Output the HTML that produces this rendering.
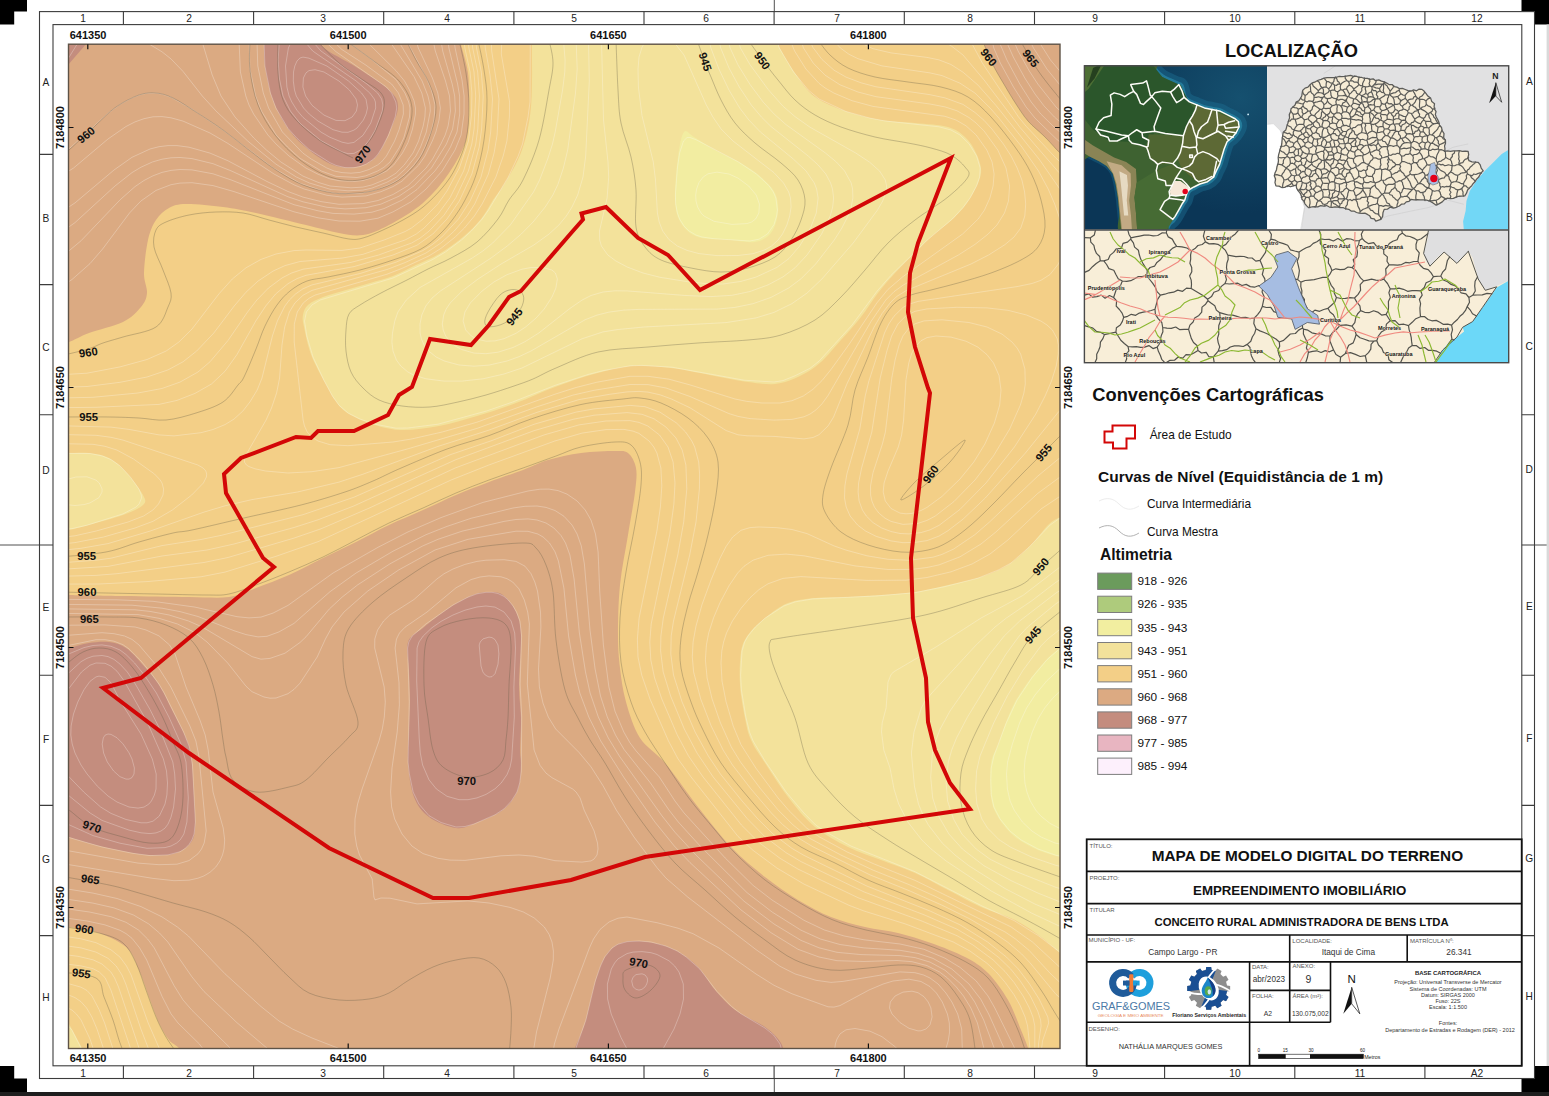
<!DOCTYPE html>
<html lang="pt-BR"><head><meta charset="utf-8"><title>Mapa de Modelo Digital do Terreno</title>
<style>
html,body{margin:0;padding:0;background:#fff;}
body{width:1549px;height:1096px;overflow:hidden;font-family:"Liberation Sans",sans-serif;}
svg{display:block}
svg text{font-family:"Liberation Sans",sans-serif;}
</style></head><body>
<svg width="1549" height="1096" viewBox="0 0 1549 1096">
<rect width="1549" height="1096" fill="#fff"/>

<clipPath id="mc"><rect x="68.5" y="44.2" width="991.5" height="1004.3"/></clipPath>
<g clip-path="url(#mc)">
<rect x="68.5" y="44.2" width="991.5" height="1004.3" fill="#f3cf87"/>
<path d="M60.0,342.0 C61.5,342.0 64.2,343.5 69.0,342.0 C73.8,340.5 80.0,336.3 89.0,333.0 C98.0,329.7 114.3,326.3 123.0,322.0 C131.7,317.7 137.0,311.8 141.0,307.0 C145.0,302.2 146.5,298.7 147.0,293.0 C147.5,287.3 143.8,281.8 144.0,273.0 C144.2,264.2 146.0,248.8 148.0,240.0 C150.0,231.2 152.5,225.3 156.0,220.0 C159.5,214.7 164.0,210.7 169.0,208.0 C174.0,205.3 177.0,204.2 186.0,204.0 C195.0,203.8 211.3,205.5 223.0,207.0 C234.7,208.5 242.2,210.0 256.0,213.0 C269.8,216.0 292.2,221.7 306.0,225.0 C319.8,228.3 329.5,231.3 339.0,233.0 C348.5,234.7 354.7,236.3 363.0,235.0 C371.3,233.7 379.0,230.3 389.0,225.0 C399.0,219.7 413.0,211.7 423.0,203.0 C433.0,194.3 441.8,183.5 449.0,173.0 C456.2,162.5 462.7,151.0 466.0,140.0 C469.3,129.0 468.7,118.2 469.0,107.0 C469.3,95.8 469.3,83.5 468.0,73.0 C466.7,62.5 462.3,51.2 461.0,44.0 C459.7,36.8 460.2,32.3 460.0,30.0 L60.0,30.0 Z" fill="#dbaa82"/>
<path d="M60.0,595.0 C61.3,595.0 57.5,594.8 68.0,595.0 C78.5,595.2 102.8,595.7 123.0,596.0 C143.2,596.3 171.3,596.8 189.0,597.0 C206.7,597.2 217.8,598.5 229.0,597.0 C240.2,595.5 246.0,591.7 256.0,588.0 C266.0,584.3 277.8,580.0 289.0,575.0 C300.2,570.0 311.8,563.5 323.0,558.0 C334.2,552.5 345.0,547.5 356.0,542.0 C367.0,536.5 377.8,530.3 389.0,525.0 C400.2,519.7 411.8,515.0 423.0,510.0 C434.2,505.0 445.0,499.7 456.0,495.0 C467.0,490.3 477.8,486.2 489.0,482.0 C500.2,477.8 513.2,473.7 523.0,470.0 C532.8,466.3 538.3,462.8 548.0,460.0 C557.7,457.2 569.8,454.5 581.0,453.0 C592.2,451.5 607.2,451.0 615.0,451.0 C622.8,451.0 624.5,450.2 628.0,453.0 C631.5,455.8 634.8,461.5 636.0,468.0 C637.2,474.5 636.3,480.8 635.0,492.0 C633.7,503.2 630.5,519.5 628.0,535.0 C625.5,550.5 621.7,568.3 620.0,585.0 C618.3,601.7 618.0,621.2 618.0,635.0 C618.0,648.8 618.7,656.8 620.0,668.0 C621.3,679.2 622.7,690.3 626.0,702.0 C629.3,713.7 633.5,727.8 640.0,738.0 C646.5,748.2 655.3,751.5 665.0,763.0 C674.7,774.5 687.0,793.0 698.0,807.0 C709.0,821.0 719.8,835.3 731.0,847.0 C742.2,858.7 753.8,868.2 765.0,877.0 C776.2,885.8 787.0,893.3 798.0,900.0 C809.0,906.7 819.8,912.5 831.0,917.0 C842.2,921.5 853.8,924.3 865.0,927.0 C876.2,929.7 887.0,930.3 898.0,933.0 C909.0,935.7 919.8,939.0 931.0,943.0 C942.2,947.0 955.5,952.0 965.0,957.0 C974.5,962.0 980.8,965.8 988.0,973.0 C995.2,980.2 1002.5,990.5 1008.0,1000.0 C1013.5,1009.5 1017.7,1022.0 1021.0,1030.0 C1024.3,1038.0 1026.5,1043.0 1028.0,1048.0 C1029.5,1053.0 1029.7,1058.0 1030.0,1060.0 L60.0,1060.0 Z" fill="#dbaa82"/>
<path d="M982.0,36.0 C982.3,37.3 982.2,39.2 984.0,44.0 C985.8,48.8 989.5,58.0 993.0,65.0 C996.5,72.0 1001.2,79.5 1005.0,86.0 C1008.8,92.5 1012.2,98.2 1016.0,104.0 C1019.8,109.8 1023.2,115.5 1028.0,121.0 C1032.8,126.5 1040.0,132.0 1045.0,137.0 C1050.0,142.0 1054.5,147.5 1058.0,151.0 C1061.5,154.5 1064.7,156.8 1066.0,158.0 L1070.0,30.0 Z" fill="#dbaa82"/>
<path d="M264.0,30.0 C264.0,32.3 263.8,37.8 264.0,44.0 C264.2,50.2 263.5,57.7 265.0,67.0 C266.5,76.3 269.0,89.5 273.0,100.0 C277.0,110.5 283.0,121.7 289.0,130.0 C295.0,138.3 301.7,144.2 309.0,150.0 C316.3,155.8 325.2,162.2 333.0,165.0 C340.8,167.8 348.8,168.3 356.0,167.0 C363.2,165.7 370.5,162.7 376.0,157.0 C381.5,151.3 385.3,141.3 389.0,133.0 C392.7,124.7 398.0,114.2 398.0,107.0 C398.0,99.8 396.0,96.7 389.0,90.0 C382.0,83.3 367.0,74.2 356.0,67.0 C345.0,59.8 329.3,53.2 323.0,47.0 C316.7,40.8 318.8,32.8 318.0,30.0 Z" fill="#c48d7e"/>
<path d="M60.0,35.0 L87.0,43.0 L68.0,65.0 L60.0,70.0 Z" fill="#c48d7e"/>
<path d="M60.0,648.0 C61.5,648.0 64.2,648.8 69.0,648.0 C73.8,647.2 82.3,644.0 89.0,643.0 C95.7,642.0 102.8,641.2 109.0,642.0 C115.2,642.8 120.3,644.2 126.0,648.0 C131.7,651.8 137.5,658.8 143.0,665.0 C148.5,671.2 154.0,677.2 159.0,685.0 C164.0,692.8 168.5,703.2 173.0,712.0 C177.5,720.8 183.0,730.8 186.0,738.0 C189.0,745.2 189.7,745.2 191.0,755.0 C192.3,764.8 193.3,784.5 194.0,797.0 C194.7,809.5 195.8,822.0 195.0,830.0 C194.2,838.0 192.7,841.0 189.0,845.0 C185.3,849.0 179.7,852.3 173.0,854.0 C166.3,855.7 157.3,855.5 149.0,855.0 C140.7,854.5 131.8,852.7 123.0,851.0 C114.2,849.3 105.0,847.3 96.0,845.0 C87.0,842.7 75.0,838.7 69.0,837.0 C63.0,835.3 61.5,835.3 60.0,835.0 Z" fill="#c48d7e"/>
<path d="M408.0,642.0 C410.3,635.0 416.2,633.7 423.0,628.0 C429.8,622.3 440.7,613.5 449.0,608.0 C457.3,602.5 466.3,597.7 473.0,595.0 C479.7,592.3 484.0,592.0 489.0,592.0 C494.0,592.0 498.5,591.7 503.0,595.0 C507.5,598.3 513.0,605.3 516.0,612.0 C519.0,618.7 520.5,622.8 521.0,635.0 C521.5,647.2 519.0,671.2 519.0,685.0 C519.0,698.8 520.8,707.2 521.0,718.0 C521.2,728.8 520.0,742.2 520.0,750.0 C520.0,757.8 521.3,758.3 521.0,765.0 C520.7,771.7 521.0,782.5 518.0,790.0 C515.0,797.5 510.0,804.5 503.0,810.0 C496.0,815.5 483.8,820.0 476.0,823.0 C468.2,826.0 463.8,829.0 456.0,828.0 C448.2,827.0 436.0,822.2 429.0,817.0 C422.0,811.8 417.5,806.0 414.0,797.0 C410.5,788.0 408.8,774.2 408.0,763.0 C407.2,751.8 408.7,740.5 409.0,730.0 C409.3,719.5 410.0,710.0 410.0,700.0 C410.0,690.0 409.3,679.7 409.0,670.0 C408.7,660.3 405.7,649.0 408.0,642.0 Z" fill="#c48d7e"/>
<path d="M572.0,1060.0 C572.5,1058.0 572.8,1054.2 575.0,1048.0 C577.2,1041.8 581.7,1033.8 585.0,1023.0 C588.3,1012.2 591.7,994.0 595.0,983.0 C598.3,972.0 600.7,963.7 605.0,957.0 C609.3,950.3 613.8,945.5 621.0,943.0 C628.2,940.5 639.0,940.8 648.0,942.0 C657.0,943.2 666.7,945.8 675.0,950.0 C683.3,954.2 691.3,960.3 698.0,967.0 C704.7,973.7 708.8,982.8 715.0,990.0 C721.2,997.2 726.7,1003.8 735.0,1010.0 C743.3,1016.2 757.3,1021.5 765.0,1027.0 C772.7,1032.5 777.7,1037.5 781.0,1043.0 C784.3,1048.5 784.3,1057.2 785.0,1060.0 Z" fill="#c48d7e"/>
<path d="M532.0,30.0 C532.0,32.3 532.2,31.2 532.0,44.0 C531.8,56.8 532.7,89.3 531.0,107.0 C529.3,124.7 526.3,137.3 522.0,150.0 C517.7,162.7 509.8,174.7 505.0,183.0 C500.2,191.3 497.0,194.0 493.0,200.0 C489.0,206.0 486.0,212.8 481.0,219.0 C476.0,225.2 470.0,231.2 463.0,237.0 C456.0,242.8 446.8,249.3 439.0,254.0 C431.2,258.7 423.7,261.3 416.0,265.0 C408.3,268.7 400.7,273.0 393.0,276.0 C385.3,279.0 377.8,280.7 370.0,283.0 C362.2,285.3 353.8,287.7 346.0,290.0 C338.2,292.3 329.3,294.5 323.0,297.0 C316.7,299.5 311.3,302.0 308.0,305.0 C304.7,308.0 303.7,311.3 303.0,315.0 C302.3,318.7 302.5,320.0 304.0,327.0 C305.5,334.0 307.8,346.5 312.0,357.0 C316.2,367.5 325.2,382.8 329.0,390.0 C332.8,397.2 332.2,396.3 335.0,400.0 C337.8,403.7 340.3,408.2 346.0,412.0 C351.7,415.8 360.0,420.0 369.0,423.0 C378.0,426.0 388.3,429.5 400.0,430.0 C411.7,430.5 426.2,428.3 439.0,426.0 C451.8,423.7 464.2,419.8 477.0,416.0 C489.8,412.2 503.0,407.8 516.0,403.0 C529.0,398.2 542.0,391.8 555.0,387.0 C568.0,382.2 581.2,377.5 594.0,374.0 C606.8,370.5 619.2,367.0 632.0,366.0 C644.8,365.0 659.7,366.8 671.0,368.0 C682.3,369.2 687.2,370.7 700.0,373.0 C712.8,375.3 734.5,380.3 748.0,382.0 C761.5,383.7 769.8,385.5 781.0,383.0 C792.2,380.5 805.0,374.2 815.0,367.0 C825.0,359.8 833.3,348.3 841.0,340.0 C848.7,331.7 854.8,324.8 861.0,317.0 C867.2,309.2 872.3,300.3 878.0,293.0 C883.7,285.7 888.8,279.7 895.0,273.0 C901.2,266.3 909.0,259.0 915.0,253.0 C921.0,247.0 924.3,243.0 931.0,237.0 C937.7,231.0 948.3,223.7 955.0,217.0 C961.7,210.3 966.7,204.3 971.0,197.0 C975.3,189.7 980.2,180.3 981.0,173.0 C981.8,165.7 978.7,159.0 976.0,153.0 C973.3,147.0 969.7,141.3 965.0,137.0 C960.3,132.7 956.3,129.3 948.0,127.0 C939.7,124.7 926.2,124.2 915.0,123.0 C903.8,121.8 892.2,121.8 881.0,120.0 C869.8,118.2 859.0,115.8 848.0,112.0 C837.0,108.2 823.8,103.5 815.0,97.0 C806.2,90.5 801.2,81.8 795.0,73.0 C788.8,64.2 781.3,51.2 778.0,44.0 C774.7,36.8 775.5,32.3 775.0,30.0 Z" fill="#f3e29b"/>
<path d="M60.0,453.0 C61.5,453.0 64.2,453.0 69.0,453.0 C73.8,453.0 82.3,452.2 89.0,453.0 C95.7,453.8 102.8,454.8 109.0,458.0 C115.2,461.2 120.3,465.8 126.0,472.0 C131.7,478.2 140.2,489.5 143.0,495.0 C145.8,500.5 146.3,501.7 143.0,505.0 C139.7,508.3 132.0,511.7 123.0,515.0 C114.0,518.3 98.0,522.5 89.0,525.0 C80.0,527.5 73.8,529.0 69.0,530.0 C64.2,531.0 61.5,530.8 60.0,531.0 Z" fill="#f3e29b"/>
<path d="M1070.0,512.0 C1068.3,512.8 1063.7,514.8 1060.0,517.0 C1056.3,519.2 1052.8,520.3 1048.0,525.0 C1043.2,529.7 1037.7,538.3 1031.0,545.0 C1024.3,551.7 1016.3,559.7 1008.0,565.0 C999.7,570.3 991.0,573.7 981.0,577.0 C971.0,580.3 959.0,582.5 948.0,585.0 C937.0,587.5 926.2,590.3 915.0,592.0 C903.8,593.7 892.2,594.2 881.0,595.0 C869.8,595.8 859.0,596.5 848.0,597.0 C837.0,597.5 825.0,597.0 815.0,598.0 C805.0,599.0 796.3,599.7 788.0,603.0 C779.7,606.3 771.7,612.7 765.0,618.0 C758.3,623.3 752.0,629.3 748.0,635.0 C744.0,640.7 742.3,643.7 741.0,652.0 C739.7,660.3 739.3,674.0 740.0,685.0 C740.7,696.0 743.2,708.8 745.0,718.0 C746.8,727.2 747.7,732.5 751.0,740.0 C754.3,747.5 758.8,753.5 765.0,763.0 C771.2,772.5 779.7,786.3 788.0,797.0 C796.3,807.7 805.0,818.7 815.0,827.0 C825.0,835.3 837.0,841.5 848.0,847.0 C859.0,852.5 869.8,855.7 881.0,860.0 C892.2,864.3 903.8,868.0 915.0,873.0 C926.2,878.0 937.0,884.3 948.0,890.0 C959.0,895.7 969.8,902.0 981.0,907.0 C992.2,912.0 1005.0,915.0 1015.0,920.0 C1025.0,925.0 1033.5,931.5 1041.0,937.0 C1048.5,942.5 1055.2,949.2 1060.0,953.0 C1064.8,956.8 1068.3,958.8 1070.0,960.0 Z" fill="#f3e29b"/>
<path d="M684.0,132.0 C681.3,135.3 679.5,145.7 678.0,157.0 C676.5,168.3 674.5,189.0 675.0,200.0 C675.5,211.0 677.2,216.8 681.0,223.0 C684.8,229.2 689.7,234.2 698.0,237.0 C706.3,239.8 721.5,239.2 731.0,240.0 C740.5,240.8 748.3,243.2 755.0,242.0 C761.7,240.8 767.2,237.8 771.0,233.0 C774.8,228.2 777.3,219.7 778.0,213.0 C778.7,206.3 777.8,199.0 775.0,193.0 C772.2,187.0 766.7,182.0 761.0,177.0 C755.3,172.0 748.7,167.5 741.0,163.0 C733.3,158.5 722.8,154.3 715.0,150.0 C707.2,145.7 699.2,140.0 694.0,137.0 C688.8,134.0 686.7,128.7 684.0,132.0 Z" fill="#f2eda1"/>
<path d="M1070.0,642.0 C1068.3,643.0 1063.7,645.3 1060.0,648.0 C1056.3,650.7 1052.8,653.0 1048.0,658.0 C1043.2,663.0 1036.5,670.7 1031.0,678.0 C1025.5,685.3 1019.3,694.2 1015.0,702.0 C1010.7,709.8 1007.8,717.8 1005.0,725.0 C1002.2,732.2 1000.3,738.7 998.0,745.0 C995.7,751.3 992.2,754.3 991.0,763.0 C989.8,771.7 989.8,788.0 991.0,797.0 C992.2,806.0 994.0,810.3 998.0,817.0 C1002.0,823.7 1008.3,831.5 1015.0,837.0 C1021.7,842.5 1030.5,846.7 1038.0,850.0 C1045.5,853.3 1054.7,855.5 1060.0,857.0 C1065.3,858.5 1068.3,858.7 1070.0,859.0 Z" fill="#f2eda1"/>
<path d="M60.0,926.0 C61.5,926.2 63.0,926.0 69.0,927.0 C75.0,928.0 86.5,928.7 96.0,932.0 C105.5,935.3 118.8,940.7 126.0,947.0 C133.2,953.3 135.2,961.7 139.0,970.0 C142.8,978.3 145.7,988.2 149.0,997.0 C152.3,1005.8 155.7,1015.8 159.0,1023.0 C162.3,1030.2 165.7,1035.8 169.0,1040.0 C172.3,1044.2 176.3,1044.7 179.0,1048.0 C181.7,1051.3 184.0,1058.0 185.0,1060.0 L60.0,1060.0 Z" fill="#f3cf87"/>
<path d="M60.0,1018.0 L68.0,1022.0 L82.0,1048.0 L85.0,1060.0 L60.0,1060.0 Z" fill="#f3e29b"/>
<path d="M1068,686.9l-6,2.7 -9,8.2 -8.3,10.2 -6.7,11 -5.7,13 -3.9,12 -3.3,15 -1,12 0.8,12 2,9 3.4,9 5.4,9 5.3,6.2 9,7.2 9,4.7 9,2.3M1068,665.2l-9,4.3 -12,11.1 -12,14.4 -8.4,13 -7,15 -7.2,21 -4.8,18 -1.1,12 0.9,15 2.7,12 4,9 8.3,12 9.5,9 9.2,6 13.9,6 13,2.7M708,173.8l-4.8,3.2 -4.2,5.5 -2.4,6.5 -0.9,6 0.3,6 1.6,6 3.5,6 2.9,3 10,5.3 18,3.1 15,-0.8 4.6,-1.6 4,-3 3.3,-6 0.5,-9 -3.2,-9 -7.5,-9 -10.7,-7.9 -9,-4.1 -12,-1.9 -9,1.7M1068,645.5l-9,3.8 -12,10.4 -15,17.9 -15,22.5 -10.8,22.9 -12.3,33 -2.7,12 -0.4,12 0.5,15 2.6,12 6.2,12 9.8,12 11.3,9 16.8,9 18,6.3 12,2.2M687,137.6l-3.5,3.4 -3.9,12 -2.2,15 -2,27 0.3,9 1.7,9 2.2,6 4.4,7 5.1,5 6.9,4.1 6,1.9 12,1.7 36,2.3 9,-1.8 8.5,-5.2 6.5,-9.4 2.6,-8.6 0.8,-6 -1.5,-12 -2.6,-6 -4,-6 -12.9,-12 -18.4,-12.3 -42,-22 -6,-2.2 -3,0.1M648.5,36l-6.5,11.3 -3,9.7 -1,12 0.4,18 3.6,28.7 11.3,46.3 2.2,18 1.9,33 1.8,9 3.5,9 6.3,8.6 8.3,6.4 9.7,4.4 12,3.2 18,2 21,-0.1 15,-1.8 12,-3.9 6.6,-3.8 6.5,-6 4.4,-6 4.4,-9 2.8,-9 1.4,-9 -0.6,-9 -1.8,-6 -5.2,-9 -9.5,-10.3 -41,-31.7 -11.9,-12 -8.2,-12 -6.6,-12 -22.3,-50 -14.8,-19M1068,625.5l-9,4.6 -11.2,8.9 -6.8,6.8 -18,24.5 -15.7,25.7 -13.6,27 -13.7,33 -3.4,15 -1,18 1.3,15 5,15 5.6,9 11.5,11.7 12,7.7 21,9.8 24,8.2 12,2.5M601.4,36l2.1,84 4.5,42 0.7,15 -1.6,21 -7.6,33 0.2,9 1.7,6 6.4,9 8.1,6 11.3,6 15.8,6 17,4.3 27,4.3 21,2.2 15,0.2 18,-2.6 15,-4.3 21,-9.7 12,-8.9 10.7,-12.5 10.8,-18 5.8,-15 1.8,-15 -1.5,-9 -2.3,-6 -8.2,-12 -12.8,-12 -32.9,-27 -11.5,-12 -9.2,-12 -10.7,-17.9 -10.1,-21.1 -8,-21 -2.8,-12M1068,597.7l-6,2.1 -6,3.9 -28.4,23.3 -8.4,9 -13.1,18 -38.6,63 -11,21 -4.8,12 -3.4,12 -2.2,21 1.5,18 5.9,18 8.4,15 14.3,15 13.8,10.2 21,10.3 45,17.9 12,3.4M522,269.2l-15,5.5 -13.1,7.3 -11.8,9 -11.8,12 -5.4,9 -1.8,9 2.6,9 5.6,6 5.7,3.2 9,2 9,-0.3 9,-2.2 12,-5.4 9.6,-6.3 10.5,-9 8.1,-9 7.8,-12 3.9,-9 1.5,-9 -2,-6 -3.5,-3 -8.9,-2.5 -12,0 -9,1.7M588.4,36l0.9,45 -3.6,75 -2.7,21 -5.3,18 -5.7,12 -5.7,9 -7.4,9 -9.8,9 -15.1,10.9 -33,19.2 -22.9,14.9 -15.9,12 -12,12 -4,6 -2.5,6 -1.4,9 0.9,6 2.5,6 4.7,6 5.6,4.5 6,3.1 12,3.5 12,0.6 12,-1.5 15,-4.7 12,-5.8 13.8,-8.7 31.2,-24.6 12,-8.3 9,-4.6 12,-3.5 12,-1.2 12,0.1 57,4.5 27,1.2 21,-1.3 18,-3.8 18,-6.6 15,-8 12,-9.1 12,-12.8 14.6,-21 8.6,-18 2.5,-9 0.9,-9 -1.1,-9 -1.9,-6 -4.8,-9 -7.6,-9 -10,-9 -37.2,-29.5 -9.6,-9.5 -10.1,-12 -12,-18 -10.3,-19 -8.3,-20 -2.7,-12M1068,587.3l-6,2 -6,3.7 -36.3,28 -15.5,15 -14.3,18 -39.9,57 -9.8,18 -4.7,12 -3.1,12 -1.7,24 2,21 5.8,18 10.4,18 13.5,15 21.6,16.8 27,14.8 27,12.5 21,8.4 9,2.3M575.9,36l1.3,33 -1.7,24 -7.8,57 -4.3,18 -5.4,16.2 -5.1,10.8 -7.7,12 -12.1,15 -11.8,12 -14.1,12 -16.1,12 -50.7,33 -8.4,7.1 -6.2,7.9 -4,9 -1.8,9 0.1,9 1.3,6 2.7,6 4.9,6.3 7.2,5.7 7.8,3.9 15,4.1 15,1.2 15,-1.1 18,-4.1 12,-4.3 12,-5.7 54,-31.2 12,-4.7 12,-3 15,-2 15,-0.7 78,-0.3 18,-1.7 18,-3.7 18,-6.3 17.7,-9.4 12.3,-9.2 14.7,-14.8 18.6,-24 7.6,-12 6.1,-12 3.2,-9 1.7,-9 -0.3,-9 -1.4,-6 -6.6,-12 -8.2,-9 -11,-9 -39.4,-28.4 -11.9,-10.6 -11,-12 -13.1,-17.6 -12,-19.5 -7.9,-16.9 -2.8,-12M1068,576.5l-6,2 -6,3.7 -24,18.4 -25.6,17.4 -11.4,9 -18.9,18 -44.2,48 -7.4,9 -3.2,6 -7.3,24 -2.6,21 3,33 4.1,18 4.9,12 5,9 13.8,18 12.8,12 14,10.8 36,22.7 30,15.6 24,10 9,2.3M563.1,36l2,24 -0.3,12 -2.2,18 -7.4,42 -2.7,12 -4.8,15 -8.1,21 -6.1,12 -23.2,33 -17.6,18 -9.7,7.9 -10.7,7.1 -52.3,29.5 -13.7,12.5 -8.4,12 -3.1,9 -2.3,12 -0.6,9 1.1,9 3.4,9 4.4,6 7.1,6 5.7,3 12.4,3.8 18,2.3 18,0 21,-2.3 21,-4.8 18,-6 60,-29.2 21,-6.9 15,-2.4 26,-2.5 82,-4.4 30,-4.7 18,-5.5 18,-8.8 15,-10.5 14.9,-14.1 31.3,-36 24.3,-33 5.2,-9 3.3,-9 0.6,-6 -1.3,-6 -5.7,-9 -10.2,-9 -13.7,-9 -45.7,-25.8 -15,-10.6 -12,-10.4 -15,-16.9 -18,-24.7 -9.6,-16.6 -3.2,-12M60,504l15,1.5 9,-0.9 6,-1.7 9,-5.3 3,-5.5 0.1,-3.1 -2.8,-6 -3.3,-2.9 -9,-3.3 -11.1,0.2 -15.9,4.3M1068,563.8l-9,4 -36,27.6 -41.9,22.6 -45.1,29 -42.6,25 -2.6,3 -2.8,7.2 -1.9,25.8 -3.9,15 -0.7,9 2.3,18 6.2,18 4,21 4.7,15 9.1,18 14,18 9.3,9 15,12 45.1,30 40.8,22.3 27,12.6 9,2.7M530.3,36l-0.3,66 -2,15 -5.5,27 -4.3,12 -9.9,21 -19.8,33 -6.3,9 -10.9,12 -9.8,9 -16.1,12 -13.4,7.9 -39,18.1 -72.8,22 -8.2,4.9 -5.6,7.1 -1.9,9 2.3,15 6.2,21 11,23.4 8.4,15.6 6.6,9.2 9,7.8 12,6.1 15,5.1 21,4 12,-0.2 30,-3.8 48.5,-13.2 26.2,-9 42.3,-16.6 33,-10.9 15,-3.8 27,-4.9 12,-0.4 30,1.8 72,13 30,1.8 9,-1.4 12,-4.8 15,-7.5 9,-7.1 33,-36.1 25.2,-34.1 13.8,-15.7 36,-35 25.3,-21.3 10.7,-11.5 7,-9.5 6.5,-12 3.1,-9 0.6,-9 -3.6,-12 -7.4,-12 -9.2,-9 -9,-5 -12,-3.2 -54,-5.8 -15,-2.9 -24,-6.6 -27,-12.5 -10.8,-9 -14.7,-18 -14.3,-24 -3.4,-12M1068,515.5l-9,3.2 -8.9,6.3 -21.1,22.2 -18,15.8 -12.8,7 -20.2,8.1 -33,8.5 -30,6.1 -39,3.3 -63,2.9 -18,3 -11.2,4.1 -18.8,12.2 -9.6,8.8 -7.4,9 -3.3,6 -2.7,9 -1.4,24 0.8,15 4.4,27 3.7,15 3.6,9 11.9,20 21.1,31 17.8,21 11.8,12 8.6,6 26.5,15 64.2,25.7 67,34.3 32,14.5 24.8,15.5 20.2,15.5 9,4.2M60,529.9l12,-1.3 15,-3.4 36,-11.3 13.1,-6.9 3,-3 2.4,-6 -0.2,-3 -2.4,-6 -8.5,-12 -10.4,-11.1 -9,-6.3 -9,-3.7 -12,-2.4 -30,-0.2M82.5,1056l-2,-9 -8.5,-16.8 -6,-6.9 -6,-2.5M502,36l-0.7,18 8.3,48 -0.2,15 -2.5,24 -3.7,15 -7.3,21 -13.8,27 -7.7,12 -10,12 -9.2,9 -14.2,11.4 -12,7.5 -27,12.5 -15,5.8 -72,20.9 -6,3.2 -5.8,4.7 -5.9,9 -3,12 -0.1,18 8.9,78 1.4,6 2.7,6 4.8,5.2 6,3.8 12,3.7 18,1 45,-3.7 18,-2.9 31.2,-7.1 34.8,-9.8 78,-28 21,-6.7 21,-5.3 33,-5.9 18,0 21,2.9 21,5.7 45,14.1 12,2.4 15,1.6 18,0 12,-2.3 11.3,-4.7 9.7,-6.7 9,-8.7 9,-11.1 18,-25 27.8,-41.5 11.2,-13.6 15,-12.8 59.6,-42.6 15.6,-15 6.3,-9 5.4,-12 3.2,-12 1,-12 -2,-12 -5.3,-12 -10.6,-15 -10.2,-9.2 -10,-5.8 -11,-3.7 -72,-9.9 -21,-5.7 -18,-7.6 -9,-5.2 -6,-4.6 -13.1,-14.3 -11.3,-18 -3.7,-9 -1.2,-6M1068,493.7l-9,3.3 -18,12 -33.1,31 -17.9,14 -18,10 -21,7.8 -24,5.7 -21,2.7 -39,0.2 -66,-3.8 -18,1.8 -15,5.4 -9,5.8 -9,8.2 -9,10.5 -8.6,12.7 -5.9,12 -2.9,9 -1.8,9 -0.8,12 1,18 4,20.4 7.2,24.6 7.8,18.7 14.8,23.3 22.3,30 10.9,12.7 17.6,17.3 13,9 27.6,15 27,12 40.8,16.4 96,46.5 21.5,15.1 26.5,24.5 9,4.5M60,537.5l15,-1.7 21.2,-4.8 31.8,-9 15.6,-6 9.3,-6 5.6,-6 4.5,-9 0.6,-6 -1.6,-6 -1.8,-3 -5.7,-6 -21,-15 -16.5,-8.9 -12,-3.8 -12,-2 -33,-0.7M94.4,1056l-1.4,-8 -3,-9 -9,-19.1 -4.6,-5.9 -4.4,-3.9 -6,-3.1 -6,-1.4M491.1,36l0.6,15 7.3,48 -1.9,36 -3,18 -5.7,21 -13.7,30 -7.7,12 -12.7,15 -13.4,12 -14.9,10 -21,9.6 -18,6.9 -75,20.9 -9,4.9 -8.1,7.7 -5.5,9 -4.7,15 -2.7,18 -2.4,33 -3,15 -5.1,15 -5.4,12 -20.8,36 -0.9,6 2,3 2.6,1.6 6,2.2 10.5,2.2 22.5,2 24,-1.3 27,-4.1 69,-18.8 69,-20.4 60,-21.6 36,-11.7 21,-4.8 36,-5.8 18,0.1 18,3.4 24,8.5 39,17.1 9,2.8 12,2.2 24,1.5 18,-0.7 12,-2.6 6,-2.7 6,-4.2 6,-6.1 6,-8.2 43.3,-74.6 14.5,-21 8.2,-8.3 9,-6.5 55.4,-30.2 16.6,-10.6 13.2,-10.4 8.7,-9 7.6,-12 4,-12 1.1,-15 -3.6,-18 -8.2,-18 -13.8,-19.1 -7.9,-7.9 -7.1,-5.5 -12,-6.7 -12,-3.9 -15,-2.9 -54,-7.3 -18,-4.7 -18,-7.2 -15,-9.7 -11.8,-12.1 -9.7,-15 -3.7,-12M1068,474l-9,3.8 -21,15.4 -42,38.7 -15,12.1 -21,12.8 -21,8.1 -12,2.6 -15,1.9 -24,0.1 -33,-3.6 -51,-10.1 -18,-1.7 -18,1.2 -15,4.9 -9,6.1 -6.3,6.7 -8.7,12.8 -9,16.9 -6.5,15.3 -4.8,15 -2.3,12 -1,15 1.7,18 5,21 8.4,24 10.8,24 9.2,15 20.2,27 17.4,21 15,15 16.9,13.5 30.8,16.5 32.2,15.1 36,14.5 27,12.1 69,35.2 10.5,7.1 13.5,11.3 21,22.8 9,8.5 6,3.9 3,0.8M60,544.2l15,-1.6 28.6,-5.6 31.4,-9 18,-6.7 19.4,-11.3 19.3,-15 11.7,-12 3,-6 0.3,-3 -0.9,-3 -2.7,-3 -5.3,-3 -74.8,-24.9 -12,-2.8 -15,-2 -36,-0.8M104.7,1056l-1.7,-9 -6,-18 -5.1,-12 -5.3,-9 -5.6,-6.3 -6,-4.1 -6,-2.4 -9,-1.8M484.5,36l0.8,12 4.7,27 2.5,24 -1.8,33 -2.6,18 -7.1,27 -10.9,24 -11.6,18 -16.7,18 -9.8,7.8 -9,5.7 -27,11.7 -36,11.3 -48,11.4 -9,3.9 -7.5,5.2 -6.1,6 -4.5,6 -7.5,15 -5,15 -10.4,42 -4.8,12 -7.3,12 -7,9 -8.9,8.1 -9,5.5 -12,4.9 -12,3.2 -27,3.2 -15,-1 -30,-5.5 -18,-2.3 -51,-1.4M1068,454l-9,4.5 -21,17.4 -48.5,46.1 -14.5,12.6 -21.3,14.4 -11.7,5.4 -9,2.8 -24,3.1 -21,-1 -21,-3.5 -21,-5.7 -12,-4.2 -27,-12.3 -15,-4.1 -15,-1.8 -18,-0.7 -9,0.6 -9,2.7 -8.3,6.7 -6.7,9.6 -6,11.7 -9,21.8 -9,24.5 -6,21.4 -2.9,16 -0.8,15 1.3,15 7.1,27 10.5,27 11.9,24 9.4,15 18.5,24 20.4,24 11.6,11.9 18,14.7 12,7.2 57,28.1 39,15.7 33,14.6 27,13.3 27,15.7 11.5,7.8 14.2,12 8.5,9 25.8,31.4 6,4.9 6,2.1M60,550.5l21,-2.2 27,-4.7 42,-12.5 54,-19 21,-6.3 27,-6.2 45.6,-7.6 41.4,-9.9 24,-7.9 75,-27.8 51,-16.3 48,-17.8 42,-12.7 30,-5.2 18,-2.5 12,-0.5 9,0.7 12,2.7 11.5,4.2 18.5,8.8 36,22.7 12,4.3 9,1 27,0.6 30,2.5 9,-1.4 6,-2.8 9,-8.7 5.6,-9 13.3,-33 27.2,-57 7.9,-13.4 9,-11.8 6,-5.5 9,-5.6 65,-26.7 17.6,-9 16.4,-10.4 9,-7.6 6.8,-9 4,-12 0.9,-12 -1.1,-12 -2.7,-12 -4.7,-12 -6.1,-12 -7.7,-12 -11.5,-15 -7.9,-8.7 -9,-7.8 -12,-8.1 -18,-6.5 -15,-3.2 -54,-7.9 -15,-4 -15,-5.7 -12,-6.9 -12,-10.7 -9,-12 -2.6,-5.5 -1.4,-6M114.3,1056l-1.9,-9 -7.8,-24 -5.6,-13.6 -7,-13.4 -5,-5.5 -6,-3.3 -11.2,-3.2 -9.8,-1.3M475.3,36l1.2,12 4.8,24 1.9,24 -1.6,33 -2.4,18 -7.3,27 -12.6,27 -12.3,18 -14.2,15 -15.8,11.2 -24,9.8 -39,11.6 -48,8.7 -9,3.3 -9,5.1 -12.4,10.3 -9.9,12 -9.9,15 -18.8,33.5 -12,16.8 -13.5,12.7 -16.5,9.4 -18,7 -18,4 -63,2.9 -36,0.4M1068,404.6l-3,1.2 -6,5.5 -33.6,41.7 -40.1,45 -22.3,21.2 -15,11.5 -9,5.4 -12,4.5 -12,1.8 -12,0.3 -12,-1.8 -15,-4.6 -10.5,-5.3 -7.9,-6 -7.5,-9 -3.9,-9 -1.7,-9 0.4,-12 2,-12 12.9,-45 5.4,-33 3.7,-15 15.6,-48 4.3,-9 5.2,-7.8 9,-8.8 6,-3.2 9,-2.8 99,-14.8 15,-3.1 9,-3.2 9,-5.8 8.4,-10.5 5.1,-12 1.5,-12 -2,-12 -8.3,-24 -6.5,-15 -9.7,-18 -16.6,-24 -22.9,-28.8 -9,-10.3 -15,-14.8 -15,-9.9 -18,-7.6 -12,-2.7 -48,-7 -24,-7.2 -9,-4.4 -8.6,-6.3 -5.4,-6 -2.5,-6M60,562.9l36,-2.7 15,-2 51,-12.6 39,-6.1 21,-4.3 81,-20.5 51,-17.5 96,-42.4 42,-14.3 42,-16.2 42,-12.2 18,-3.2 36,-3.5 15,1.3 15,5.5 16.5,10.8 9.1,9 6.2,9 2.9,6 4,15 0.9,12 -0.2,15 -3.4,33 -6.3,33 -16.2,66 -2.3,15 -0.4,18 2.7,21 8.6,27 13,30 13.2,24 12.1,18 21.7,27 15.8,18 15.1,15 19,14.4 12,7 63,30.7 63,24.9 30,13.8 27.6,17.2 18.8,15 11.9,12 11.3,15 9.5,15 8.7,18 0.9,6 -6.2,18 -1.7,15M132.1,1056l-2,-9 -19.2,-57 -5.9,-12.4 -5.7,-5.6 -6.3,-3.3 -12,-2.8 -21,-2.7M471.4,36l1.3,12 5,24 1.7,24 -1.6,33 -2,15 -7.4,27 -12.4,26.4 -12,17.8 -14.8,15.8 -9.2,7.2 -8.4,4.8 -32.9,12 -27.7,7.4 -48,6.8 -11.4,3.8 -9.6,5 -13.5,10 -11.6,12 -9.3,12 -19.6,28.5 -18,21.3 -12,10.2 -18,10.1 -18,6.4 -24,4.5 -45,4.3 -33,0.7M1068,197.4l-6,-5.3 -23,-33.1 -43,-53.5 -18,-20.4 -15,-12.9 -12,-7.7 -12,-4.6 -12,-2.5 -36,-4.5 -18,-4.2 -14,-6.7 -3.2,-3 -1.6,-3M60,569.4l48,-3 54,-10.4 45,-6 27,-6 60,-16.5 24,-7.7 36,-13.9 102,-46.3 78,-28.9 39,-11.4 21,-4.1 33,-2.6 15,1.7 12,4.5 12,8.3 10,10.9 6.2,12 3.7,15 0.9,24 -3.1,33 -5.9,33 -14.5,63 -2.4,18 -0.3,15 2.6,21 7.4,24 13.7,33 12.7,24 16.2,24 33.8,41.4 18,18.4 21,15.9 15,8.9 63,30.3 60.6,23.1 32.4,14.2 21.5,12.8 20.5,15.7 11.7,11.3 9.6,12 10,15 7.4,15 2.9,9 0.5,6 -2.6,18 -0.5,12M140.9,1056l-1.2,-6 -21.2,-63 -3.9,-9 -3.7,-6 -8.9,-8 -9,-4.2 -15,-3.5 -18,-2.3M927,308.9l30,-1.6 30,0.6 21,2.4 18.5,4.7 14.5,6.1 6,3.9 5.4,5 4.9,9 1.1,6 -0.1,9 -2.1,12 -4.7,15 -6.4,15 -9.3,18 -21.4,33 -28.4,36 -26,26.4 -21,16 -9,4.5 -9,2.7 -12,1.3 -9,-0.4 -9,-2 -9.3,-3.5 -8.7,-5.4 -6.7,-6.6 -3.9,-6 -3.3,-9 -1,-9 0.5,-9 3,-15 10.2,-36 8.4,-54 6.7,-27 4.7,-15 6.3,-12 8.1,-8.3 9,-4.4 12,-2.4M467.5,36l1.4,12 5.1,24 1.7,24 -1.6,33 -2.3,15 -8.2,27 -13.6,26.8 -12,16.2 -13.9,14 -7.8,6 -11.3,6 -42,14.3 -21,3.8 -42,3.4 -15,4.1 -12,5.5 -15,10 -12,11.1 -11.8,13.8 -20.4,27 -17.1,18 -13.7,10.8 -15,8.1 -21,7.1 -27,5.3 -33,4.2 -27,0.8M1068,179.7l-3,-1.4 -6,-5.7 -39,-45.2 -36,-47.5 -21,-24.9 -12,-9.3 -19.5,-9.7M60,576.3l36,-0.9 21,-1.7 87,-11.2 24,-5 66,-19.4 27,-9.3 48,-20.6 86.2,-40.2 88.7,-33 35.1,-10.1 27,-3.9 24,-0.4 9,1.8 8.8,3.6 11.7,9 8.5,12 5.1,15 1.9,21 -1.1,21 -4.1,30 -18.6,90 -1.4,18 1,18 3.8,18 7.2,21 15.5,36 11.2,21 14.6,21 38.3,48 17.6,17.5 21,15.8 18,10.8 60,28.6 63.7,23.3 35.3,14.7 16,9.3 20.2,15 11.8,11.5 9,10.9 9.1,13.6 6.3,12 3.5,9 1.9,9 0,30M150.3,1056l-1.3,-6 -8.1,-21 -15.1,-45 -3.8,-9 -5.8,-9 -8.2,-7.7 -12,-6.2 -15,-4.2 -21,-3M924,320.9l18,-1.1 27,2.7 18,4.5 15,7.1 10,7.9 5.1,6 3.5,6 4.3,15 0.4,15 -1.4,9 -3.5,12 -10.7,24 -16.3,27 -18.4,24 -21,21.5 -18.7,14.5 -8.3,4.4 -9,3 -15,1 -12,-3 -6,-3.2 -6.2,-5.2 -4.4,-6 -2.5,-6 -1.3,-6 -0.1,-9 2.5,-13.3 9.4,-28.7 3,-12 6.4,-54 3.3,-18 4,-15 3.9,-9.2 6,-7.8 6,-4.2 9,-2.9M463.4,36l1.5,12 5.2,24 1.8,21 -0.3,21 -3.1,27 -9.1,27 -12.4,23 -9,12.8 -15,15.3 -11.5,8.9 -6.5,3.6 -20.9,8.4 -24.1,8 -18,2.4 -36,-0.4 -12,0.6 -18,3.4 -15,5.4 -15,8.4 -13.7,11.2 -13.3,14.8 -27,35.2 -13.1,13 -12.7,9 -19.2,8.5 -27,7.4 -33,6.3 -27,1.6M1068,167l-6,-3.2 -6,-5.6 -30,-32.1 -7.5,-9.1 -36.2,-54 -11.2,-21 -1.9,-6M60,584.1l39,-0.1 48,-2.4 54,-4.8 24,-4.7 51,-15.8 42,-14.6 133.1,-61.7 37.8,-15 65.9,-24 27.2,-7.9 24,-3.5 18,-0.2 9,1.7 6,2.3 10.1,7.6 4.7,6 3.1,6 4,15 0.9,18 -1.4,21 -3.5,24 -17.8,87 -1.7,21 0.6,18 3.7,18 8.3,24 18.5,42 9.6,18 13,18 46.9,59.4 15,13.9 24,17.8 27,16 45,21.2 15,5.7 41.6,13 47.7,18 16.6,9 17.1,12.3 9.3,8.7 8.7,10.2 9,12.5 6,10.5 5.1,11.8 2.5,9 3.2,30M161.6,1056l-1.6,-6 -11.8,-27 -17.1,-48 -4.6,-9 -6.5,-8.9 -9,-7.3 -15,-7.1 -15,-3.9 -21,-3.1M936,336l15,1.1 15,4.1 12,6 9,7.5 6.5,8.3 5.5,12.5 2,14.5 -1.3,15 -5.3,18 -9.5,21 -11.1,18 -13.8,17 -18,17.4 -15,11 -6,3.1 -9,2.9 -6,0.4 -6,-0.7 -9,-4.6 -5.7,-7.5 -2.1,-9 0.9,-9 3.9,-11.9 10.3,-24.1 3.3,-12 2,-15 2.4,-40.4 2.8,-16.6 2.7,-9 3.5,-7 6,-6.3 6,-3.1 9,-1.6M453.6,36l1.5,12 6.9,31.9 2.1,16.1 -0.1,18 -2.9,21 -6.1,15 -12.9,21 -16.1,18.1 -15,12.7 -18,10.1 -15,6.3 -18,3 -21,-0.2 -21,-3.2 -24,-6 -60,-20.2 -21,-6 -21,-2.9 -12,0.4 -9,1.6 -15,5.7 -15.1,10.6 -11.4,12 -26.9,36 -12.6,14.6 -18,15.9 -6,4 -6,2.1M1068,146.6l-6,-2.8 -6,-5.2 -21,-20.5 -9,-11.3 -12.5,-19.8 -13.2,-24 -6.5,-15 -2.8,-12M60,599.3l57,0.5 36,1.5 42,5.8 42,9.6 12,1.2 12,-0.8 12,-4 15,-7.7 45.1,-32.4 44.9,-25.7 30,-15.4 33,-14.3 42,-15.2 45,-11.4 12,-1.8 9,-0.1 9,1.5 9,3.5 10.1,6.9 8.1,9 5.8,10.1 4.5,13.9 2.6,18 1.6,39 3.7,54 5.5,42 6.1,24.2 8.8,20.8 6.2,10.8 6,8 23.3,26.2 15.7,24 9,11.9 41.2,45.1 27.8,27.3 19,14.7 32,20.3 20.4,9.7 19.8,6 19.8,3.8 36,4.2 24,5.3 21,8.9 15,9.2 16.2,13.6 11.8,15 6.8,12 19.3,39 2.9,9M206.4,1056l-2.5,-6 -4.5,-6 -21.4,-21 -7,-9.2 -9,-17.5 -15.3,-36.3 -7,-12 -7.7,-9.7 -6,-4.7 -6,-3.3 -15,-5.4 -18,-3.9 -27,-3.8M447.4,36l1.5,12 8.7,36 2,12 0.1,18 -2.7,18 -6.5,15 -8.9,15 -6.7,9 -17.9,18.5 -15,10.6 -18,8.5 -12,3.6 -18,1.9 -21,-0.7 -15,-2.6 -24,-6.1 -63,-24.8 -18,-6.1 -21,-3.9 -12,-0.4 -9,0.9 -9,2 -9,3.4 -9,4.7 -9,6.1 -15,13.3 -39,40.9 -12,10 -9,4.1M1068,136.6l-6,-2.7 -9,-7.9 -12.2,-12 -9.6,-12 -11.4,-18 -12.9,-24 -6.4,-15 -1.9,-9M60,604.3l72,0.9 30,3 18,3.4 18,4.9 36,14.2 12,3.9 12,2.3 9,-0.6 12,-4.4 15,-8.5 36,-31.7 26.1,-18.7 36.9,-21.8 33,-16.5 21,-8.3 24,-8.1 42,-10.3 12,-1.7 12,-0.3 9,1.4 9,3.1 9,5.8 8,8.7 5.1,9 4.2,12 3.1,18 5.6,66 5.1,39 5.4,27 6.8,21 8.2,18 8.5,14.4 26.5,33.6 18.5,27 9.3,12 21.8,24 46.9,46.6 25.1,19.4 28.9,18.2 19.4,8.8 19.6,5.5 24,3.4 36,2.4 18,3.1 15,5 18.8,10.6 17.2,15 11.6,15 8.1,15 16.2,36 1.7,6M234.9,1056l-1.1,-3 -4.6,-6 -37.2,-36.7 -9,-10.4 -9,-14.4 -19.7,-37.5 -6.7,-9 -9.1,-9 -12.5,-7.7 -15,-5.6 -21,-4.6 -30,-4.3M440.3,36l2.4,15 9.5,33 2.5,12 0.7,15 -2.8,18 -6.2,15 -15,24 -17.4,17.9 -15,10.3 -18,7.9 -15,3.6 -21,1.2 -18,-1.6 -24,-5.5 -15,-5 -57,-26 -18,-7.1 -21,-5.1 -12,-1.1 -9,0.3 -9,1.4 -9.6,2.8 -11.4,5.2 -9,5.4 -17,13.4 -40,36.6 -9,6.4 -6,2.1M1068,126.4l-6,-2.7 -7.6,-6.7 -10.4,-11.1 -9,-11.9 -10.2,-16 -11.5,-21 -5.4,-12 -2.1,-9M60,608.8l75,1 15,1.6 19,3.6 19.5,6 13.8,6 49.7,29.6 9,2.6 9,-0.8 15,-5.2 15,-10.7 6,-5.7 23.3,-27.8 13,-12 15.2,-12 32.5,-21.2 32.6,-17.8 15.4,-6.7 24,-8.1 42,-9.8 12,-1.9 12,-0.6 9,1.1 9,3 7.9,5 7.1,7.5 4.5,7.5 4.4,12 4.2,24 5.3,54 6.1,39 4.6,21 8.2,24 10,21 11,18 42.8,60 12.9,16.3 20.9,22.7 48.1,46.2 30,22.8 27,16.4 18,7.4 18,4.5 24,2.3 39,1 15,2 15,4.5 15,8.1 15.9,13.8 7.8,9 6,9 9,18 11.2,30 1.3,6M273.9,1056l-4.7,-6 -32.2,-27.3 -33,-31.2 -12,-14.6 -24.2,-34.9 -8.3,-9 -10.7,-9 -15.3,-9 -19.5,-7.1 -21,-4.8 -33,-5M432.2,36l3.1,15 10.2,30 4,15 1,15 -2.4,15 -2.9,9 -4.3,9 -8.3,15 -6.5,9 -18.1,17.7 -15,8.8 -15,6 -15,3.1 -24,0.7 -18,-2.7 -18,-4.5 -15,-5.6 -21,-10 -39,-20.7 -18,-7.7 -21,-5.9 -12,-1.6 -9,0 -9,1.1 -9,2.3 -18,8.3 -18,12.7 -39,32.9 -9,6 -6,2M1068,115.6l-6,-3 -6,-5.6 -18.2,-23 -8.8,-13.5 -10.9,-19.5 -3.9,-9 -1.2,-6M60,613.3l78,1.3 21,3.7 18.5,5.7 17.5,8.6 12,9.4 20.7,21 18.3,23.2 6,5.5 12,5.3 6,1.2 6,-0.2 12,-4.3 6,-4.3 6,-6.2 17.2,-26.2 8.2,-18 6.6,-12 12,-15 23.8,-21 30.8,-21 36.4,-20 33,-10.7 48,-8.1 12,0.1 9.8,2.7 5.3,3 6.4,6 5.5,8.8 3.4,9.2 5.5,27 4.7,48 6.8,39 4.4,18 9,24 12,24 23.2,36.6 30.9,44.4 19.4,24 15.7,16.6 51,47.3 30,22.8 27,16.6 21,7.7 18,3.7 27,0.8 33,-1 15,1.2 15,3.9 12.6,6.4 7.9,6 8.8,9 7.2,9 7.4,12 6.5,15 8.5,33M353.4,1056l-4,-3 -6.5,-3 -30.9,-12 -19.5,-9 -13.5,-8 -18,-14.5 -36,-32.7 -36.6,-37.8 -11,-9 -15.4,-10.1 -21,-10.3 -24,-8.1 -24,-5.4 -33,-5.3M414.9,36l3.4,12 14.1,30 5.4,15 2.6,15 -1.4,12 -3.1,12 -3.6,9 -7.3,15 -6.3,9 -16.7,16.2 -9,5.4 -12,5.1 -15,4.2 -24,1.2 -15,-1.8 -22.9,-6.3 -10.1,-4.2 -20,-10.8 -46,-30.5 -18,-10.5 -27,-11.9 -12,-3.3 -9,-1.2 -9,0.2 -9,1.9 -9,3.2 -9,4.6 -18,12.5 -34.4,29 -7.6,4.8 -6,1.9M1068,90.4l-3,-1.3 -6,-5.2 -12.1,-14.9 -13.4,-21 -3,-6 -1.6,-6M60,625.3l45,-0.4 30.1,2.1 10.9,3 13,5.9 10.6,9.1 5.4,9 11,33 13.9,33 5.3,15 3,15 4.8,42 10.2,36 1.5,12 -0.7,9 -1.5,6 -2.6,6 -4.1,6 -5.8,5.3 -6,3.6 -6,2.3 -9,2 -15,0.5 -21,-2.3 -93,-15.2M532.6,1056l3.9,-24 13.7,-54 3.1,-18 0.1,-9 -1.4,-9 -3,-7.8 -4.7,-7.2 -10,-9 -10.9,-6 -13.4,-4.6 -21,-4.4 -21,-2.1 -51,3 -27,-5.7 -9,-0.2 -6,1.9 -1.1,-2.9 -1.7,-18 -12.7,-24 -2.8,-9 -1.9,-12 0.2,-15 2.6,-15 4.5,-15 16.9,-48 3.3,-12 2,-12 1,-15 -1.1,-15 -9.5,-39 0.1,-9 2.8,-9 6,-9 6.2,-6 24.2,-15.5 22.9,-20.5 7.1,-5.2 9,-4.8 12,-4.6 12,-3 9,-1.2 18,-0.5 12,1.7 9,4.8 6,7.5 3.8,8.3 2.7,9 3,21 0.4,15 -2.4,42 0.9,18 3.6,16.1 5.3,13.9 7.4,12 23.3,23.4 12,14.4 12,18.9 13.3,24.3 17.7,27 23,30.7 9,10.4 21.7,18.9 68.3,52.6 24,16.7 15,7.6 21,6.4 15,2.1 12,-1 57,-9.5 15,0.8 8.6,2.3 6.4,3 8.1,6 7.8,9 6,9 5.8,12 4,15 0.8,27M406.2,36l2.7,9 17.5,33 5,12 3.6,15 -1,15 -3,12 -6,15 -4.5,9 -6.5,8.8 -8.7,9.2 -7.4,6 -7.9,4.4 -15,6 -15,3 -24,0 -15,-3.1 -21,-7 -26.7,-15.3 -51.3,-38.6 -30,-20.2 -21,-12 -9,-3.1 -6,-1 -9,0.1 -6,1.3 -9,3.4 -12,6.5 -12,8.9 -36.8,33.7 -5.2,3.9 -6,2.4M1068,77.2l-6,-3.5 -11.5,-13.7 -9.5,-15 -3.1,-9M60,635.9l42,-3.2 12,1 10.6,2.3 7.4,3.4 7,5.6 20.4,24 11.4,18 19.1,39 6,15 3,15 7.3,75 -2,12 -2.7,6 -3.5,4.8 -9,6.8 -12,3.6 -18,0.5 -21,-1.6 -78,-13.8M552.4,1056l2,-12 4.6,-15 30.4,-81 4.1,-9 6.5,-9.5 9,-7.5 9,-3.8 9,-1.2 30,5.7 21,5.5 15,5.5 26,14.3 37,26 18,11.3 18,8.5 36,13 6,0.3 6,-1.5 29,-15.6 14.2,-6 9.8,-3 16,-1.8 12,2.3 9,5.1 6.4,6.4 5.9,9 5.1,12 1.9,9 0.3,9 -1.4,9 -4.5,15M901.8,1056l-1.3,-3 -5,-6 -13.5,-10.3 -12,-5.5 -15,-2.7 -9,1.3 -6,4.1 -3,5.1 -1.6,5 -1.6,12M489,575.9l12,0.9 6,1.9 5.7,3.3 6.3,6.9 5.3,11.1 3.4,12 1.7,12 -2.1,60 6.8,66 5.9,15.3 6,7.8 6,4.6 20.7,11.3 3.4,3 4,6 4,12 10,21 3.4,12 0.5,6 -1,6 -3,4.1 -3,1.8 -9,1.2 -27,-1.4 -21,-4.5 -15,-1.2 -18,0.8 -36,4.6 -15,-0.3 -12,-1.8 -15,-4.7 -11.1,-7.6 -9.9,-12 -7.3,-15 -3.1,-12 -1,-15 1.4,-24 5.2,-36 2.2,-27 -0.4,-22.3 -3.9,-34.7 1.4,-9 3,-6 5.5,-5.8 22.1,-15.2 28.9,-24.2 15,-8.2 9,-2.6 9,-1.1M90.4,36l-3.2,3 -10.6,6 -9.3,15 -7.3,6.2M397.5,36l3.3,9 21.3,36 5.9,15 2,9 0.3,6 -4,21 -5.7,15 -4.7,9 -9.6,12 -9.8,9 -9.5,5.2 -15,5.9 -9,2 -15,0.7 -18,-1.6 -20.6,-6.2 -13.1,-6 -20.3,-12.8 -28.3,-23.2 -31.7,-30 -13.7,-15 -19.3,-24.6 -12,-12.5 -9,-7.1 -21.2,-12.8 -3.2,-3M60,647.2l36,-7.5 9,0 9,1.5 9,3.5 6,4.2 11.2,11.1 10,12 8.7,12 5.3,9 19.4,39 5.8,15 3.1,18 2.9,57 -1.3,12 -2.2,6 -2.9,4.5 -4.5,4.5 -4.5,2.7 -12,3.2 -18,0.7 -18,-2.4 -30,-6.2 -33,-9.5 -9,-1.6M574.6,1056l1.7,-9 9.6,-27 9.4,-39 5.2,-15 4.2,-9 7.3,-9 6,-3.8 9,-2.5 12,-0.7 12,1 15,4.1 11.3,4.9 8.9,6 13.6,12 17.2,22.5 15,15.4 9,6.9 24,14.2 8.6,7 6.4,9 3.1,12M477,593.8l9,-1.5 6,0 6,1.2 6,2.9 4.3,3.6 4.7,5.9 3.5,6.1 3.4,9 1.7,15 -1.5,48 1.6,33 -0.4,54 -1.6,12 -2.7,9 -5.6,9 -7.4,7.9 -9,5.9 -21,9.2 -9,2.5 -9,0.5 -15,-4.5 -12,-6.8 -10.1,-11.7 -5.8,-12 -3.7,-18 -1.4,-12 1.3,-60 -1.7,-54 1.2,-6 3.4,-6 13.7,-12 27.1,-19 15,-7.8 9,-3.4M903,992.1l9,-0.9 6,1.5 6,4 4.2,5.3 2.7,6 1.2,9 -2.1,7.8 -4,4.2 -5,1.8 -3,0.1 -9,-2.6 -9,-5.7 -8,-8.6 -2.5,-6 0.8,-6 4.8,-6 7.9,-3.9M388.4,36l3.8,9 21.8,31.6 7.8,16.4 3.6,15 -0.5,9 -1.7,9 -4.6,15 -5.6,12 -8.8,12 -8.2,8.2 -9,5.5 -15,6.2 -9,2.2 -12,0.7 -21,-1.8 -12,-3.7 -15,-6.2 -22.1,-14.1 -14.5,-12 -12.6,-12 -18.8,-21 -14,-21 -8.8,-21 -10,-33 -1.1,-6M60,656.7l6,-1.6 18,-7.5 9,-2.1 9,-0.6 9,1.4 9,3.7 6,4.5 8.6,8.5 9.7,12 12.1,18 12.5,24 12.1,27 5,18 2.3,36 -1.4,24 -3,12 -3.8,6 -3.4,3 -5.7,3 -6,1.6 -18,0.7 -27,-5.1 -27,-7.6 -27,-12.2 -6,-1.4M630.7,1056l-9.7,-18.5 -9.8,-23.5 -3.6,-15 -0.2,-15 3.9,-15 3.3,-6 3.4,-4.1 9,-5.3 6,-1.5 9,-0.5 9,1.1 6,1.8 12,6.3 5.7,5.2 4.3,6 4.3,12 0.2,15 -3.5,15 -6,15 -11.6,21 -2.4,6M486,606l9,1.1 9,4.9 7.1,9 3.6,12 0.8,15 -1.6,39 0.4,30 -2.6,42 -1.7,8.3 -3,7.3 -5.8,8.4 -6.2,5.8 -9,5.6 -9,3.5 -9,1.8 -9,0 -12,-3.4 -10.6,-7.3 -7.4,-9.2 -6.4,-14.8 -2.3,-12 -1.1,-15 -2.5,-57 0.4,-33 1.9,-6 4.2,-6 8.8,-8.3 9,-6.3 12,-6.4 12,-4.8 12,-3.2 9,-1M364.5,36l1.1,3 4.5,6 25.9,25.7 8.5,10.3 5,9 4.5,10.7 1.5,7.3 0,6 -3,15 -4.5,13.7 -5.5,10.3 -8.8,12 -7.2,6 -12.4,6 -11.1,3.5 -9,0.9 -15,-0.7 -9,-1.8 -12,-4.7 -12,-6.1 -17,-12.1 -13,-12 -8.1,-9 -14.3,-21 -4.6,-9 -3.2,-9 -5.4,-24 -1.6,-36M60,678.8l6,-3.4 15,-13.7 6,-3.4 6,-2.1 9,-0.7 6,1.1 6,2.8 6,4.7 7.3,7.9 7.7,11.5 15,26 9,18 13.8,34.5 1.9,12 0.8,15 -1.9,18 -2.6,10.2 -3,6.9 -3,4 -4,2.9 -5,1.9 -6,0.7 -9,-0.8 -12,-2.7 -27,-9.7 -11.9,-7.4 -21.1,-17.2 -9,-4.5M483,638.9l6,-1.8 3,0.5 3,2 3,5.4 0.9,9 -0.9,10.2 -3,9.5 -3,3 -3,0.3 -3.8,-2 -2.3,-3 -1.9,-6 -1.8,-21 1,-3 2.8,-3.1M636,974.6l6,-0.8 3.1,1.2 2.2,3 0.3,3 -0.9,3 -1.7,3 -3,2.3 -3,0.8 -3,-0.8 -3,-2.6 -1.3,-5.7 1.3,-3.7 3,-2.7M344.6,36l1.3,3 6,6 17.1,12.5 27,22.1 8.9,13.4 3.8,9 1.3,6 -0.5,9 -5.7,21 -4.8,9.9 -9,14.1 -6,5.3 -6.4,3.7 -11.6,4.8 -9,1.7 -21,-1.2 -14.6,-5.3 -21.4,-12.7 -12.5,-11.3 -11.3,-12 -14.8,-24 -5.8,-15 -5.7,-27 -0.9,-33M60,697.1l6,-4.9 15.5,-20.2 8.5,-6.8 6,-2.2 9,0.3 6,2.8 6,5.1 7.2,9.8 22.8,40.7 16.4,37.3 3.1,12 1,12 -0.6,12 -1.9,9 -5.6,12 -6.4,5.2 -6,1.6 -6,0 -15,-3.3 -15,-6.1 -10.4,-6.4 -16.9,-15 -17.7,-18.3 -6,-4M331,36l3,6 8,7.6 24,15.6 25.6,18.8 6.8,9 4.8,12 0.2,9 -4.4,15.9 -4.4,11.1 -8.2,15 -5,6 -3.9,3 -8.5,4.5 -9,2.9 -9,0.8 -9,-0.6 -7.9,-1.6 -7.3,-3 -15.6,-9 -8.2,-5.8 -20.6,-21.2 -13.8,-24 -5.3,-15 -5.5,-27 -1,-30M96,676.9l3,-0.8 6,1.2 6,5.5 9.8,19.2 20.2,32.1 11.3,24.9 3.9,15 -0.2,15 -1.6,6 -3,6 -2.5,3 -4.9,3.1 -6,1 -9,-1.1 -12,-5 -9,-6 -10.8,-10 -10.1,-12 -6.1,-9 -6,-12 -2.8,-9 -1.4,-9 0.3,-9 2.4,-12 4.3,-12 6.2,-12.3 6,-8.4 6,-4.4M324,36l3,7.2 9,8.5 50.4,35.3 5.2,6 4.2,9 0.9,6 -1.5,9 -6.6,18 -6.2,12 -4.4,7.1 -4.3,4.9 -7.7,5.2 -6,2.3 -6,1.2 -9,-0.1 -9,-2.2 -6,-2.7 -21,-13.3 -12,-11.1 -9,-9.9 -12.1,-20.4 -5.5,-15 -5.5,-27 -1,-30M108,734l3,0.4 6,3.4 6,6.1 6,8.9 3,6.2 2.4,9 -0.4,6 -2,3.6 -3,1.5 -3,0 -6,-2.4 -6.4,-5.7 -6.3,-9 -3.7,-9 -1.4,-9 1.1,-6 1.7,-2.8 3,-1.2M312.8,36l2.9,9 5.3,6 46,33 10.6,9 4,6 1.3,6 -0.6,6 -7.3,19.5 -6,10 -5.4,6.5 -3.6,3.3 -6,3.1 -6,0.3 -6,-1.8 -21,-11.2 -21,-17.4 -9.6,-12.3 -7.4,-15 -3.7,-18 -1.1,-18 1.3,-24M300.1,36l12.6,15 43.5,30 13.6,12 4.5,6 1.1,3 0.3,6 -4.9,15 -7.8,12.3 -9,7.1 -6,1 -6,-1.2 -12,-4.9 -9,-5.2 -18,-14.7 -6,-7.1 -5.2,-8.3 -2.7,-6 -2.2,-9 -1.4,-21 2.9,-18 2.6,-5.5 5.4,-6.5M300,58l3,-0.9 6,1.1 18,7.9 21.5,14.9 13.1,12 4.4,6.3 1.5,8.7 -1.4,6 -2.7,6 -6.4,8 -3,2.1 -6,2.2 -6,-0.1 -9,-2.5 -15,-8.6 -8.8,-7.1 -5.6,-6 -7.3,-12 -1.8,-6 -1.2,-9 0.2,-9 1.3,-6 2.2,-5 3,-3M309,70.6l6,-0.9 9,2.3 14.9,9 10.5,9 6.6,9 1.5,6 -1.1,6 -4.2,6 -7.2,3.7 -9,-0.3 -12,-5.3 -12,-9.8 -6.4,-9.3 -2.7,-9 0.5,-9 2.6,-5.1 3,-2.3" fill="none" stroke="#fff" stroke-opacity="0.36" stroke-width="0.75" stroke-linejoin="round"/>
<path d="M60.0,157.0 C61.5,155.8 65.0,153.5 69.0,150.0 C73.0,146.5 79.5,140.2 84.0,136.0 C88.5,131.8 90.7,129.8 96.0,125.0 C101.3,120.2 108.8,112.0 116.0,107.0 C123.2,102.0 132.3,97.3 139.0,95.0 C145.7,92.7 150.3,92.5 156.0,93.0 C161.7,93.5 166.3,94.8 173.0,98.0 C179.7,101.2 187.7,106.7 196.0,112.0 C204.3,117.3 214.2,123.7 223.0,130.0 C231.8,136.3 240.2,143.3 249.0,150.0 C257.8,156.7 267.0,164.2 276.0,170.0 C285.0,175.8 293.5,181.2 303.0,185.0 C312.5,188.8 324.2,191.7 333.0,193.0 C341.8,194.3 348.8,193.5 356.0,193.0 C363.2,192.5 368.8,192.2 376.0,190.0 C383.2,187.8 391.8,185.0 399.0,180.0 C406.2,175.0 413.7,167.8 419.0,160.0 C424.3,152.2 428.2,141.8 431.0,133.0 C433.8,124.2 436.3,115.3 436.0,107.0 C435.7,98.7 432.3,90.8 429.0,83.0 C425.7,75.2 419.8,67.2 416.0,60.0 C412.2,52.8 407.7,43.3 406.0,40.0 M250.0,40.0 C250.0,45.0 248.7,59.2 250.0,70.0 C251.3,80.8 253.8,94.2 258.0,105.0 C262.2,115.8 268.0,125.8 275.0,135.0 C282.0,144.2 290.8,153.0 300.0,160.0 C309.2,167.0 320.0,173.7 330.0,177.0 C340.0,180.3 350.3,181.5 360.0,180.0 C369.7,178.5 380.5,174.7 388.0,168.0 C395.5,161.3 401.0,150.0 405.0,140.0 C409.0,130.0 412.8,117.7 412.0,108.0 C411.2,98.3 406.2,89.7 400.0,82.0 C393.8,74.3 384.2,69.0 375.0,62.0 C365.8,55.0 350.0,43.7 345.0,40.0 M316.0,40.0 C319.8,43.8 331.2,56.3 339.0,63.0 C346.8,69.7 356.0,75.0 363.0,80.0 C370.0,85.0 377.5,88.5 381.0,93.0 C384.5,97.5 384.8,100.8 384.0,107.0 C383.2,113.2 378.7,124.0 376.0,130.0 C373.3,136.0 370.7,139.3 368.0,143.0 C365.3,146.7 361.3,150.5 360.0,152.0 M278.0,40.0 C278.0,45.5 277.2,63.0 278.0,73.0 C278.8,83.0 280.0,92.2 283.0,100.0 C286.0,107.8 290.0,113.3 296.0,120.0 C302.0,126.7 311.2,134.5 319.0,140.0 C326.8,145.5 337.3,150.0 343.0,153.0 C348.7,156.0 351.3,157.2 353.0,158.0 M60.0,356.0 C64.7,354.8 80.8,351.2 88.0,349.0 C95.2,346.8 97.2,345.0 103.0,343.0 C108.8,341.0 114.2,339.7 123.0,337.0 C131.8,334.3 148.5,332.0 156.0,327.0 C163.5,322.0 165.5,312.7 168.0,307.0 C170.5,301.3 171.8,299.2 171.0,293.0 C170.2,286.8 165.8,277.7 163.0,270.0 C160.2,262.3 155.2,253.7 154.0,247.0 C152.8,240.3 154.0,234.2 156.0,230.0 C158.0,225.8 160.5,224.5 166.0,222.0 C171.5,219.5 180.7,216.7 189.0,215.0 C197.3,213.3 207.0,212.3 216.0,212.0 C225.0,211.7 234.2,211.7 243.0,213.0 C251.8,214.3 260.2,217.7 269.0,220.0 C277.8,222.3 287.0,224.8 296.0,227.0 C305.0,229.2 314.2,231.0 323.0,233.0 C331.8,235.0 342.3,238.2 349.0,239.0 C355.7,239.8 357.3,239.5 363.0,238.0 C368.7,236.5 376.3,233.0 383.0,230.0 C389.7,227.0 396.3,223.8 403.0,220.0 C409.7,216.2 416.3,212.5 423.0,207.0 C429.7,201.5 437.5,193.7 443.0,187.0 C448.5,180.3 452.2,174.8 456.0,167.0 C459.8,159.2 463.8,150.0 466.0,140.0 C468.2,130.0 469.0,118.2 469.0,107.0 C469.0,95.8 467.7,84.2 466.0,73.0 C464.3,61.8 460.2,45.5 459.0,40.0 M60.0,417.0 C68.2,417.0 95.8,416.8 109.0,417.0 C122.2,417.2 129.5,417.5 139.0,418.0 C148.5,418.5 156.5,420.8 166.0,420.0 C175.5,419.2 186.5,416.0 196.0,413.0 C205.5,410.0 216.0,406.7 223.0,402.0 C230.0,397.3 234.5,389.2 238.0,385.0 C241.5,380.8 241.0,383.0 244.0,377.0 C247.0,371.0 252.5,357.5 256.0,349.0 C259.5,340.5 261.5,333.3 265.0,326.0 C268.5,318.7 272.8,310.8 277.0,305.0 C281.2,299.2 285.0,295.0 290.0,291.0 C295.0,287.0 300.7,283.3 307.0,281.0 C313.3,278.7 319.2,278.8 328.0,277.0 C336.8,275.2 349.2,272.8 360.0,270.0 C370.8,267.2 382.8,263.5 393.0,260.0 C403.2,256.5 413.3,253.2 421.0,249.0 C428.7,244.8 433.7,240.0 439.0,235.0 C444.3,230.0 448.7,224.8 453.0,219.0 C457.3,213.2 461.2,207.3 465.0,200.0 C468.8,192.7 472.8,185.0 476.0,175.0 C479.2,165.0 482.2,152.5 484.0,140.0 C485.8,127.5 487.0,111.7 487.0,100.0 C487.0,88.3 485.5,80.0 484.0,70.0 C482.5,60.0 479.0,45.0 478.0,40.0 M549.0,40.0 C549.7,43.8 553.0,54.7 553.0,63.0 C553.0,71.3 551.3,77.2 549.0,90.0 C546.7,102.8 543.3,125.0 539.0,140.0 C534.7,155.0 528.0,170.0 523.0,180.0 C518.0,190.0 513.2,193.5 509.0,200.0 C504.8,206.5 503.3,212.0 498.0,219.0 C492.7,226.0 484.8,235.5 477.0,242.0 C469.2,248.5 459.2,253.5 451.0,258.0 C442.8,262.5 435.3,265.3 428.0,269.0 C420.7,272.7 414.8,276.0 407.0,280.0 C399.2,284.0 388.8,288.8 381.0,293.0 C373.2,297.2 365.3,301.5 360.0,305.0 C354.7,308.5 351.3,309.8 349.0,314.0 C346.7,318.2 346.5,323.8 346.0,330.0 C345.5,336.2 345.2,344.0 346.0,351.0 C346.8,358.0 348.2,365.8 351.0,372.0 C353.8,378.2 358.3,383.3 363.0,388.0 C367.7,392.7 372.5,397.0 379.0,400.0 C385.5,403.0 393.5,404.8 402.0,406.0 C410.5,407.2 420.7,407.7 430.0,407.0 C439.3,406.3 448.7,404.0 458.0,402.0 C467.3,400.0 476.7,397.7 486.0,395.0 C495.3,392.3 506.2,388.7 514.0,386.0 C521.8,383.3 526.0,382.0 533.0,379.0 C540.0,376.0 545.2,372.5 556.0,368.0 C566.8,363.5 582.7,355.5 598.0,352.0 C613.3,348.5 631.3,348.5 648.0,347.0 C664.7,345.5 681.3,344.2 698.0,343.0 C714.7,341.8 734.2,341.3 748.0,340.0 C761.8,338.7 769.8,338.3 781.0,335.0 C792.2,331.7 805.0,326.3 815.0,320.0 C825.0,313.7 832.7,305.3 841.0,297.0 C849.3,288.7 857.2,279.0 865.0,270.0 C872.8,261.0 879.7,251.3 888.0,243.0 C896.3,234.7 905.0,227.7 915.0,220.0 C925.0,212.3 939.2,204.2 948.0,197.0 C956.8,189.8 965.2,182.0 968.0,177.0 C970.8,172.0 967.8,170.7 965.0,167.0 C962.2,163.3 956.7,158.2 951.0,155.0 C945.3,151.8 938.2,150.0 931.0,148.0 C923.8,146.0 917.3,144.8 908.0,143.0 C898.7,141.2 886.2,139.7 875.0,137.0 C863.8,134.3 851.0,130.7 841.0,127.0 C831.0,123.3 822.7,119.5 815.0,115.0 C807.3,110.5 801.2,105.8 795.0,100.0 C788.8,94.2 783.2,86.3 778.0,80.0 C772.8,73.7 769.0,68.7 764.0,62.0 C759.0,55.3 750.7,43.7 748.0,40.0 M484.8,323.0 C484.4,320.5 485.5,316.7 488.0,312.0 C490.5,307.3 496.1,298.7 500.0,295.0 C503.9,291.3 508.1,290.1 511.6,289.6 C515.1,289.1 519.0,290.3 521.0,292.0 C523.0,293.7 524.1,296.7 523.7,300.0 C523.3,303.3 521.8,307.9 518.6,311.7 C515.4,315.5 509.3,320.5 504.6,323.0 C499.9,325.5 493.9,326.8 490.6,326.8 C487.3,326.8 485.2,325.5 484.8,323.0 Z M697.0,40.0 C698.3,43.7 702.7,55.8 705.0,62.0 C707.3,68.2 708.3,70.7 711.0,77.0 C713.7,83.3 717.0,92.3 721.0,100.0 C725.0,107.7 729.3,115.8 735.0,123.0 C740.7,130.2 747.3,136.3 755.0,143.0 C762.7,149.7 773.8,156.8 781.0,163.0 C788.2,169.2 794.0,173.8 798.0,180.0 C802.0,186.2 804.5,193.3 805.0,200.0 C805.5,206.7 803.3,213.3 801.0,220.0 C798.7,226.7 795.3,233.8 791.0,240.0 C786.7,246.2 782.2,252.3 775.0,257.0 C767.8,261.7 757.0,265.5 748.0,268.0 C739.0,270.5 730.5,272.0 721.0,272.0 C711.5,272.0 701.0,270.0 691.0,268.0 C681.0,266.0 668.7,263.5 661.0,260.0 C653.3,256.5 649.2,252.5 645.0,247.0 C640.8,241.5 637.5,236.5 636.0,227.0 C634.5,217.5 636.8,201.7 636.0,190.0 C635.2,178.3 633.5,168.2 631.0,157.0 C628.5,145.8 623.2,134.2 621.0,123.0 C618.8,111.8 618.8,103.8 618.0,90.0 C617.2,76.2 616.3,48.3 616.0,40.0 M818.0,40.0 C820.0,42.5 825.0,50.3 830.0,55.0 C835.0,59.7 840.5,64.3 848.0,68.0 C855.5,71.7 865.0,74.7 875.0,77.0 C885.0,79.3 897.0,80.3 908.0,82.0 C919.0,83.7 931.0,84.5 941.0,87.0 C951.0,89.5 959.7,92.0 968.0,97.0 C976.3,102.0 983.2,108.7 991.0,117.0 C998.8,125.3 1008.3,137.7 1015.0,147.0 C1021.7,156.3 1026.7,164.2 1031.0,173.0 C1035.3,181.8 1038.7,191.0 1041.0,200.0 C1043.3,209.0 1045.5,219.2 1045.0,227.0 C1044.5,234.8 1042.0,241.5 1038.0,247.0 C1034.0,252.5 1028.8,255.7 1021.0,260.0 C1013.2,264.3 1001.5,269.2 991.0,273.0 C980.5,276.8 968.0,280.2 958.0,283.0 C948.0,285.8 938.8,288.0 931.0,290.0 C923.2,292.0 917.0,292.8 911.0,295.0 C905.0,297.2 900.0,298.3 895.0,303.0 C890.0,307.7 885.5,314.0 881.0,323.0 C876.5,332.0 872.3,345.8 868.0,357.0 C863.7,368.2 858.3,378.7 855.0,390.0 C851.7,401.3 852.0,412.0 848.0,425.0 C844.0,438.0 835.2,456.3 831.0,468.0 C826.8,479.7 824.0,487.7 823.0,495.0 C822.0,502.3 822.0,505.8 825.0,512.0 C828.0,518.2 833.8,526.5 841.0,532.0 C848.2,537.5 858.0,541.7 868.0,545.0 C878.0,548.3 891.0,551.2 901.0,552.0 C911.0,552.8 920.2,551.7 928.0,550.0 C935.8,548.3 940.8,546.2 948.0,542.0 C955.2,537.8 963.2,531.7 971.0,525.0 C978.8,518.3 986.7,510.3 995.0,502.0 C1003.3,493.7 1013.0,483.2 1021.0,475.0 C1029.0,466.8 1035.5,460.5 1043.0,453.0 C1050.5,445.5 1062.2,433.8 1066.0,430.0 M982.0,36.0 C982.3,37.3 982.2,39.2 984.0,44.0 C985.8,48.8 989.5,58.0 993.0,65.0 C996.5,72.0 1001.2,79.5 1005.0,86.0 C1008.8,92.5 1012.2,98.2 1016.0,104.0 C1019.8,109.8 1023.2,115.5 1028.0,121.0 C1032.8,126.5 1040.0,132.0 1045.0,137.0 C1050.0,142.0 1054.5,147.5 1058.0,151.0 C1061.5,154.5 1064.7,156.8 1066.0,158.0 M1020.0,40.0 C1022.5,44.3 1030.3,58.7 1035.0,66.0 C1039.7,73.3 1042.8,77.3 1048.0,84.0 C1053.2,90.7 1063.0,102.3 1066.0,106.0 M901.0,500.0 C899.3,499.5 908.5,488.7 915.0,482.0 C921.5,475.3 931.7,467.0 940.0,460.0 C948.3,453.0 963.3,439.7 965.0,440.0 C966.7,440.3 956.7,454.5 950.0,462.0 C943.3,469.5 933.2,478.7 925.0,485.0 C916.8,491.3 902.7,500.5 901.0,500.0 Z M60.0,557.0 C67.7,556.2 92.8,554.5 106.0,552.0 C119.2,549.5 127.8,545.2 139.0,542.0 C150.2,538.8 164.2,535.0 173.0,533.0 C181.8,531.0 180.2,532.5 192.0,530.0 C203.8,527.5 225.8,522.2 244.0,518.0 C262.2,513.8 284.2,509.3 301.0,505.0 C317.8,500.7 333.0,496.0 345.0,492.0 C357.0,488.0 363.8,484.9 373.0,481.0 C382.2,477.1 387.7,473.8 400.0,468.5 C412.3,463.2 432.2,454.5 447.0,449.0 C461.8,443.5 475.0,440.6 489.0,435.6 C503.0,430.6 515.7,424.2 531.0,419.0 C546.3,413.8 565.7,407.8 581.0,404.5 C596.3,401.2 613.2,400.1 623.0,399.0 C632.8,397.9 633.7,397.3 640.0,398.0 C646.3,398.7 653.0,399.7 661.0,403.0 C669.0,406.3 680.2,412.2 688.0,418.0 C695.8,423.8 703.0,430.7 708.0,438.0 C713.0,445.3 716.7,452.5 718.0,462.0 C719.3,471.5 717.7,482.8 716.0,495.0 C714.3,507.2 711.0,522.2 708.0,535.0 C705.0,547.8 701.3,560.3 698.0,572.0 C694.7,583.7 690.8,594.0 688.0,605.0 C685.2,616.0 682.2,627.5 681.0,638.0 C679.8,648.5 679.3,657.3 681.0,668.0 C682.7,678.7 687.3,691.7 691.0,702.0 C694.7,712.3 698.0,719.8 703.0,730.0 C708.0,740.2 713.5,751.8 721.0,763.0 C728.5,774.2 739.0,786.3 748.0,797.0 C757.0,807.7 766.2,818.7 775.0,827.0 C783.8,835.3 791.0,841.0 801.0,847.0 C811.0,853.0 823.8,857.5 835.0,863.0 C846.2,868.5 857.0,875.0 868.0,880.0 C879.0,885.0 889.8,888.5 901.0,893.0 C912.2,897.5 923.8,902.0 935.0,907.0 C946.2,912.0 957.5,917.0 968.0,923.0 C978.5,929.0 989.2,936.3 998.0,943.0 C1006.8,949.7 1013.8,955.2 1021.0,963.0 C1028.2,970.8 1035.3,981.7 1041.0,990.0 C1046.7,998.3 1050.8,1006.3 1055.0,1013.0 C1059.2,1019.7 1064.2,1027.2 1066.0,1030.0 M60.0,592.0 C67.7,592.2 90.0,592.7 106.0,593.0 C122.0,593.3 139.3,593.7 156.0,594.0 C172.7,594.3 193.8,595.0 206.0,595.0 C218.2,595.0 220.7,595.7 229.0,594.0 C237.3,592.3 246.0,588.7 256.0,585.0 C266.0,581.3 277.8,576.7 289.0,572.0 C300.2,567.3 311.8,562.3 323.0,557.0 C334.2,551.7 345.0,545.7 356.0,540.0 C367.0,534.3 377.8,528.3 389.0,523.0 C400.2,517.7 411.8,513.0 423.0,508.0 C434.2,503.0 445.0,497.7 456.0,493.0 C467.0,488.3 477.8,484.2 489.0,480.0 C500.2,475.8 511.8,472.0 523.0,468.0 C534.2,464.0 546.3,459.5 556.0,456.0 C565.7,452.5 571.2,449.3 581.0,447.0 C590.8,444.7 606.7,442.3 615.0,442.0 C623.3,441.7 626.8,441.7 631.0,445.0 C635.2,448.3 638.3,455.3 640.0,462.0 C641.7,468.7 641.8,474.5 641.0,485.0 C640.2,495.5 637.5,510.5 635.0,525.0 C632.5,539.5 628.5,556.5 626.0,572.0 C623.5,587.5 620.8,603.0 620.0,618.0 C619.2,633.0 619.2,648.0 621.0,662.0 C622.8,676.0 627.0,690.3 631.0,702.0 C635.0,713.7 639.3,721.8 645.0,732.0 C650.7,742.2 657.8,752.2 665.0,763.0 C672.2,773.8 679.7,785.8 688.0,797.0 C696.3,808.2 707.2,820.7 715.0,830.0 C722.8,839.3 726.7,844.7 735.0,853.0 C743.3,861.3 754.2,871.7 765.0,880.0 C775.8,888.3 788.7,896.3 800.0,903.0 C811.3,909.7 822.0,915.5 833.0,920.0 C844.0,924.5 854.8,927.2 866.0,930.0 C877.2,932.8 888.8,934.2 900.0,937.0 C911.2,939.8 922.0,942.8 933.0,947.0 C944.0,951.2 956.8,956.8 966.0,962.0 C975.2,967.2 981.5,971.2 988.0,978.0 C994.5,984.8 1000.0,994.3 1005.0,1003.0 C1010.0,1011.7 1014.3,1021.2 1018.0,1030.0 C1021.7,1038.8 1025.5,1051.7 1027.0,1056.0 M60.0,617.0 C68.2,617.0 95.8,616.8 109.0,617.0 C122.2,617.2 129.5,616.7 139.0,618.0 C148.5,619.3 157.7,621.7 166.0,625.0 C174.3,628.3 182.8,632.5 189.0,638.0 C195.2,643.5 199.0,650.2 203.0,658.0 C207.0,665.8 210.3,676.0 213.0,685.0 C215.7,694.0 217.3,702.8 219.0,712.0 C220.7,721.2 221.8,732.5 223.0,740.0 C224.2,747.5 224.3,750.3 226.0,757.0 C227.7,763.7 228.0,774.2 233.0,780.0 C238.0,785.8 246.7,790.8 256.0,792.0 C265.3,793.2 280.7,789.0 289.0,787.0 C297.3,785.0 299.3,785.0 306.0,780.0 C312.7,775.0 321.8,764.2 329.0,757.0 C336.2,749.8 344.2,742.8 349.0,737.0 C353.8,731.2 358.5,730.7 358.0,722.0 C357.5,713.3 348.5,696.7 346.0,685.0 C343.5,673.3 342.5,661.5 343.0,652.0 C343.5,642.5 344.0,636.3 349.0,628.0 C354.0,619.7 363.5,610.3 373.0,602.0 C382.5,593.7 395.0,585.3 406.0,578.0 C417.0,570.7 427.8,563.0 439.0,558.0 C450.2,553.0 459.0,550.5 473.0,548.0 C487.0,545.5 512.5,543.0 523.0,543.0 C533.5,543.0 532.2,544.3 536.0,548.0 C539.8,551.7 543.2,557.7 546.0,565.0 C548.8,572.3 551.3,579.5 553.0,592.0 C554.7,604.5 554.0,623.7 556.0,640.0 C558.0,656.3 561.3,677.0 565.0,690.0 C568.7,703.0 573.8,709.7 578.0,718.0 C582.2,726.3 585.5,732.5 590.0,740.0 C594.5,747.5 599.2,753.5 605.0,763.0 C610.8,772.5 617.8,785.8 625.0,797.0 C632.2,808.2 639.7,819.0 648.0,830.0 C656.3,841.0 665.5,853.0 675.0,863.0 C684.5,873.0 695.0,881.0 705.0,890.0 C715.0,899.0 725.0,908.7 735.0,917.0 C745.0,925.3 755.0,932.8 765.0,940.0 C775.0,947.2 784.0,955.0 795.0,960.0 C806.0,965.0 818.8,968.7 831.0,970.0 C843.2,971.3 856.8,968.8 868.0,968.0 C879.2,967.2 889.2,965.2 898.0,965.0 C906.8,964.8 913.8,965.0 921.0,967.0 C928.2,969.0 934.8,972.0 941.0,977.0 C947.2,982.0 953.2,989.8 958.0,997.0 C962.8,1004.2 967.0,1010.2 970.0,1020.0 C973.0,1029.8 975.0,1050.0 976.0,1056.0 M426.0,642.0 C428.5,632.5 432.8,631.7 439.0,628.0 C445.2,624.3 454.7,621.7 463.0,620.0 C471.3,618.3 481.8,617.2 489.0,618.0 C496.2,618.8 502.3,620.5 506.0,625.0 C509.7,629.5 510.5,635.0 511.0,645.0 C511.5,655.0 509.5,672.8 509.0,685.0 C508.5,697.2 508.5,708.8 508.0,718.0 C507.5,727.2 506.8,733.0 506.0,740.0 C505.2,747.0 505.8,754.5 503.0,760.0 C500.2,765.5 495.2,770.2 489.0,773.0 C482.8,775.8 473.7,778.0 466.0,777.0 C458.3,776.0 448.5,771.5 443.0,767.0 C437.5,762.5 435.5,758.2 433.0,750.0 C430.5,741.8 429.5,728.8 428.0,718.0 C426.5,707.2 424.3,697.7 424.0,685.0 C423.7,672.3 423.5,651.5 426.0,642.0 Z M60.0,670.0 C61.5,668.7 65.2,665.0 69.0,662.0 C72.8,659.0 78.0,654.3 83.0,652.0 C88.0,649.7 93.5,648.0 99.0,648.0 C104.5,648.0 110.3,648.7 116.0,652.0 C121.7,655.3 127.5,661.3 133.0,668.0 C138.5,674.7 144.0,683.7 149.0,692.0 C154.0,700.3 159.0,709.7 163.0,718.0 C167.0,726.3 170.0,734.5 173.0,742.0 C176.0,749.5 179.3,753.8 181.0,763.0 C182.7,772.2 183.3,787.0 183.0,797.0 C182.7,807.0 181.3,815.8 179.0,823.0 C176.7,830.2 174.0,836.7 169.0,840.0 C164.0,843.3 156.7,843.5 149.0,843.0 C141.3,842.5 132.5,839.7 123.0,837.0 C113.5,834.3 101.0,831.5 92.0,827.0 C83.0,822.5 74.3,813.7 69.0,810.0 C63.7,806.3 61.5,805.8 60.0,805.0 M626.0,970.0 C630.2,967.8 642.3,964.2 648.0,965.0 C653.7,965.8 659.5,970.8 660.0,975.0 C660.5,979.2 655.0,986.2 651.0,990.0 C647.0,993.8 640.3,998.0 636.0,998.0 C631.7,998.0 627.2,993.3 625.0,990.0 C622.8,986.7 622.8,981.3 623.0,978.0 C623.2,974.7 621.8,972.2 626.0,970.0 Z M1066.0,545.0 C1061.7,548.8 1047.5,561.3 1040.0,568.0 C1032.5,574.7 1030.8,580.0 1021.0,585.0 C1011.2,590.0 997.0,593.0 981.0,598.0 C965.0,603.0 947.2,610.0 925.0,615.0 C902.8,620.0 872.0,624.2 848.0,628.0 C824.0,631.8 794.0,635.7 781.0,638.0 C768.0,640.3 771.7,638.7 770.0,642.0 C768.3,645.3 769.2,650.8 771.0,658.0 C772.8,665.2 777.0,675.0 781.0,685.0 C785.0,695.0 790.5,705.0 795.0,718.0 C799.5,731.0 802.5,751.0 808.0,763.0 C813.5,775.0 820.2,781.0 828.0,790.0 C835.8,799.0 845.0,808.7 855.0,817.0 C865.0,825.3 877.0,832.8 888.0,840.0 C899.0,847.2 909.8,853.3 921.0,860.0 C932.2,866.7 943.8,873.3 955.0,880.0 C966.2,886.7 977.0,893.8 988.0,900.0 C999.0,906.2 1011.5,912.0 1021.0,917.0 C1030.5,922.0 1037.5,925.8 1045.0,930.0 C1052.5,934.2 1062.5,940.0 1066.0,942.0 M1066.0,607.0 C1060.5,611.7 1041.5,625.8 1033.0,635.0 C1024.5,644.2 1020.8,652.5 1015.0,662.0 C1009.2,671.5 1003.7,682.0 998.0,692.0 C992.3,702.0 986.0,712.3 981.0,722.0 C976.0,731.7 971.3,741.5 968.0,750.0 C964.7,758.5 962.2,764.2 961.0,773.0 C959.8,781.8 959.3,793.5 961.0,803.0 C962.7,812.5 966.0,822.2 971.0,830.0 C976.0,837.8 982.7,844.5 991.0,850.0 C999.3,855.5 1008.5,858.2 1021.0,863.0 C1033.5,867.8 1058.5,876.3 1066.0,879.0 M60.0,876.0 C68.2,877.5 95.8,882.2 109.0,885.0 C122.2,887.8 128.3,890.0 139.0,893.0 C149.7,896.0 161.8,899.8 173.0,903.0 C184.2,906.2 196.7,908.8 206.0,912.0 C215.3,915.2 221.8,917.8 229.0,922.0 C236.2,926.2 242.3,931.2 249.0,937.0 C255.7,942.8 262.3,950.3 269.0,957.0 C275.7,963.7 282.3,971.0 289.0,977.0 C295.7,983.0 300.7,989.2 309.0,993.0 C317.3,996.8 329.0,999.0 339.0,1000.0 C349.0,1001.0 360.7,1000.2 369.0,999.0 C377.3,997.8 382.3,996.2 389.0,993.0 C395.7,989.8 401.7,984.3 409.0,980.0 C416.3,975.7 425.2,970.3 433.0,967.0 C440.8,963.7 448.3,961.5 456.0,960.0 C463.7,958.5 472.3,956.8 479.0,958.0 C485.7,959.2 491.5,962.8 496.0,967.0 C500.5,971.2 503.5,976.3 506.0,983.0 C508.5,989.7 510.2,999.2 511.0,1007.0 C511.8,1014.8 511.3,1021.8 511.0,1030.0 C510.7,1038.2 509.3,1051.7 509.0,1056.0 M60.0,926.0 C66.5,927.2 88.5,930.2 99.0,933.0 C109.5,935.8 116.8,938.0 123.0,943.0 C129.2,948.0 132.2,955.2 136.0,963.0 C139.8,970.8 142.7,981.0 146.0,990.0 C149.3,999.0 152.7,1009.2 156.0,1017.0 C159.3,1024.8 162.2,1030.5 166.0,1037.0 C169.8,1043.5 176.8,1052.8 179.0,1056.0 M60.0,972.0 C66.0,973.0 88.7,973.8 96.0,978.0 C103.3,982.2 101.2,990.0 104.0,997.0 C106.8,1004.0 110.5,1012.8 113.0,1020.0 C115.5,1027.2 117.0,1034.0 119.0,1040.0 C121.0,1046.0 124.0,1053.3 125.0,1056.0" fill="none" stroke="#5f5a45" stroke-opacity="0.55" stroke-width="0.6"/>
</g>
<path d="M951.0,158.0 L918.0,243.0 L910.0,273.0 L908.0,312.0 L915.0,347.0 L928.0,388.0 L930.0,393.0 L911.0,558.0 L913.0,618.0 L926.0,678.0 L928.0,722.0 L935.0,750.0 L950.0,783.0 L970.0,809.0 L645.0,857.0 L571.0,880.0 L469.0,898.0 L433.0,898.0 L329.0,848.0 L189.0,753.0 L103.0,688.0 L141.0,678.0 L274.0,567.0 L263.0,558.0 L226.0,493.0 L224.0,474.0 L241.0,458.0 L296.0,437.0 L311.0,438.0 L318.0,431.0 L354.0,431.0 L388.0,415.0 L399.0,395.0 L412.0,387.0 L430.0,339.0 L471.0,345.0 L489.0,325.0 L509.0,297.0 L521.0,291.0 L572.0,232.0 L583.0,219.5 L581.5,213.5 L606.0,207.0 L638.0,238.0 L668.0,255.0 L700.0,290.0 Z" fill="none" stroke="#d30707" stroke-width="4" stroke-linejoin="miter"/>
<g font-size="11.3" font-weight="bold" fill="#111" text-anchor="middle">
<text transform="translate(86,135) rotate(-40)" y="4">960</text>
<text transform="translate(362.7,154.3) rotate(-55)" y="4">970</text>
<text transform="translate(705.3,61.7) rotate(72)" y="4">945</text>
<text transform="translate(762.3,60.7) rotate(55)" y="4">950</text>
<text transform="translate(988.7,57.3) rotate(52)" y="4">960</text>
<text transform="translate(1030.7,58.3) rotate(52)" y="4">965</text>
<text transform="translate(514.3,316.7) rotate(-52)" y="4">945</text>
<text transform="translate(88.3,352.3) rotate(-8)" y="4">960</text>
<text transform="translate(88.7,417.3) rotate(0)" y="4">955</text>
<text transform="translate(86.7,555.7) rotate(0)" y="4">955</text>
<text transform="translate(87,592.3) rotate(0)" y="4">960</text>
<text transform="translate(89.3,619.3) rotate(0)" y="4">965</text>
<text transform="translate(930.7,474.3) rotate(-55)" y="4">960</text>
<text transform="translate(1043.7,452.7) rotate(-50)" y="4">955</text>
<text transform="translate(1040.7,566.7) rotate(-50)" y="4">950</text>
<text transform="translate(1033,635) rotate(-50)" y="4">945</text>
<text transform="translate(466.7,780.7) rotate(0)" y="4">970</text>
<text transform="translate(92,826.7) rotate(18)" y="4">970</text>
<text transform="translate(90.3,879.3) rotate(8)" y="4">965</text>
<text transform="translate(84.3,929) rotate(8)" y="4">960</text>
<text transform="translate(81.3,973.3) rotate(8)" y="4">955</text>
<text transform="translate(638.7,962.7) rotate(10)" y="4">970</text>
</g>
<rect x="68.5" y="44.2" width="991.5" height="1004.3" fill="none" stroke="#5e5347" stroke-width="1.4"/>
<g fill="#000">
<rect x="0" y="0" width="27" height="11.5"/><rect x="0" y="0" width="14.2" height="24.5"/>
<rect x="1521.5" y="0" width="28" height="11.5"/><rect x="1534.5" y="0" width="15" height="24.5"/>
<rect x="0" y="1066" width="14.2" height="30"/><rect x="0" y="1078.5" width="27" height="18"/>
<rect x="1534.5" y="1066" width="15" height="30"/><rect x="1521.5" y="1078.5" width="28" height="18"/>
</g>
<rect x="0" y="1092" width="1549" height="4" fill="#1e1e1e"/>
<g fill="none" stroke="#3c3c3c" stroke-width="1.1">
<rect x="39.5" y="11.6" width="1495.0" height="1066.9"/>
<rect x="53" y="24.6" width="1468.8" height="1041.2"/>
<path d="M123.4,11.6V24.6M123.4,1065.8V1078.5M253.6,11.6V24.6M253.6,1065.8V1078.5M383.7,11.6V24.6M383.7,1065.8V1078.5M513.9,11.6V24.6M513.9,1065.8V1078.5M644.0,11.6V24.6M644.0,1065.8V1078.5M774.1,11.6V24.6M774.1,1065.8V1078.5M904.3,11.6V24.6M904.3,1065.8V1078.5M1034.5,11.6V24.6M1034.5,1065.8V1078.5M1164.6,11.6V24.6M1164.6,1065.8V1078.5M1294.8,11.6V24.6M1294.8,1065.8V1078.5M1424.9,11.6V24.6M1424.9,1065.8V1078.5M39.5,154.4H53M1521.8,154.4H1534.5M39.5,284.6H53M1521.8,284.6H1534.5M39.5,414.8H53M1521.8,414.8H1534.5M39.5,545.0H53M1521.8,545.0H1534.5M39.5,675.2H53M1521.8,675.2H1534.5M39.5,805.4H53M1521.8,805.4H1534.5M39.5,935.6H53M1521.8,935.6H1534.5"/>
<path d="M774.3,0V11.6M774.3,1078.5V1092M0,545H39.5M1534.5,545H1549" stroke-width="0.9"/>
</g>
<rect x="1546.6" y="24.5" width="2.4" height="1041.5" fill="#d9d9d9"/>
<g font-size="10.2" fill="#222" text-anchor="middle">
<text x="83" y="22.3">1</text>
<text x="83" y="1077.2">1</text>
<text x="189" y="22.3">2</text>
<text x="189" y="1077.2">2</text>
<text x="323" y="22.3">3</text>
<text x="323" y="1077.2">3</text>
<text x="447" y="22.3">4</text>
<text x="447" y="1077.2">4</text>
<text x="574" y="22.3">5</text>
<text x="574" y="1077.2">5</text>
<text x="706" y="22.3">6</text>
<text x="706" y="1077.2">6</text>
<text x="837" y="22.3">7</text>
<text x="837" y="1077.2">7</text>
<text x="970" y="22.3">8</text>
<text x="970" y="1077.2">8</text>
<text x="1095" y="22.3">9</text>
<text x="1095" y="1077.2">9</text>
<text x="1235" y="22.3">10</text>
<text x="1235" y="1077.2">10</text>
<text x="1360" y="22.3">11</text>
<text x="1360" y="1077.2">11</text>
<text x="1477" y="22.3">12</text>
<text x="1477" y="1077.2">A2</text>
<text x="46" y="86">A</text>
<text x="1529.3" y="85">A</text>
<text x="46" y="222">B</text>
<text x="1529.3" y="221">B</text>
<text x="46" y="351">C</text>
<text x="1529.3" y="350">C</text>
<text x="46" y="474">D</text>
<text x="1529.3" y="473">D</text>
<text x="46" y="611">E</text>
<text x="1529.3" y="610">E</text>
<text x="46" y="743">F</text>
<text x="1529.3" y="742">F</text>
<text x="46" y="863">G</text>
<text x="1529.3" y="862">G</text>
<text x="46" y="1001">H</text>
<text x="1529.3" y="1000">H</text>
</g>
<g font-size="11" font-weight="bold" fill="#111">
<text x="69.7" y="38.8">641350</text><text x="69.7" y="1062.3">641350</text>
<text x="348.2" y="38.5" text-anchor="middle">641500</text><text x="348.2" y="1062.3" text-anchor="middle">641500</text>
<text x="608.4" y="38.5" text-anchor="middle">641650</text><text x="608.4" y="1062.3" text-anchor="middle">641650</text>
<text x="868.4" y="38.5" text-anchor="middle">641800</text><text x="868.4" y="1062.3" text-anchor="middle">641800</text>
<text transform="translate(63.6,127.5) rotate(-90)" text-anchor="middle">7184800</text>
<text transform="translate(1072,127.5) rotate(-90)" text-anchor="middle">7184800</text>
<text transform="translate(63.6,387.5) rotate(-90)" text-anchor="middle">7184650</text>
<text transform="translate(1072,387.5) rotate(-90)" text-anchor="middle">7184650</text>
<text transform="translate(63.6,647.5) rotate(-90)" text-anchor="middle">7184500</text>
<text transform="translate(1072,647.5) rotate(-90)" text-anchor="middle">7184500</text>
<text transform="translate(63.6,907.5) rotate(-90)" text-anchor="middle">7184350</text>
<text transform="translate(1072,907.5) rotate(-90)" text-anchor="middle">7184350</text>
</g>
<path d="M87.8,44.2v5M87.8,1048.5v-5M348.2,44.2v5M348.2,1048.5v-5M608.4,44.2v5M608.4,1048.5v-5M868.4,44.2v5M868.4,1048.5v-5M68.5,127.5h5M1060,127.5h-5M68.5,387.5h5M1060,387.5h-5M68.5,647.5h5M1060,647.5h-5M68.5,907.5h5M1060,907.5h-5" stroke="#111" stroke-width="1.2" fill="none"/>
<text x="1291.4" y="57.2" font-size="18.3" font-weight="bold" text-anchor="middle" fill="#111" >LOCALIZAÇÃO</text>
<clipPath id="bzc"><rect x="1084.5" y="65.6" width="182.6" height="164"/></clipPath>
<radialGradient id="ocg" cx="0.85" cy="0.2" r="0.7"><stop offset="0" stop-color="#15506f"/><stop offset="1" stop-color="#0b3656"/></radialGradient>
<g clip-path="url(#bzc)">
<rect x="1084" y="65" width="184" height="165" fill="url(#ocg)"/>
<g transform="translate(1084,65) scale(0.15058)">
<path d="M440.0,-20.0 C446.7,-9.2 466.7,28.3 480.0,45.0 C493.3,61.7 505.0,70.0 520.0,80.0 C535.0,90.0 554.2,97.5 570.0,105.0 C585.8,112.5 602.5,119.2 615.0,125.0 C627.5,130.8 636.7,125.0 645.0,140.0 C653.3,155.0 655.8,197.5 665.0,215.0 C674.2,232.5 685.8,236.7 700.0,245.0 C714.2,253.3 733.3,258.3 750.0,265.0 C766.7,271.7 783.3,280.0 800.0,285.0 C816.7,290.0 833.3,291.7 850.0,295.0 C866.7,298.3 883.3,299.2 900.0,305.0 C916.7,310.8 933.3,321.7 950.0,330.0 C966.7,338.3 987.5,347.5 1000.0,355.0 C1012.5,362.5 1019.7,365.8 1025.0,375.0 C1030.3,384.2 1034.2,397.5 1032.0,410.0 C1029.8,422.5 1019.5,438.3 1012.0,450.0 C1004.5,461.7 997.0,470.0 987.0,480.0 C977.0,490.0 961.2,496.7 952.0,510.0 C942.8,523.3 937.8,543.3 932.0,560.0 C926.2,576.7 922.0,593.3 917.0,610.0 C912.0,626.7 907.8,645.0 902.0,660.0 C896.2,675.0 888.7,685.8 882.0,700.0 C875.3,714.2 872.0,732.2 862.0,745.0 C852.0,757.8 837.0,769.2 822.0,777.0 C807.0,784.8 787.0,786.2 772.0,792.0 C757.0,797.8 744.5,805.3 732.0,812.0 C719.5,818.7 705.3,823.7 697.0,832.0 C688.7,840.3 686.2,851.2 682.0,862.0 C677.8,872.8 677.0,886.2 672.0,897.0 C667.0,907.8 659.5,914.5 652.0,927.0 C644.5,939.5 634.5,958.7 627.0,972.0 C619.5,985.3 613.2,997.3 607.0,1007.0 C600.8,1016.7 597.8,1021.2 590.0,1030.0 C582.2,1038.8 569.2,1045.0 560.0,1060.0 C550.8,1075.0 539.2,1110.0 535.0,1120.0" fill="none" stroke="#1c6f92" stroke-width="100" stroke-opacity="0.45" stroke-linejoin="round"/>
<path d="M440.0,-20.0 C446.7,-9.2 466.7,28.3 480.0,45.0 C493.3,61.7 505.0,70.0 520.0,80.0 C535.0,90.0 554.2,97.5 570.0,105.0 C585.8,112.5 602.5,119.2 615.0,125.0 C627.5,130.8 636.7,125.0 645.0,140.0 C653.3,155.0 655.8,197.5 665.0,215.0 C674.2,232.5 685.8,236.7 700.0,245.0 C714.2,253.3 733.3,258.3 750.0,265.0 C766.7,271.7 783.3,280.0 800.0,285.0 C816.7,290.0 833.3,291.7 850.0,295.0 C866.7,298.3 883.3,299.2 900.0,305.0 C916.7,310.8 933.3,321.7 950.0,330.0 C966.7,338.3 987.5,347.5 1000.0,355.0 C1012.5,362.5 1019.7,365.8 1025.0,375.0 C1030.3,384.2 1034.2,397.5 1032.0,410.0 C1029.8,422.5 1019.5,438.3 1012.0,450.0 C1004.5,461.7 997.0,470.0 987.0,480.0 C977.0,490.0 961.2,496.7 952.0,510.0 C942.8,523.3 937.8,543.3 932.0,560.0 C926.2,576.7 922.0,593.3 917.0,610.0 C912.0,626.7 907.8,645.0 902.0,660.0 C896.2,675.0 888.7,685.8 882.0,700.0 C875.3,714.2 872.0,732.2 862.0,745.0 C852.0,757.8 837.0,769.2 822.0,777.0 C807.0,784.8 787.0,786.2 772.0,792.0 C757.0,797.8 744.5,805.3 732.0,812.0 C719.5,818.7 705.3,823.7 697.0,832.0 C688.7,840.3 686.2,851.2 682.0,862.0 C677.8,872.8 677.0,886.2 672.0,897.0 C667.0,907.8 659.5,914.5 652.0,927.0 C644.5,939.5 634.5,958.7 627.0,972.0 C619.5,985.3 613.2,997.3 607.0,1007.0 C600.8,1016.7 597.8,1021.2 590.0,1030.0 C582.2,1038.8 569.2,1045.0 560.0,1060.0 C550.8,1075.0 539.2,1110.0 535.0,1120.0" fill="none" stroke="#2f97b5" stroke-width="36" stroke-opacity="0.55" stroke-linejoin="round"/>
<path d="M250.0,1120.0 C247.5,1096.7 239.2,1020.0 235.0,980.0 C230.8,940.0 229.2,911.7 225.0,880.0 C220.8,848.3 215.8,816.7 210.0,790.0 C204.2,763.3 200.0,740.0 190.0,720.0 C180.0,700.0 165.0,683.3 150.0,670.0 C135.0,656.7 118.3,650.0 100.0,640.0 C81.7,630.0 60.0,620.8 40.0,610.0 C20.0,599.2 -10.0,580.8 -20.0,575.0" fill="none" stroke="#1c6f92" stroke-width="30" stroke-opacity="0.4" stroke-linejoin="round"/>
<path d="M440.0,-20.0 C523.3,-9.2 466.7,28.3 480.0,45.0 C493.3,61.7 505.0,70.0 520.0,80.0 C535.0,90.0 554.2,97.5 570.0,105.0 C585.8,112.5 602.5,119.2 615.0,125.0 C627.5,130.8 636.7,125.0 645.0,140.0 C653.3,155.0 655.8,197.5 665.0,215.0 C674.2,232.5 685.8,236.7 700.0,245.0 C714.2,253.3 733.3,258.3 750.0,265.0 C766.7,271.7 783.3,280.0 800.0,285.0 C816.7,290.0 833.3,291.7 850.0,295.0 C866.7,298.3 883.3,299.2 900.0,305.0 C916.7,310.8 933.3,321.7 950.0,330.0 C966.7,338.3 987.5,347.5 1000.0,355.0 C1012.5,362.5 1019.7,365.8 1025.0,375.0 C1030.3,384.2 1034.2,397.5 1032.0,410.0 C1029.8,422.5 1019.5,438.3 1012.0,450.0 C1004.5,461.7 997.0,470.0 987.0,480.0 C977.0,490.0 961.2,496.7 952.0,510.0 C942.8,523.3 937.8,543.3 932.0,560.0 C926.2,576.7 922.0,593.3 917.0,610.0 C912.0,626.7 907.8,645.0 902.0,660.0 C896.2,675.0 888.7,685.8 882.0,700.0 C875.3,714.2 872.0,732.2 862.0,745.0 C852.0,757.8 837.0,769.2 822.0,777.0 C807.0,784.8 787.0,786.2 772.0,792.0 C757.0,797.8 744.5,805.3 732.0,812.0 C719.5,818.7 705.3,823.7 697.0,832.0 C688.7,840.3 686.2,851.2 682.0,862.0 C677.8,872.8 677.0,886.2 672.0,897.0 C667.0,907.8 659.5,914.5 652.0,927.0 C644.5,939.5 634.5,958.7 627.0,972.0 C619.5,985.3 613.2,997.3 607.0,1007.0 C600.8,1016.7 597.8,1021.2 590.0,1030.0 C582.2,1038.8 569.2,1045.0 560.0,1060.0 C550.8,1075.0 586.7,1110.0 535.0,1120.0 C483.3,1130.0 300.0,1143.3 250.0,1120.0 C200.0,1096.7 239.2,1020.0 235.0,980.0 C230.8,940.0 229.2,911.7 225.0,880.0 C220.8,848.3 215.8,816.7 210.0,790.0 C204.2,763.3 200.0,740.0 190.0,720.0 C180.0,700.0 165.0,683.3 150.0,670.0 C135.0,656.7 118.3,650.0 100.0,640.0 C81.7,630.0 60.0,620.8 40.0,610.0 C20.0,599.2 -10.0,680.0 -20.0,575.0 C-30.0,470.0 -96.7,79.2 -20.0,-20.0 C56.7,-119.2 356.7,-30.8 440.0,-20.0 Z" fill="#3e6231"/>
<path d="M-20,-20 L440,-20 L520,80 L640,135 L700,250 L740,300 L690,400 L660,470 L470,450 L400,540 L300,510 L170,505 L60,430 L-20,330 Z" fill="#2b562b"/>
<path d="M-20,-20 L150,-20 L90,70 L30,160 L-20,200 Z" fill="#4e6f35"/>
<path d="M60,20 L120,-10 L70,90 L20,150 Z" fill="#25401f"/>
<path d="M750,270 L850,297 L1025,377 L1030,410 L950,510 L915,610 L860,745 L770,790 L650,690 L620,620 L660,470 L700,370 Z" fill="#5d6935"/>
<path d="M430,460 L660,470 L640,580 L590,655 L490,660 L440,620 L415,545 Z" fill="#4f6632"/>
<path d="M480,700 L590,655 L650,690 L610,750 L585,800 L545,800 L490,755 Z" fill="#4b6631"/>
<path d="M-20,480 L60,535 L130,575 L200,615 L280,645 L345,690 L350,780 L335,880 L345,980 L355,1120 L250,1120 L235,980 L225,880 L210,790 L190,720 L150,670 L100,640 L40,610 L-20,575 Z" fill="#8a8455"/>
<path d="M150,640 L250,665 L310,720 L312,800 L300,900 L312,1000 L320,1120 L255,1120 L240,980 L230,880 L216,790 L196,725 Z" fill="#c2aa84"/>
<path d="M235,705 L285,730 L292,800 L284,900 L294,1000 L266,1000 L256,900 L246,800 Z" fill="#e6dac2"/>
<path d="M350,780 L480,700 L545,800 L570,870 L505,960 L590,1030 L535,1120 L355,1120 L345,980 L335,880 Z" fill="#466b34"/>
<path d="M570,840 L585,800 L605,770 L640,770 L675,795 L700,815 L690,835 L680,860 L650,865 L610,870 L575,865 Z" fill="#f6e7d6"/>
<path d="M415.0,105.0 L425.0,140.0 L440.0,200.0 L450.0,210.0 L470.0,185.0 L520.0,175.0 L575.0,180.0 L600.0,160.0 L630.0,130.0 L650.0,170.0 L665.0,215.0 L700.0,245.0 L750.0,265.0 L800.0,285.0 L850.0,295.0 L900.0,305.0 L950.0,330.0 L1000.0,355.0 L1025.0,375.0 L1030.0,410.0 L1010.0,450.0 L985.0,480.0 L950.0,510.0 L930.0,560.0 L915.0,610.0 L900.0,660.0 L880.0,700.0 L860.0,745.0 L820.0,775.0 L770.0,790.0 L730.0,810.0 L695.0,830.0 L680.0,860.0 L670.0,895.0 L650.0,925.0 L625.0,970.0 L605.0,1005.0 L590.0,1025.0 L505.0,960.0 L535.0,905.0 L565.0,885.0 L570.0,870.0 L565.0,840.0 L585.0,800.0 L545.0,800.0 L540.0,770.0 L490.0,755.0 L480.0,700.0 L490.0,660.0 L470.0,640.0 L440.0,620.0 L425.0,570.0 L415.0,545.0 L370.0,530.0 L320.0,520.0 L300.0,500.0 L295.0,470.0 L250.0,490.0 L220.0,505.0 L170.0,505.0 L160.0,480.0 L110.0,465.0 L80.0,425.0 L100.0,380.0 L130.0,350.0 L180.0,335.0 L185.0,260.0 L175.0,200.0 L200.0,185.0 L240.0,195.0 L270.0,210.0 L300.0,190.0 L330.0,175.0 L310.0,130.0 L350.0,125.0 L390.0,120.0 Z" stroke="#fdfdf8" stroke-width="10" fill="none" stroke-linejoin="round" stroke-linecap="round"/>
<path d="M330,175L350,195L375,255L395,262L412,245L445,215M450,210L475,240L510,285L490,340L465,410L470,440M80,425L150,440L250,465L295,470L320,450L350,430L385,450L470,440L540,455L660,470M575,180L590,210L615,250L640,235L665,215M385,450L390,480L430,500L425,540L415,545M750,265L740,300L720,340L700,370L680,410L660,470L655,520L650,540L640,580L620,620L590,655M700,370L720,400L730,440L745,480L750,530L745,545L700,550L650,540M850,295L835,340L820,380L780,410L760,440L750,480L790,490L850,460L890,440L940,470L960,500M880,300L885,350L890,400L880,440M890,400L930,395L960,380L1000,370M930,395L940,420L1028,412M940,440L1010,450M955,472L990,480M490,660L520,645L560,650L590,655L620,680L650,690M745,545L755,590L735,610L720,650L700,670L650,690M755,590L790,575L830,590L880,620L897,640M650,690L680,700L720,720L740,760L760,775L810,760L850,740M880,640L870,690L860,745M650,690L630,720L610,750L585,800M610,750L650,760L680,790L700,815L695,830M575,865L610,870L650,865L680,860M565,885L600,890L640,895L665,900M702,598L720,598L720,615L702,615L702,598" stroke="#fdfdf8" stroke-width="10" fill="none" stroke-linejoin="round" stroke-linecap="round"/>
<circle cx="672" cy="840" r="18" fill="#e3001b"/>
<circle cx="1090" cy="328" r="6" fill="#cfeefa"/>
</g></g>
<clipPath id="prc"><rect x="1267.2" y="65.6" width="241.6" height="164"/></clipPath>
<g clip-path="url(#prc)">
<rect x="1267" y="65" width="242" height="165" fill="#e1e1e2"/>
<g transform="translate(1260,60) scale(0.16784)">
<path d="M30,385 L80,380 L120,420 L135,450 L120,530 L110,600 L85,690 L95,750 L130,760 L215,745 L250,830 L265,880 L255,950 L245,1020 L30,1020 Z" fill="#fff" stroke="#c4c4c4" stroke-width="2"/>
<path d="M1490,530 L1440,560 L1400,600 L1340,660 L1290,720 L1250,780 L1230,840 L1225,900 L1210,960 L1215,1020 L1490,1020 Z" fill="#72d7f6"/>
<path d="M380,80 L450,35 M240,1020 L265,880 M1100,545 L1150,520 L1240,500 M700,955 L760,930 L900,900 L1000,880 L1050,865 M1215,860 L1100,830" stroke="#c2c2c2" stroke-width="2.5" fill="none"/>
<path d="M255.0,180.0 L268.4,167.6 L286.0,161.4 L298.1,147.2 L312.3,136.0 L330.0,130.0 L346.4,120.7 L364.3,115.6 L381.4,108.1 L400.0,105.0 L417.6,104.3 L435.4,105.5 L452.8,103.4 L470.0,98.2 L487.8,99.7 L505.3,98.1 L522.6,95.0 L540.0,92.0 L556.1,98.0 L573.5,96.8 L589.6,103.4 L606.6,104.2 L622.9,109.3 L640.0,110.0 L656.2,115.7 L674.2,112.4 L689.3,123.3 L707.6,118.8 L723.5,126.0 L740.0,130.0 L754.6,137.5 L768.7,146.3 L786.8,146.0 L799.3,158.2 L815.6,161.9 L830.0,170.0 L848.5,169.3 L865.4,175.9 L882.2,182.6 L900.0,185.0 L915.6,178.4 L933.0,183.4 L948.1,173.0 L965.0,175.0 L978.6,186.6 L989.6,200.5 L1000.0,215.0 L1016.6,227.1 L1023.5,247.8 L1040.0,260.0 L1037.4,276.6 L1040.0,292.5 L1049.0,307.6 L1044.7,324.4 L1050.0,340.0 L1058.5,355.3 L1065.9,371.2 L1069.3,388.8 L1081.8,402.3 L1085.0,420.0 L1096.4,438.4 L1094.2,461.4 L1105.0,480.0 L1105.2,496.4 L1099.6,512.3 L1102.0,528.8 L1100.0,545.0 L1117.5,540.9 L1135.0,544.7 L1152.5,541.7 L1170.0,540.8 L1187.5,540.2 L1205.0,544.0 L1222.5,542.6 L1240.0,545.0 L1243.3,563.2 L1238.7,582.1 L1245.0,600.0 L1262.7,606.6 L1281.3,608.7 L1300.0,610.0 L1312.2,625.3 L1317.9,644.6 L1330.0,660.0 L1318.5,671.3 L1309.8,684.8 L1302.0,699.1 L1290.0,710.0 L1282.3,724.3 L1270.6,735.5 L1261.7,748.9 L1250.0,760.0 L1236.7,774.7 L1230.3,793.5 L1220.0,810.0 L1202.6,811.1 L1185.1,811.8 L1168.4,817.4 L1152.0,824.8 L1134.6,826.1 L1116.4,823.0 L1100.0,830.0 L1085.9,845.4 L1068.3,855.6 L1050.0,865.0 L1030.6,851.5 L1010.0,840.0 L992.0,834.8 L973.6,833.5 L955.2,832.7 L936.8,831.3 L918.2,832.9 L900.0,830.0 L888.2,841.8 L871.3,844.8 L860.1,857.7 L842.5,859.4 L830.0,870.0 L812.8,877.6 L795.0,882.6 L774.9,877.1 L758.7,889.2 L740.0,890.0 L732.6,909.7 L730.8,931.4 L720.0,950.0 L690.0,960.0 L680.5,946.2 L662.0,943.8 L653.7,928.5 L640.0,920.0 L624.8,912.7 L607.5,914.0 L590.8,912.8 L574.9,908.5 L560.0,900.0 L542.9,900.3 L528.6,889.5 L512.1,887.7 L497.0,880.2 L480.0,880.0 L463.5,877.0 L446.8,875.7 L429.7,878.0 L413.1,876.1 L397.1,866.9 L380.0,870.0 L361.5,867.5 L344.1,874.6 L325.7,873.1 L307.8,875.8 L290.0,880.0 L278.3,868.9 L267.7,856.9 L261.9,840.9 L250.0,830.0 L247.3,811.2 L240.5,794.2 L227.7,779.5 L218.0,763.7 L215.0,745.0 L198.3,749.8 L181.7,755.2 L163.2,749.2 L147.3,758.9 L130.0,760.0 L113.5,751.7 L95.0,750.0 L89.2,730.4 L92.9,709.2 L85.0,690.0 L89.9,672.0 L98.2,654.9 L101.0,636.3 L107.6,618.7 L110.0,600.0 L108.3,581.9 L110.9,564.4 L116.1,547.3 L120.0,530.0 L126.7,514.7 L130.0,498.8 L131.1,482.4 L133.0,466.2 L135.0,450.0 L138.4,430.7 L153.9,416.7 L159.0,398.1 L165.0,380.0 L170.1,362.3 L176.3,344.7 L174.4,325.4 L182.2,308.3 L185.0,290.0 L197.3,279.2 L208.9,267.7 L215.0,251.3 L230.7,243.5 L240.0,230.0 L248.9,214.5 L251.2,197.0 Z" fill="#f6ecd6" stroke="#5c5c59" stroke-width="7.5" stroke-linejoin="round"/>
<path d="M1319,674L1307,673L1297,677L1286,682L1274,679L1265,689L1253,688M1253,688L1260,701L1272,710L1281,722M104,621L117,622L130,625M113,581L126,583L140,581L154,580M154,580L144,589L139,601L139,615L130,625M792,878L775,869M775,869L761,869L748,866L735,872L722,868L709,868M719,950L718,936L709,926M709,926L707,914L706,903L707,891L708,879L709,868M930,833L928,820L929,806L932,793L929,780M983,838L980,825L978,813L971,802L971,789M929,780L944,779L956,790L971,789M263,846L267,832L274,818M246,819L262,810M274,818L262,810M142,712L155,714L166,708M142,712L142,724L137,736L135,747L135,759M189,727L175,720L166,708M189,727L189,728M189,728L183,740L171,746L162,754M87,685L101,683L114,687L128,691M128,691L137,700L142,712M128,691L133,679L142,668L148,656L156,646M130,625L144,634L156,645M156,646L156,645M143,432L154,434L164,439L176,436L185,447L197,446M135,452L148,457L160,467L174,469M197,446L189,460L174,469M174,469L173,478M132,464L144,474L151,486L156,500M173,478L162,487L156,500M122,518L133,514L145,513L155,506M155,506L156,500M202,498L193,490L181,488L173,478M202,498L197,514M155,506L165,512L173,521M197,514L185,519L173,521M258,262L244,260L230,256L216,256M258,262L269,244M266,239L269,244M266,239L252,237L241,227M253,186L258,201L269,212M269,212L268,225L266,239M1212,811L1209,799L1210,787L1204,775L1204,763M1168,819L1173,808L1173,796L1176,785L1179,774M1204,763L1193,771L1179,774M1248,764L1236,761L1227,750L1215,748M1215,748L1204,763M1133,752L1144,758L1157,762L1167,771L1179,774M1133,824L1137,812L1130,800L1138,788L1129,776L1134,764L1133,752M1215,748L1212,738M1133,751L1140,731M1140,731L1153,726L1167,724M1133,752L1133,751M1212,738L1200,737L1190,731L1178,727L1167,724M1253,688L1237,679M1212,738L1217,726L1224,715L1231,704L1229,689L1237,679M1118,687L1126,697L1128,710L1135,720L1140,731M1118,687L1126,676L1135,667M1135,667L1146,672L1156,679L1166,685L1178,687M1167,724L1175,713L1177,700L1178,687M1243,579L1235,588L1222,592L1214,601L1208,612L1194,614L1188,625M1285,607L1279,617L1269,623L1261,632L1252,639L1246,649L1236,656L1232,667M1188,625L1199,630L1208,638L1215,648L1221,658L1230,666M1232,667L1230,666M1237,679L1232,667M1178,687L1188,682L1197,675L1208,672L1220,671L1230,666M816,873L817,861L822,850L821,838M821,838L830,826L839,814M894,833L887,820L874,811M839,814L851,816L862,812L874,811M929,780L916,766M916,766L916,766M916,766L911,769M874,811L881,802L887,793L895,785L903,777L911,769M1027,778L1025,790L1023,802L1017,813L1017,825L1011,836M1027,778L1040,782L1052,779L1065,779M1065,779L1073,788L1076,800L1080,812M1080,812L1071,822L1062,830L1050,836M1050,836L1037,836L1024,839L1011,836M1077,758L1088,754L1100,757L1111,753L1122,754L1133,751M1109,829L1099,823L1089,817L1080,812M1077,758L1073,769L1065,779M1056,861L1052,848L1050,836M1006,840L1011,836M1009,743L1004,733L997,723L996,711L986,704L983,693M1009,743L1005,762M1005,762L1005,762M1005,762L992,759L982,752L973,743L962,737L949,735M949,735L958,725L965,713L976,704L983,693M971,789L984,783L992,769L1005,762M1027,778L1017,769L1005,762M944,737L933,745L926,757L916,766M944,737L949,735M1118,687L1117,687M1077,758L1071,748L1072,736L1065,726L1064,714M1064,714L1074,708L1086,704L1098,702L1105,690L1117,687M1009,743L1016,733L1027,729L1038,725L1042,712L1053,708M1064,714L1053,708M189,728L193,739L200,748M273,767L261,773L248,771L235,773M273,767L282,775M282,775L278,788L267,795L262,806M262,806L251,796L244,784L234,774M234,774L235,773M252,728L250,740L247,752L242,763L235,773M276,735L264,734L252,728M276,735L278,751L273,767M227,775L234,774M262,810L262,806M156,646L168,651L177,661M166,708L178,696L188,685M188,685L182,673L177,661M188,685L207,691M177,661L189,659L199,652L211,648M211,648L213,661L214,674L219,686M219,686L207,691M189,727L207,716M207,691L204,704L207,716M216,748L222,728M252,728L247,722M247,722L234,724L222,728M207,716L222,728M244,671L254,664L267,665M244,671L231,685M231,685L240,697L247,710M247,710L256,699L270,696L281,688M281,688L270,679L267,665M219,686L231,685M247,722L247,710M197,446L199,444M162,387L172,394L184,399L191,411L203,416M199,444L198,431L204,418M203,416L204,418M223,481L226,470M223,481L212,488L202,498M199,444L207,454L218,459L225,468M226,470L225,468M223,481L227,492L234,502L240,513L243,524M230,531L215,530M197,514L207,521L215,530M230,531L242,526M243,524L242,526M288,526L294,542L291,558M314,563L303,559L291,558M317,509L309,518L299,523L288,526M332,516L317,509M314,563L333,559M332,516L337,529L331,543L334,556M334,556L333,559M731,144L724,153L718,162L712,171M731,144L718,144L704,144L691,147L678,149M712,171L701,167L690,166L679,161L669,158M678,149L669,158M715,183L712,171M715,183L725,193L738,195M736,140L736,154L737,168L734,182L738,195M736,140L731,144M742,131L741,134M693,121L689,137L678,149M741,134L736,140M666,159L656,154M656,154L650,141L655,126L651,112M669,158L666,159M507,95L508,110L517,122M517,122L526,128M539,125L526,128M539,125L544,113L552,103L564,96M539,125L551,124L562,132L574,131L585,137M590,101L588,113L585,125L585,137M707,538L715,547L713,562L723,571L726,583M762,574L750,577L738,581L726,583M768,566L764,554L763,541L758,530L761,517M768,566L762,574M707,538L716,528L726,519M726,519L737,516L749,516L761,517M955,291L950,279L950,267L951,255L952,242L946,231M955,291L957,291M957,291L967,280L982,277L991,265M946,231L957,235L969,234L979,237L989,245M989,245L991,265M1011,227L998,233L989,245M981,193L974,204L966,214L953,220L946,230M946,230L946,231M1043,287L1029,294M1029,294L1021,285L1012,277L1001,273L991,265M778,465L763,452M778,465L775,476L771,487L768,498L761,508M761,508L753,498L746,487L732,484L726,473M726,473L736,460L747,449M747,449L763,452M817,509L806,511L795,515L784,511L772,509L762,515M817,509L815,495L817,482M761,508L762,515M778,465L784,464M817,482L807,474L797,467L784,464M775,420L773,431L763,440L763,452M808,421L797,418L786,419L775,420M808,421L811,424M784,464L789,452L796,443L801,432L811,424M817,482L829,476L837,465M811,424L825,427M837,465L836,452L826,441L825,427M856,763L849,774L845,787L836,796M856,763L855,752L850,741L849,730L841,720M836,796L830,785L817,779L811,768L804,758M804,758L805,746L804,734M841,720L829,719L819,726L807,728M807,728L804,734M839,814L836,796M911,769L897,771L883,768L870,767L856,763M871,697L880,705L885,716L892,725L897,737L900,748L906,759L916,766M871,697L863,707L851,712L841,720M768,793L778,785L784,773L795,767L804,758M821,838L811,833L803,824L793,817L787,806L775,803L768,793M1084,418L1079,429L1074,440L1069,452M1104,476L1091,469L1083,457L1069,452M784,697L793,706L801,716L807,728M784,697L783,682M871,697L871,695M783,682L795,679L805,673L817,670L826,661L838,659M871,695L861,688L856,676L846,669L838,659M1053,707L1056,695L1051,683L1051,671L1057,658L1053,646L1054,634M1053,707L1040,706L1030,700L1021,691L1008,691L998,684M998,684L1007,676L1019,669L1027,659L1037,652L1048,645L1054,633M1054,634L1054,633M1053,708L1053,707M1117,687L1107,681L1101,670L1090,664L1079,659L1070,652L1062,643L1054,634M983,693L983,686M983,686L998,684M707,538L695,535M718,590L726,583M675,584L690,583L703,590L718,590M675,584L670,572L659,563L657,549M657,549L670,547L682,540L695,535M768,793L755,793L742,792M804,734L792,741L779,741L765,741L753,748M753,748L749,759L748,770L744,781L742,792M784,697L771,701L758,706L747,715L733,717M753,748L744,740L736,730L733,717M775,869L770,857L757,852L752,841L748,829L741,820L737,808L727,800M727,800L742,792M613,772L607,782L599,791L590,798L580,804L572,812M613,772L615,765M615,765L603,766L591,763L580,760L568,761M572,812L565,801L563,789L556,779M556,779L568,761M564,727L578,725L589,732L601,738L614,737M564,727L562,739L566,750L568,761M615,765L616,763M614,737L611,750L616,763M715,647L724,653M724,653L726,665L725,677L724,690L723,702L723,715M687,652L701,652L715,647M687,652L683,663L681,675L672,683L669,694M669,694L676,704L675,718L683,729M723,715L712,723L700,728L687,733M683,729L687,733M571,834L572,832M571,834L578,845L581,857L583,870L589,881L595,893L596,906M572,832L584,829L597,827L607,818L620,818L633,815M596,906L605,896L615,889L628,885L640,879M633,815L640,818M640,818L642,829L638,840L647,850L642,862L644,873M640,879L644,873M530,775L543,779L556,779M525,836L514,827M530,775L527,785L523,796L522,807L519,817L514,827M525,836L537,831L548,838L559,830L571,834M572,812L572,832M511,888L511,874L520,862L521,848L525,836M595,909L596,906M613,772L618,783L625,793L631,803L633,815M709,926L701,917L688,915L678,907L671,897L658,894L652,882L640,879M709,868L699,853M699,853L689,860L677,861L666,865L655,869L644,873M386,861L400,856L409,843L423,840M386,861L387,871M423,874L425,858L425,842M423,840L425,842M168,365L180,363L188,352L200,351M200,351L199,337L197,323M182,303L190,313L197,323M200,351L209,354M203,416L211,402L221,389M209,354L213,366L216,378L221,389M204,418L216,421L228,424L240,422M260,384L247,384L234,383L221,389M260,384L267,397M240,422L250,414L257,404L267,397M225,468L231,457L239,448L251,442M240,422L247,431L251,442M312,377L304,386L292,387L282,393L274,401M274,401L272,401M260,384L263,370L264,356M287,350L276,354L264,356M312,377L304,368L294,361L287,350M272,401L267,397M266,512L253,515L243,524M226,470L241,469L253,477M266,512L269,496M269,496L260,488L253,477M280,597L273,608L270,621L261,630M280,597L292,607L307,611M309,620L298,628L288,637L276,644M309,620L308,613M261,630L274,645M307,611L308,613M274,645L276,644M368,598L349,586M349,586L341,596L330,601L318,606L308,613M337,642L327,636L316,630L309,620M337,642L345,631L351,619L363,611L368,598M314,563L310,575L308,587L305,599L307,611M349,586L343,571L333,559M288,526L277,521L266,512M242,526L247,536L253,545M291,558L285,561M285,561L273,558L262,553L253,545M280,597L272,582M285,561L281,573L272,582M639,443L643,457L640,471M639,443L647,434L657,428L668,423M640,471L651,471L661,465L672,461L684,462L695,461M668,423L682,428L694,437M695,461L696,449L694,437M599,475L587,469L579,460M578,450L579,460M635,439L620,435L605,432M578,450L590,439L605,432M637,478L640,471M637,478L624,477L612,472L599,475M635,439L639,443M661,381L665,395L665,409L668,423M635,439L632,427L627,415L625,403L630,390L626,378M661,381L657,378M626,378L641,377L657,378M747,206L766,208M756,252L760,242L760,230L766,220L766,208M756,252L746,262M711,232L720,243L723,257M711,232L720,226L729,220L739,215L747,206M746,262L734,263L723,257M797,155L791,167L783,176L775,187M829,170L830,181M830,181L818,185L808,194L796,196L784,200L773,207M775,187L772,206M772,206L773,207M741,134L746,146L757,154L762,165L770,175L775,187M766,208L772,206M738,195L747,206M664,189L668,171M664,189L669,200L673,211L675,222M668,171L675,182L690,183L697,194M697,194L693,206L702,218L699,230M675,222L689,233M699,230L689,233M715,183L697,194M666,159L668,171M711,232L699,230M723,257L722,269L714,279M686,280L700,277L714,279M686,280L681,266M681,266L682,250L687,235M687,235L689,233M675,222L660,218L645,221M664,189L651,195L642,206M642,206L645,221M687,235L674,235L664,244L654,251L640,251M638,249L640,251M638,249L639,229M645,221L639,229M759,653L761,642L765,631L759,618L767,608L761,595L767,585M759,653L769,658M769,658L781,651L789,640L802,634L809,623M767,585L773,595L786,597L792,607L802,613L809,623M762,574L767,585M724,653L735,652L747,649L759,653M718,590L718,601L718,613L721,624L716,635L715,647M733,717L723,715M783,682L779,668L769,658M838,659L832,647L838,634L832,622M832,622L821,623L809,623M703,492L703,475M703,492L699,502L690,510M703,475L690,478L681,488L670,494L660,500L648,505M690,510L677,505L662,510L648,505M726,519L716,512L709,502L703,492M761,517L762,515M726,473L715,478L703,474M703,474L703,475M695,535L695,522L690,510M703,474L695,461M637,478L641,492L645,506M645,506L648,505M762,409L775,420M808,421L806,409L806,396L800,384M774,388L784,383L795,379M774,388L770,400L762,409M800,384L795,379M795,379L794,359M794,359L782,356L770,354L758,352M774,388L761,383L748,376L737,367M758,352L748,361L737,367M866,360L855,358L844,361M866,360L871,367M871,367L863,380L848,386L841,399M844,361L838,372L828,381M841,399L833,391L828,381M870,337L855,336L843,330L829,325M827,350L827,337L829,325M870,337L867,349L866,360M827,350L844,361M827,350L810,350L795,357M794,359L795,357M800,384L814,380L828,381M825,427L839,420M839,420L841,399M871,367L879,377L890,383M839,420L851,419L862,421M862,421L868,411L873,400L886,395L890,383M1134,594L1138,584L1146,575L1146,563L1157,556L1160,545M1134,594L1141,605L1143,617L1147,629M1185,623L1172,624L1160,630L1147,629M1185,623L1185,612L1189,601L1183,590L1186,579L1184,567L1184,556L1187,545M1104,545L1105,557L1106,568L1106,580M1106,580L1120,588L1134,594M1135,667L1142,656L1143,643L1145,631M1188,625L1185,623M1145,631L1147,629M952,453L968,460M952,453L952,442L956,430M956,430L973,427M973,427L981,435L988,444L997,451M997,451L982,453L968,460M902,390L897,384M902,390L902,403L905,416L910,429L909,443M862,421L866,433L876,440M890,383L897,384M876,440L892,439L909,443M945,412L956,430M952,453L941,457L929,456L919,462M945,412L938,422L925,425L920,437L910,443M919,462L910,443M945,412L946,404M902,390L914,390L924,397L934,403L946,404M910,443L909,443M894,557L894,545L899,534L896,522M894,557L882,562L868,562L857,572L843,573M896,522L884,525L872,528L858,525L846,529L833,530M843,573L831,558M831,558L833,544L833,530M950,550L952,541M899,517L910,520L919,528L929,535L943,533L952,541M910,570L894,557M910,570L919,563L931,563L941,558L950,550M899,517L896,522M768,566L781,568L793,560L806,562L818,556L831,558M845,606L832,622M845,606L844,595L845,584L843,573M817,509L826,515L832,525M832,525L833,530M944,737L938,726L933,716L925,706L920,695L919,683M871,695L884,689L895,679M919,683L906,685L895,679M983,686L979,674L968,668M919,683L932,682L944,679L956,674L968,668M845,606L858,605L868,609L879,614L890,616L900,622M895,679L892,667L901,657L902,645L902,634L900,622M910,570L914,583L911,597L916,611M916,611L900,622M968,460L965,474L967,487M914,484L915,473L919,462M914,484L927,487L938,492L948,501M948,501L957,493L967,487M914,484L900,496M899,517L900,496M952,541L959,532M948,501L949,512L959,521L959,532M1063,530L1052,532L1040,534L1028,531L1017,539L1005,538M1005,538L1004,552L1006,567M1067,535L1063,530M1067,535L1065,547L1059,557L1054,568L1051,579L1050,591M1006,567L1015,576L1029,577L1040,583L1050,591M1106,580L1099,590L1088,595L1079,602L1066,604L1057,612M1067,535L1079,534L1090,538L1100,544M1050,591L1051,603L1057,612M1145,631L1134,627L1123,624L1112,628L1100,630L1090,622L1078,625L1068,620L1057,621M1057,612L1057,621M1054,633L1054,626M1057,621L1054,626M704,822L691,823L678,820L667,813L654,811M704,822L716,812L725,800M725,800L719,791L712,782L706,773L696,766L689,758L686,746M654,811L654,799L657,788L656,776L660,765M660,765L671,754L686,746M699,853L701,838L704,822M640,818L654,811M727,800L725,800M687,733L686,746M616,763L631,763L645,763L660,765M620,726L632,731L645,731L658,724L670,728L683,729M620,726L614,737M474,879L474,875M425,842L430,843M474,875L461,869L451,860L438,855L430,843M274,818L291,819M291,819L296,831L298,843L298,855L295,867L297,879M386,861L373,857L365,843L352,838M352,838L347,840M328,876L336,865L338,851L347,840M376,815L375,802L375,788L368,776M368,776L380,771L394,772L407,770M407,770L411,773M376,815L388,817L400,817L412,821M411,773L413,785L415,797L411,809L412,821M423,840L420,826M376,815L370,825L361,831L352,838M412,821L420,826M482,787L495,782L504,770L516,763M516,763L513,752L517,740L512,729M472,785L474,773L474,762L472,750L475,739M482,787L472,785M475,739L488,737L499,731L512,729M530,775L516,763M559,719L547,721L536,724L525,729L512,728M559,719L564,727M512,729L512,728M444,774L448,760L447,745L446,731M411,773L427,777L444,774M410,735L416,730M407,770L406,758L407,746L410,735M446,731L442,726M416,730L429,725L442,726M368,598L383,597M334,556L344,552L355,548L366,544L377,544M383,597L384,597M384,597L380,584L379,570L382,556L377,544M211,648L218,639M156,645L164,636L175,628L181,617M181,617L194,615L205,621M205,621L214,628L218,639M244,671L241,658L228,652L225,639M218,639L225,639M267,665L274,645M261,630L247,624M225,639L234,628L247,624M215,530L208,539L201,549M173,521L175,535L173,550M201,549L187,552L173,550M181,617L180,601L177,585M154,580L162,573M177,585L162,573M119,537L129,545L142,550L151,560L162,567M173,550L162,567M162,567L162,573M337,359L326,368L315,378M337,359L340,370L351,377L355,388L359,399M315,378L321,393M321,393L331,400L342,407M359,399L342,407M299,411L308,399L321,393M274,401L285,409L299,411M312,377L315,378M313,437L325,436L334,428M334,428L342,407M299,411L307,424L313,437M370,398L381,406M370,398L359,399M334,428L341,437L352,441L355,454L366,459M366,459L369,459M369,459L370,445L371,431L374,418L381,406M195,279L206,284L218,285L228,293M197,323L213,323L226,315M226,315L228,293M209,354L221,351L233,346L244,341M226,315L234,329L244,341M264,356L250,342M244,341L250,342M251,442L258,441M272,401L273,415L273,428M273,428L258,441M253,477L264,471L271,460M258,441L263,452L271,460M337,642L338,644M383,597L383,609L384,622L385,634L382,647M338,644L356,651M382,647L369,651L356,651M276,644L287,649L298,652L306,661M338,644L334,651M306,661L322,659L334,651M281,688L295,696M306,661L305,673L298,684L295,696M287,350L294,336L307,327M307,327L325,333M337,359L340,349M340,349L333,341L325,333M269,212L281,204L289,192L303,187M269,244L280,250L292,243L303,245L314,248M303,187L307,197L317,204L322,214M314,248L321,236L322,222M322,214L322,222M325,333L331,321L340,312L350,304L357,293M299,305L300,317L307,327M299,305L310,295L313,280L323,269M323,269L334,277L346,284L357,293M322,222L336,223L349,219L363,224L377,221M377,221L369,232L364,244M314,248L320,257M320,257L331,251L342,249L353,246L364,244M657,549L653,547M645,506L644,508M653,547L654,533L647,521L644,508M559,719L561,714M561,714L571,707L582,701L589,690M620,726L617,714L616,702M589,690L601,700L616,702M669,694L657,693L646,693L636,686M636,686L629,697L616,702M528,217L523,219M528,217L537,224L548,227L558,233M523,219L514,238M514,238L518,251L527,262L534,273M558,233L555,245L555,258M555,258L543,274M534,273L543,274M534,203L527,193L522,182L515,172M534,203L528,217M515,172L503,174L493,179M493,179L501,190L508,203L515,215M515,215L523,219M605,432L608,420L609,407L604,394L606,381M626,378L612,374M606,381L612,374M578,450L565,442L561,426L549,417M549,417L547,411M606,381L596,387L584,387L575,394L567,402L555,403L547,411M593,267L580,263L568,259L555,258M593,267L589,281M554,289L543,274M554,289L574,295M574,295L589,281M625,286L638,280L647,268M625,286L622,305M622,305L625,315M625,315L637,316L650,315M647,268L647,268M647,268L648,282L658,292L662,304M650,315L655,312M662,304L655,312M681,266L670,268L658,266L647,268M640,251L647,268M678,297L662,304M686,280L678,297M658,375L656,363L657,350L653,339L654,326L650,315M658,375L668,364L674,350L681,337M681,337L675,326L666,319L655,312M531,150L520,159L515,172M531,150L543,155L552,163L559,175M534,203L543,196L550,187L559,180M559,180L559,175M531,150L532,138L526,128M585,137L589,146M559,175L568,165L581,157L589,146M622,107L622,119L616,130L611,142L612,154M589,146L600,153L612,154M699,433L700,422L702,411L704,400M699,433L711,432L723,428L735,427M704,400L719,397L733,395M735,427L741,411M741,411L733,395M661,381L674,385L686,380M694,437L699,433M686,380L692,392L704,400M747,449L740,439L735,427M762,409L741,411M737,367L736,367M736,367L733,381L733,395M681,337L682,337M678,297L688,310L702,316M682,337L691,326L702,316M686,380L697,376L706,368L713,359M657,378L658,375M682,337L691,347L705,348L713,359M736,367L719,357M713,359L719,357M714,279L716,292L726,302M702,316L718,316M726,302L718,316M719,357L724,346L718,334L721,322M718,316L721,322M758,352L757,331M721,322L733,326L746,325L757,331M949,336L936,343L923,352M949,336L961,343L974,348M974,348L975,357M923,352L921,360M921,360L932,369L944,376L958,380M958,380L965,367L975,357M897,384L903,373L915,370L921,360M946,404L958,393M958,380L958,393M973,427L972,414L979,403M958,393L969,396L979,403M1069,505L1062,495L1063,483L1056,474L1052,463M1069,505L1063,518M1063,518L1055,510L1044,506L1035,499L1023,496M1023,496L1032,486L1039,474L1042,461M1042,461L1052,463M1105,485L1094,494L1081,500L1069,505M1069,452L1052,463M1063,530L1063,518M1024,447L1033,438L1041,429L1050,421L1058,412L1063,400L1073,392M1024,447L1035,451L1042,461M845,467L856,464L865,458M845,467L851,481L861,494M865,458L875,466L885,474L894,484L900,496M861,494L874,492L887,493L900,496M837,465L845,467M876,440L865,458M832,525L840,513L848,501L861,494M900,496L900,496M1005,537L1006,523L1012,510L1017,497M1005,537L985,529M985,529L981,518L983,506L986,495M986,495L1001,486M1001,486L1017,497M1023,496L1017,497M1005,538L1005,537M967,487L986,495M959,532L972,530L985,529M1000,451L997,451M1000,451L998,463L997,474L1001,486M1024,447L1011,444M1000,451L1011,444M968,657L959,649L949,641L942,632L937,620L928,612M968,657L976,645L986,635L995,623M995,623L991,611L985,599L978,589M928,612L940,609L947,596L959,592L970,587M970,587L978,589M968,668L968,657M916,611L928,612M1054,626L1042,630L1030,625L1018,623L1007,626L995,623M1006,567L999,577L988,582L978,589M950,550L959,561L966,573L970,587M477,860L469,849L463,838M477,860L487,854L490,842L500,835L505,826M504,825L505,826M504,825L493,827L481,827L469,827M469,827L463,838M474,875L477,860M430,843L440,838L451,837L463,838M514,827L505,826M482,787L485,797L494,805L500,814L504,825M303,810L321,812M303,810L304,798L299,788L293,778M321,812L325,800L333,790M333,790L325,780L318,769M293,778L306,769M306,769L318,769M291,819L303,810M347,840L339,831L328,824L321,812M282,775L293,778M368,776L368,776M368,776L356,781L345,787L333,790M276,735L288,732L298,724M298,724L304,735L298,747L306,757L306,769M459,814L448,818L436,823L424,823M459,814L469,801L471,785M424,823L432,813L432,798L442,789L448,778M471,785L459,782L448,778M420,826L424,823M469,827L459,814M472,785L471,785M444,774L448,778M446,731L460,736L475,739M470,677L487,680M470,677L460,686L448,692M448,692L449,700M449,700L460,706L473,703L483,711L496,709L507,713M487,680L495,692L506,701M506,701L507,713M512,728L507,713M442,726L445,713L449,700M561,714L556,702L550,691L546,680L536,670L535,658M535,658L531,671L517,677L515,691L506,701M332,516L341,511M341,511L352,510L363,511M363,511L375,516L384,524M384,524L385,526M377,544L385,533M385,526L385,533M368,776L363,761M318,769L327,761L335,751M363,761L350,752L335,751M410,735L398,735L386,735L374,733M363,761L367,747L374,733M249,586L240,575M249,586L241,601M241,601L229,606L217,602M240,575L226,568M217,602L207,593L204,581M226,568L212,571M212,571L204,581M253,545L250,562L240,575M272,582L260,586L249,586M247,624L249,612L241,601M205,621L208,610L217,602M230,531L228,543L230,556L226,568M177,585L190,579L204,581M201,549L204,561L212,571M286,303L278,312L269,318L258,322M286,303L278,291L265,285L256,274M258,322L251,311L252,297L244,287M256,274L244,287M299,305L286,303M250,342L252,331L258,322M323,269L320,257M258,262L256,274M228,293L244,287M289,461L301,450M289,461L285,473L287,486M321,468L312,460L306,449M321,468L316,483L312,498M306,449L301,450M312,498L299,493L287,486M273,428L283,434L289,446L301,450M271,460L289,461M269,496L287,486M313,437L306,449M346,470L358,468L366,459M346,470L334,472L321,468M341,511L345,498L341,483L346,470M317,509L312,498M409,662L400,670L392,677L380,678L371,685M409,662L418,663M418,663L419,663M419,663L411,676L406,689L403,703M403,703L390,701L377,704L364,703M364,703L371,685M382,647L397,652L409,662M356,651L365,661L367,674L371,685M389,597L384,597M390,597L389,597M425,648L421,635M390,597L395,609L406,616L413,626L421,635M425,648L418,663M448,692L441,680L431,670L419,663M416,730L411,715L403,703M374,733L368,719L361,706M361,706L364,703M449,102L458,112L461,125L471,133L477,144M449,102L442,114L440,127L432,138M432,138L443,149M443,149L455,152L465,143L477,144M493,179L481,176M517,122L503,128L491,135L481,146M481,176L478,161L481,146M449,100L449,102M477,144L481,146M515,215L503,211L490,213L477,213L465,214M481,176L464,189M465,214L462,202L464,189M443,149L445,164L444,179M464,189L453,187L444,179M303,187L301,175L301,163L298,151M409,172L418,162L425,151L431,138M409,172L394,160M394,160L394,144L397,128M431,138L419,136L409,129L397,128M432,138L431,138M384,111L397,128M416,381L413,369L402,362M411,394L416,381M370,398L370,386L374,374L377,362M381,406L395,406M411,394L395,406M377,362L389,360L402,362M340,349L357,347M377,362L372,356M357,347L372,356M416,488L430,474M416,488L397,489M397,489L389,475L375,466M430,474L422,461L422,446M375,466L374,461M374,461L387,461L398,456L408,448L420,446M422,446L420,446M444,516L429,521M444,516L445,504L441,491L441,479M429,521L423,517M423,517L420,502L416,488M441,479L430,474M423,517L410,521L397,520L385,526M384,524L388,513L395,502L397,489M363,511L367,500L368,488L376,478L375,466M369,459L374,461M395,406L403,415L404,428L410,438L420,446M411,394L421,404L433,410L445,417M445,417L439,426L435,437M435,437L422,446M616,565L613,554L603,547L597,538M616,565L630,562L642,555L653,547M644,508L631,508L619,514M597,538L607,526L619,514M599,475L595,489L594,503M594,503L608,505L619,514M487,680L490,667L497,656L507,646M535,658L535,655M507,646L520,653L535,655M390,597L403,594L417,597L429,588L443,590M421,635L424,623L435,615L438,602L444,591M443,590L444,591M518,566L502,565L487,559M518,566L525,582M525,582L515,598M474,591L480,581L480,569L487,559M474,591L485,598L499,596L511,601M511,601L515,598M638,249L622,248L606,253M625,286L618,276L614,264L603,256M603,256L606,253M589,281L601,288L609,300L622,305M593,267L602,256M603,256L602,256M558,233L567,230M602,256L592,251L584,243L576,235L567,230M639,229L628,224L618,218L606,215M606,253L608,241L604,228L606,215M559,180L571,185L576,198L587,204M567,230L577,217L587,204M609,339L613,328M609,339L598,335L588,332L578,325L566,325M613,328L602,322L596,310L583,308L575,298M566,325L572,312L575,298M608,364L612,374M608,364L612,352L609,339M625,315L613,328M574,295L575,298M435,437L448,439L456,450L469,453M445,417L459,408M459,408L467,418L475,428L479,441M479,441L469,453M441,479L462,477M462,477L469,467M469,453L469,467M630,199L618,207L606,213M630,199L631,186L627,173L629,160M629,160L615,157M615,157L606,167L607,182L599,193L591,204M606,213L591,204M642,206L630,199M606,215L606,213M656,154L643,159L629,160M612,154L615,157M587,204L591,204M946,230L939,228M911,183L918,194L924,205L929,217M939,228L929,217M1067,379L1065,378M1029,294L1026,305L1016,312M1065,378L1056,370L1049,360L1045,349L1036,341L1032,329L1023,321L1016,312M957,291L969,297L980,303L991,311L1000,320M1000,320L1004,319M1016,312L1004,319M988,366L987,378L993,390L995,402M988,366L1003,365L1018,367M1036,381L1026,376L1018,367M1036,381L1024,387L1015,396L1006,406M1006,406L995,402M975,357L988,366M979,403L995,402M1004,319L1006,332L1009,344L1017,354L1018,367M974,348L984,340L989,327L1000,320M1065,378L1050,378L1036,381M1011,444L1008,432L1009,419L1006,406M427,544L416,548L403,548M427,544L441,562M440,564L441,562M440,564L429,567L417,566L407,569M407,569L409,558L403,548M429,521L430,533L427,544M385,533L396,538L403,548M443,590L438,577L440,564M389,597L399,584L407,569M333,675L319,679L310,693L295,697M333,675L341,685L348,694L352,705M352,705L340,708L334,720L322,722M322,722L303,719M303,719L295,709L295,697M334,651L331,663L333,675M295,696L295,697M361,706L352,705M335,751L333,735L322,722M298,724L303,719M444,179L431,179L419,184M409,172L413,182M413,182L419,184M372,165L370,164M372,165L378,177L378,191L380,205M370,164L358,173L347,183M380,205L370,197L359,195L347,193M347,193L347,183M343,125L353,133L357,144L361,156L370,164M394,160L383,162L372,165M383,208L394,200L406,194L413,182M383,208L380,205M312,142L317,155L327,164L338,173L347,183M322,214L329,206L337,197L347,193M377,221L383,215M383,215L383,208M566,325L555,336L540,342M554,289L547,300L539,312L535,326M535,326L540,342M608,364L597,358L586,355L573,358L562,355L550,354L539,349M540,342L539,349M547,411L542,408M535,396L542,408M535,396L536,384L541,373L540,361L539,349M539,349L539,349M402,362L406,351L411,341M411,341L399,327M372,356L377,344L389,338L394,326M399,327L394,326M357,347L364,338L366,327L366,315L371,305M394,326L382,316L371,305M357,293L368,295M368,295L371,305M416,381L433,375M411,341L432,340M432,340L432,351L429,363L433,375M459,408L462,403M462,403L456,392L456,381M433,375L444,377L456,381M597,538L583,532M594,503L578,516M578,516L583,532M569,576L583,571L598,569L612,572M616,565L612,572M569,576L565,563L565,549M583,532L572,539L565,549M569,576L557,590M557,590L547,586L536,585L525,582M530,542L538,539M530,542L525,554L518,566M565,549L551,546L538,539M619,610L606,613L596,621L585,631L572,633M619,610L633,618L647,623M630,660L616,655L601,664L586,660M630,660L640,651L639,636L648,627M586,660L577,649L570,637M648,627L647,623M570,637L572,633M557,590L557,602L560,613L571,621L572,633M612,572L613,585L616,597L619,610M675,584L669,595L659,602L653,613L647,623M636,686L631,673L630,660M589,690L588,675L586,660M687,652L678,644L668,639L658,633L648,627M535,655L545,647M545,647L558,644L570,637M545,647L537,639L530,629L524,620L522,607L515,598M501,642L496,628M501,642L486,648L471,654M496,628L482,618L466,614M471,654L464,643L451,639M451,639L456,625L466,614M507,646L501,642M511,601L504,615L496,628M470,677L470,666L471,654M463,600L474,591M463,600L466,614M425,648L438,644L451,639M463,600L444,591M489,532L483,543L484,556M489,532L479,521L467,512M484,556L472,555L461,550M461,550L459,534L454,519M454,519L467,512M487,559L484,556M530,542L521,535L515,525L507,517M507,517L501,527L489,532M441,562L451,556L461,550M444,516L454,519M462,477L468,488L474,499M474,499L467,512M503,498L500,484L496,471M503,498L507,500M507,500L524,494M524,494L527,480L528,467M506,457L496,471M506,457L526,463M526,463L528,467M474,499L488,499L503,498M469,467L482,471L496,471M507,517L507,500M549,417L547,430L536,439L531,451L526,463M579,460L569,470M569,470L555,467L541,469L528,467M505,454L491,451L481,440M505,454L514,441L516,425M481,440L495,426M516,425L495,426M479,441L481,440M506,457L505,454M542,408L527,414L516,425M462,403L482,402M482,402L485,416L495,426M535,396L524,395L514,389L502,391M502,391L490,393L482,402M840,201L831,209L822,217M840,201L852,209L865,210M822,217L825,229L835,236L837,248M837,248L845,239L856,234L866,228M865,210L866,228M773,207L782,215L791,222M830,181L834,192L840,201M791,222L807,220L822,217M895,184L883,190L874,199L865,210M791,222L798,235L800,249L802,263M802,263L817,264L832,259M832,259L837,248M879,244L879,246M879,244L866,228M832,259L838,269L848,276M879,246L872,259L858,266L848,276M879,244L887,236L899,233L911,232L917,219L929,217M907,268L898,270M907,268L915,277L926,282L933,293L945,297M898,270L889,279L888,294L878,303M945,297L944,299M944,299L933,303L921,306L912,316L901,319M901,319L883,314M883,314L878,303M939,228L930,237L925,249L917,260L907,268M879,246L890,257L898,270M955,291L945,297M854,292L848,276M854,292L867,296L878,303M949,336L951,323L943,312L944,299M923,352L915,342L908,330L901,319M870,337L878,326L883,314M383,215L389,226L401,230M419,184L422,197L423,210L429,222M429,222L416,229L401,230M465,214L457,232M429,222L442,229L457,232M514,238L514,238M514,238L502,240L491,234L480,235L468,239L457,235M457,232L457,235M547,514L560,516L572,513M547,514L538,499M538,499L548,490L558,481L568,473M572,513L567,500L573,486L568,473M578,516L572,513M538,539L543,526L547,514M524,494L538,499M569,470L568,473M756,252L767,261L783,260L794,269M802,263L798,268M794,269L798,268M746,262L750,277L756,291M794,269L782,277L769,284L756,291M726,302L741,299L756,293M757,331L769,314M769,314L765,302L756,293M756,291L756,293M825,315L825,308M825,315L812,319L806,332L795,337M825,308L817,299L805,294M805,294L800,304L792,313L781,317M795,337L786,328L781,317M854,292L845,299L833,301L825,308M829,325L825,315M795,357L795,337M798,268L801,281L805,294M769,314L781,317M515,308L494,311M515,308L517,294L522,281M494,311L492,298L488,284L480,273M522,281L511,277L500,273L488,271M488,271L480,273M534,273L522,281M535,326L527,314L515,308M514,238L507,250L493,257L488,271M458,266L470,267L480,273M458,266L455,264M455,264L452,249L457,235M484,323L472,315L458,313M484,323L489,335L487,347M487,347L482,354M458,313L441,324M482,354L471,358M471,358L459,352L449,343L439,335M441,324L439,335M458,266L461,278L458,290L459,301L458,313M494,311L484,323M539,349L526,352L513,347L500,348L487,347M502,391L493,380L491,365L482,354M456,381L463,369L471,358M432,340L439,335M420,302L413,318L399,327M420,302L428,316L441,324M418,287L405,288L392,290L379,286M418,287L431,272M431,272L420,264L410,256L402,245M402,245L394,258L381,266M381,266L379,286M420,302L418,287M368,295L379,286M455,264L444,269L431,272M401,230L402,245M364,244L375,253L381,266" fill="none" stroke="#5c5c59" stroke-width="7.2" stroke-linecap="round" stroke-linejoin="round"/>
<path d="M1015,620 L1040,610 L1050,640 L1045,670 L1065,700 L1060,735 L1030,745 L1005,730 L1000,690 L1010,655 Z" fill="#a9c0e4" stroke="#5b5b58" stroke-width="3"/>
<circle cx="1036" cy="706" r="22" fill="#e3001b"/>
<text x="1403" y="116" font-size="52" font-weight="bold" text-anchor="middle" fill="#222">N</text>
<path d="M1405,135 L1365,258 L1405,215 Z" fill="#111"/><path d="M1405,135 L1440,252 L1405,215 Z" fill="none" stroke="#111" stroke-width="4"/>
</g></g>
<clipPath id="rgc"><rect x="1084.5" y="230.3" width="424.29999999999995" height="132.3"/></clipPath>
<g clip-path="url(#rgc)">
<rect x="1084.5" y="230.3" width="424.29999999999995" height="132.3" fill="#f8eed8"/>
<g transform="translate(1295,225) scale(0.14205)">
<path d="M940.0,30.0 L935.0,90.0 L905.0,200.0 L925.0,260.0 L950.0,290.0 L1000.0,230.0 L1050.0,190.0 L1140.0,270.0 L1220.0,185.0 L1250.0,230.0 L1290.0,380.0 L1340.0,460.0 L1420.0,430.0 L1515.0,385.0 L1515.0,30.0 Z" fill="#dfdfe0"/>
<path d="M1515.0,385.0 L1420.0,440.0 L1380.0,500.0 L1320.0,580.0 L1250.0,680.0 L1180.0,720.0 L1190.0,750.0 L1140.0,790.0 L1080.0,830.0 L1040.0,880.0 L1000.0,950.0 L975.0,980.0 L1515.0,980.0 Z" fill="#6cd8f8"/>
</g>
<path d="M1218.2,351.1L1219.7,346.9L1218.2,342.6L1217.5,338.3L1218.8,334.0L1218.6,329.8L1218.8,325.5L1220.4,321.3L1220.1,317.0L1219.7,312.7M1218.2,351.1L1222.4,350.7L1226.6,349.7L1230.3,347.0L1234.4,345.8L1238.8,345.9L1243.3,346.5L1247.2,344.4M1219.7,312.7L1224.0,313.9L1228.2,315.0L1232.7,315.1L1236.9,316.3L1241.1,317.7L1245.6,317.4L1249.9,318.6L1254.4,318.0M1247.2,344.4L1250.8,341.3L1252.3,337.0L1254.7,333.2L1256.0,328.8M1256.0,328.8L1253.8,323.6L1254.4,318.0M1213.3,356.8L1214.2,362.6M1213.3,356.8L1208.9,356.7L1206.2,352.4L1201.5,353.0L1198.0,350.6M1198.0,350.6L1194.3,352.7L1190.6,354.8L1186.0,354.7L1182.8,358.1L1177.9,357.2L1174.5,360.2L1170.0,360.3L1166.4,362.6M1221.6,246.7L1225.9,244.4L1228.8,240.6L1231.5,236.7L1235.3,233.9L1238.4,230.3M1221.6,246.7L1217.9,244.3L1213.7,243.6L1209.2,243.9L1205.4,241.9M1205.4,241.9L1203.4,236.2L1204.8,230.3M1477.5,277.0L1475.1,281.2L1474.7,286.0L1475.3,291.0L1472.7,295.2M1472.7,295.2L1477.5,295.0L1482.3,294.8L1487.0,293.4L1491.9,293.8M1198.0,350.6L1197.3,345.8L1193.5,342.5L1191.3,338.4L1189.9,333.9L1188.6,329.4M1219.7,312.7L1216.4,310.1L1214.8,305.8L1211.3,303.3L1208.0,300.7M1213.3,356.8L1218.2,351.1M1188.6,329.4L1189.9,325.1L1193.1,322.0L1194.7,317.9L1198.9,315.4L1201.7,312.1L1202.0,307.1L1205.6,304.2L1208.0,300.7M1262.3,306.4L1260.4,310.8L1257.6,314.6L1254.4,318.0M1262.3,306.4L1263.3,301.6L1264.3,296.9L1262.1,291.9L1263.0,287.2M1225.0,283.5L1229.2,284.0L1233.5,283.7L1237.8,283.2L1241.9,285.5L1246.2,284.4L1250.3,286.6L1254.5,287.2L1258.9,285.5L1263.0,287.2M1225.0,283.5L1221.3,286.4L1218.7,290.5L1213.9,292.3L1211.5,296.6L1207.6,299.3M1208.0,300.7L1207.6,299.3M1207.6,299.3L1203.8,296.0L1199.6,293.4L1195.4,290.9L1191.2,288.5M1221.6,246.7L1225.5,250.4L1227.9,255.2M1225.0,283.5L1226.5,279.6L1225.3,275.4L1227.1,271.5L1226.5,267.3L1226.9,263.3L1228.2,259.3L1227.9,255.2M1205.4,241.9L1202.2,244.5L1197.9,245.5L1195.0,248.6L1191.5,250.7M1191.5,250.7L1190.6,254.9L1190.7,259.1L1189.9,263.3L1191.7,267.5L1191.8,271.7L1189.6,275.9L1191.2,280.1L1191.5,284.3L1191.2,288.5M1265.2,283.7L1264.8,278.9L1262.3,274.5L1263.6,269.3L1261.9,264.8L1260.0,260.3M1265.2,283.7L1269.3,283.7L1273.3,282.0L1277.5,283.2L1281.7,283.1L1285.7,282.1L1289.8,282.0L1293.5,278.8L1297.7,279.6M1297.7,279.6L1298.8,275.1L1299.4,270.5L1298.4,265.8L1297.2,261.2L1299.0,256.7L1299.1,252.1M1299.1,252.1L1294.7,251.0L1290.4,249.8L1287.7,245.2L1283.5,243.6L1279.2,242.4L1275.3,240.2L1270.9,239.1M1270.9,239.1L1268.2,243.1L1266.7,247.7L1265.5,252.4L1262.8,256.4L1260.0,260.3M1227.9,255.2L1231.9,255.9L1235.9,256.7L1240.0,256.4L1244.1,256.5L1248.0,257.9L1252.1,258.0L1255.8,261.1L1260.0,260.3M1263.0,287.2L1265.2,283.7M1319.1,230.3L1320.8,234.4L1320.5,238.8M1320.3,239.3L1320.5,238.8M1320.3,239.3L1316.9,241.7L1313.2,243.4L1310.1,246.4L1306.2,247.8L1302.6,249.8L1299.1,252.1M1268.9,230.3L1271.4,234.4L1270.9,239.1M1320.3,239.3L1320.3,243.7L1323.1,247.1L1325.8,250.6L1324.5,255.5L1328.6,258.4L1328.3,263.0L1330.5,266.6L1331.9,270.5M1300.9,282.1L1305.2,280.5L1309.7,280.1L1314.2,279.7L1318.5,278.5L1322.8,277.3L1327.4,277.3M1300.9,282.1L1297.7,279.6M1331.9,270.5L1329.9,274.1L1327.4,277.3M1359.4,240.5L1358.6,244.5L1356.8,248.1L1357.4,252.4L1356.9,256.5L1353.2,259.7L1354.7,264.2L1352.3,267.7M1320.5,238.8L1324.8,239.5L1329.2,239.4L1333.4,241.0L1337.9,238.5L1342.1,241.1L1346.5,238.7L1350.8,239.0L1355.1,240.8L1359.4,240.5M1331.9,270.5L1335.8,268.8L1340.1,269.7L1344.2,269.4L1348.0,267.0L1352.3,267.7M1383.7,249.7L1380.5,246.9L1376.4,246.2L1373.7,242.7L1368.6,243.7L1365.1,241.6L1362.2,238.5M1383.7,249.7L1387.0,247.2L1389.3,243.5L1392.8,241.2L1397.1,239.7L1398.9,235.5L1402.4,233.1M1362.2,238.5L1361.3,234.2L1363.3,230.3M1402.4,233.1L1401.7,230.3M1359.4,240.5L1362.2,238.5M1247.2,344.4L1250.0,347.5L1250.4,351.7L1251.4,355.7L1253.1,359.3L1255.5,362.6M1256.0,328.8L1259.9,330.9L1264.2,332.5L1268.2,334.3L1272.0,336.8L1275.9,339.0L1279.3,342.0M1279.2,362.6L1280.6,358.5L1278.9,354.4L1277.9,350.3L1279.7,346.2L1279.3,342.0M1262.3,306.4L1266.3,307.5L1270.8,307.4L1273.8,311.7L1277.9,312.9L1282.6,311.9L1286.0,315.0L1290.4,315.0L1294.2,317.0L1298.2,318.2L1302.4,318.9M1279.3,342.0L1283.6,340.4L1286.9,337.2L1290.3,334.0L1295.4,333.5L1298.6,330.1L1302.6,328.0M1302.6,328.0L1302.3,323.5L1302.4,318.9M1300.9,282.1L1300.8,286.6L1301.9,290.9L1301.6,295.4L1304.4,299.4L1304.4,303.8L1307.0,307.8L1306.4,312.4M1302.4,318.9L1306.4,312.4M1164.8,362.6L1161.7,359.3L1160.3,355.2L1158.4,351.3L1157.2,347.1M1188.6,329.4L1184.2,329.3L1179.9,329.7L1175.7,327.0L1171.3,328.4L1166.9,328.2L1162.7,327.5M1157.2,347.1L1159.6,343.5L1160.3,339.5L1161.3,335.6L1162.9,331.8L1162.7,327.5M1125.2,362.6L1126.7,358.7L1126.0,354.4L1128.9,350.8L1128.0,346.5M1157.2,347.1L1153.0,348.6L1148.9,345.6L1144.7,347.1L1140.5,347.3L1136.3,346.7L1132.2,346.9L1128.0,346.5M1166.6,230.3L1166.4,233.0M1191.5,250.7L1186.9,248.0L1181.9,246.8L1176.7,246.3M1166.4,233.0L1168.3,236.9L1172.3,239.1L1174.3,242.9L1176.7,246.3M1366.8,362.6L1365.3,355.6M1392.7,362.6L1388.9,359.8L1388.1,354.8L1383.5,352.5L1381.8,348.2L1378.5,345.0L1376.8,340.7M1365.3,355.6L1368.5,352.6L1370.8,349.1L1371.1,344.4L1373.9,341.1M1376.8,340.7L1373.9,341.1M1383.7,249.7L1383.8,253.9L1387.4,256.9L1387.0,261.3L1389.1,264.8M1352.3,267.7L1355.8,270.5L1358.1,274.2L1360.5,277.9L1363.7,280.9M1363.7,280.9L1367.6,280.1L1371.6,279.2L1375.8,280.1L1379.9,280.4L1383.8,279.1M1389.1,264.8L1385.7,269.0L1386.1,274.5L1383.8,279.1M1400.6,362.6L1402.3,358.7L1404.1,354.9L1406.8,351.7L1408.6,347.9L1412.2,345.4M1412.2,345.4L1416.5,345.7L1420.1,348.4L1424.7,347.5L1428.3,350.3L1432.7,350.3L1436.8,351.2L1440.6,353.2M1453.9,340.0L1451.9,339.0M1447.1,346.1L1449.4,342.5L1451.9,339.0M1327.4,277.3L1329.4,281.3L1331.2,285.3L1334.0,288.9L1334.4,293.6L1336.4,297.5M1363.7,280.9L1360.2,284.6L1360.6,290.2L1358.1,294.4L1354.5,298.0M1354.5,298.0L1350.0,297.6L1345.4,298.4L1340.9,298.5L1336.4,297.5M1306.4,312.4L1311.0,313.2L1314.9,310.1L1319.6,311.3L1323.7,309.5L1328.0,308.3M1336.4,297.5L1334.8,302.1L1331.4,305.2L1328.0,308.3M1365.3,355.6L1360.2,356.5L1355.4,354.4L1350.5,352.6L1345.4,353.5M1340.1,362.6L1340.6,357.2M1340.6,357.2L1345.4,353.5M1373.9,341.1L1368.9,340.9L1364.5,339.3L1360.0,337.7L1356.1,334.5M1345.4,353.5L1346.9,349.3L1348.7,345.3L1353.2,342.9L1354.8,338.8L1356.1,334.5M1360.6,310.6L1359.9,305.8L1356.8,302.1L1354.5,298.0M1360.6,310.6L1357.5,314.0L1355.7,318.1L1354.8,322.7L1352.0,326.2M1328.0,308.3L1330.0,312.0L1333.4,314.7L1335.3,318.5L1336.7,322.6L1340.1,325.4M1340.1,325.4L1346.1,324.8L1352.0,326.2M1308.4,352.3L1306.4,347.9L1307.6,342.8L1305.4,338.4L1303.4,334.0L1303.5,329.1M1308.4,352.3L1312.6,351.3L1316.7,350.8L1321.1,352.5L1325.2,350.6L1329.5,351.8L1333.6,349.9M1303.5,329.1L1307.9,330.2L1311.9,332.8L1316.4,333.9L1321.1,333.9L1325.3,335.8L1330.0,336.0M1333.6,349.9L1331.7,345.5L1329.9,341.0L1330.0,336.0M1305.7,362.6L1307.4,357.5L1308.4,352.3M1302.6,328.0L1303.5,329.1M1340.6,357.2L1336.0,354.6L1333.6,349.9M1340.1,325.4L1336.8,329.0L1333.0,332.2L1330.0,336.0M1356.1,334.5L1354.9,330.0L1352.0,326.2M1191.2,288.5L1186.5,288.1L1182.6,291.3L1177.7,290.1L1173.6,292.2L1169.1,292.8L1164.8,294.2L1160.4,295.1M1162.7,327.5L1161.8,322.5L1158.2,318.6L1155.4,314.4L1155.0,309.2M1160.4,295.1L1157.6,299.4L1156.3,304.3L1155.0,309.2M1166.4,233.0L1161.9,232.9L1157.7,235.5L1153.2,235.8L1148.6,235.0L1144.1,235.2L1139.7,236.1L1135.3,236.9L1130.9,237.8M1127.9,230.3L1128.9,234.2L1130.9,237.8M1476.5,316.0L1472.5,313.7L1470.1,309.8L1467.2,306.6M1451.9,339.0L1451.2,334.4L1452.5,329.8L1451.6,325.2M1451.6,325.2L1454.3,322.2L1457.4,319.5L1459.9,316.3L1463.0,313.7L1465.5,310.4L1467.2,306.6M1472.7,295.2L1468.9,297.5M1468.9,297.5L1469.5,302.3L1467.2,306.6M1449.7,256.9L1447.4,260.5L1446.5,264.7L1445.6,269.0L1442.6,272.2L1440.8,276.0M1417.9,261.4L1420.2,265.3L1423.4,268.3L1428.2,269.7L1431.1,272.9L1433.5,276.7M1417.9,261.4L1418.5,257.2L1419.3,252.9L1416.1,248.8L1416.0,244.5L1417.3,240.2M1440.8,276.0L1433.5,276.7M1417.3,240.2L1421.2,238.7L1424.5,236.3L1427.8,233.8M1468.3,251.3L1468.3,251.3M1468.9,297.5L1466.0,293.9L1461.2,292.9L1458.3,289.4L1455.5,285.9L1451.1,284.4L1447.6,281.7L1443.3,280.0L1440.8,276.0M1402.4,233.1L1405.7,235.8L1409.9,236.5L1413.8,238.1L1417.3,240.2M1389.1,264.8L1393.3,264.9L1397.5,265.1L1401.6,264.6L1405.5,262.4L1409.7,262.8L1413.8,261.5L1417.9,261.4M1176.7,246.3L1172.7,248.1L1169.5,251.0L1166.5,254.0L1162.9,256.3L1160.3,259.8L1156.9,262.4L1154.5,266.2L1150.1,267.5L1147.3,270.7M1130.9,237.8L1130.7,239.1M1130.7,239.1L1133.4,242.8L1134.6,247.1L1138.4,250.2L1139.3,254.8L1140.7,259.1L1142.7,263.0L1145.0,266.9L1147.3,270.7M1160.4,295.1L1157.0,291.7L1155.3,287.1L1152.6,283.2L1149.7,279.5L1146.7,275.8M1147.3,270.7L1146.7,275.8M1408.5,325.6L1412.2,322.3L1415.8,318.7L1420.5,316.7M1408.5,325.6L1403.9,324.2L1398.9,324.7L1395.1,320.7L1390.2,320.8M1420.5,316.7L1420.1,312.3L1419.9,308.0L1420.6,303.7L1419.4,299.4L1422.2,295.1L1420.9,290.8M1390.2,320.8L1386.1,314.3M1386.1,314.3L1388.4,310.3L1388.5,305.9L1388.4,301.5L1390.3,297.4L1388.9,292.8L1390.2,288.7M1390.2,288.7L1394.6,288.8L1399.0,288.1L1403.4,289.3L1407.6,291.3L1412.1,290.7L1416.5,290.6L1420.9,290.8M1412.2,345.4L1411.6,341.4L1411.2,337.4L1410.3,333.5L1409.1,329.6L1408.5,325.6M1451.6,325.2L1447.7,324.1L1443.5,324.4L1439.9,322.2L1436.2,320.4L1431.9,320.8L1428.1,319.5L1424.7,316.7L1420.5,316.7M1376.8,340.7L1378.4,336.0L1381.3,332.1L1385.7,329.4L1386.4,324.1L1390.2,320.8M1433.5,276.7L1430.8,280.7L1426.1,282.8L1424.3,287.5L1420.9,290.8M1360.6,310.6L1364.7,312.3L1369.0,312.7L1373.6,310.8L1377.7,312.1L1381.6,315.1L1386.1,314.3M1383.8,279.1L1387.5,283.5L1390.2,288.7M1130.7,239.1L1127.5,242.1L1123.0,243.4L1121.4,248.3L1116.2,248.8L1113.6,252.4L1110.2,255.1L1108.2,259.5L1103.8,260.9M1146.7,275.8L1142.6,276.3L1138.4,276.5L1134.6,278.8L1130.8,280.7L1126.7,281.4L1122.3,281.0M1122.3,281.0L1118.2,278.7L1115.9,274.5L1113.8,270.2L1108.9,268.6L1106.6,264.5L1103.8,260.9M1155.0,309.2L1151.2,310.5L1147.3,311.5L1143.3,312.1L1139.3,313.1L1135.7,315.3L1131.3,314.3L1127.6,316.3L1123.7,317.3M1122.3,281.0L1120.6,285.4L1116.6,288.5L1115.1,293.0L1113.6,297.5M1113.6,297.5L1116.6,300.9L1116.2,306.2L1119.4,309.5L1122.1,313.1L1123.7,317.3M1128.0,346.5L1124.3,343.5L1120.8,340.3L1118.3,336.3L1115.9,332.2M1123.7,317.3L1122.4,321.4L1120.3,325.0L1116.4,327.7L1115.9,332.2M1095.0,362.6L1096.7,358.7L1096.7,354.3L1098.6,350.5L1100.1,346.5L1100.4,342.1L1102.9,338.6L1104.4,334.6M1104.4,334.6L1110.1,333.4L1115.9,332.2M1090.4,237.8L1090.8,242.2L1093.9,245.4L1094.8,249.6L1096.5,253.4L1099.7,256.5L1100.3,260.8M1090.4,237.8L1084.5,237.6M1100.3,260.8L1096.2,263.5L1092.5,266.7L1089.1,270.4L1084.5,272.4M1095.4,230.3L1094.3,235.0L1090.4,237.8M1103.8,260.9L1100.3,260.8M1113.6,297.5L1109.5,295.5L1105.1,298.2L1101.2,295.1L1096.9,296.6L1092.7,297.2L1088.8,293.9L1084.5,295.1M1104.4,334.6L1100.6,332.3L1096.3,331.3L1092.9,328.1L1088.8,326.8L1084.5,325.6" fill="none" stroke="#53534d" stroke-width="1.2" stroke-linejoin="round" stroke-linecap="round"/>
<path d="M1428.5,230.3L1423.6,253.4L1429.9,266.2L1444.1,252.0L1456.9,263.4L1468.3,251.3L1478.2,279.0L1485.3,290.3L1496.7,286.8L1482.5,307.4L1472.6,321.6L1462.6,327.3L1456.9,337.2L1442.7,350.0L1434.2,362.6" fill="none" stroke="#55554f" stroke-width="1.0" stroke-linejoin="round"/>
<path d="M1276.0,254.9 L1288.0,251.4 L1297.0,258.3 L1291.7,268.7 L1298.6,287.8 L1307.3,308.6 L1317.7,315.5 L1319.5,324.2 L1307.3,322.5 L1295.2,329.4 L1291.7,319.0 L1277.8,317.3 L1274.4,306.9 L1267.4,294.7 L1258.8,286.0 L1270.9,277.4 L1277.8,267.0 L1274.4,258.3 Z" fill="#a6bde2" stroke="#4e5560" stroke-width="0.8"/>
<path d="M1084.0,293.0L1094.5,294.4L1105.0,296.0L1113.2,299.7L1121.5,303.0L1130.0,306.0L1140.2,308.8L1149.9,313.0L1160.0,316.0L1168.0,317.3L1176.0,317.5L1184.0,318.3L1191.9,319.2L1200.0,319.0L1208.0,319.3L1216.0,318.6L1224.0,318.5L1232.0,318.6L1240.0,318.0L1248.7,318.5L1257.5,317.8L1266.3,318.0L1275.0,319.0L1283.3,318.0L1291.7,318.2L1300.0,317.0L1310.1,317.9L1320.0,319.4L1330.0,321.0L1339.8,326.0L1350.0,330.0L1358.5,332.1L1366.8,335.0L1375.0,338.0L1384.9,335.1L1395.0,333.0L1403.3,331.9L1411.7,332.7L1420.0,332.0L1430.0,331.4L1440.0,331.2L1450.0,331.0M1180.0,232.0L1185.2,240.9L1190.0,250.0L1197.8,253.4L1205.0,258.0L1212.2,264.4L1220.0,270.0L1227.9,276.6L1235.0,284.0L1245.1,287.7L1255.0,292.0L1262.3,296.3L1270.0,300.0L1277.7,308.8L1285.0,318.0M1190.0,250.0L1184.0,256.0L1178.0,262.0L1169.1,267.2L1160.0,272.0L1150.0,274.9L1140.0,278.0L1130.0,277.8L1120.0,277.0M1135.0,362.0L1139.9,353.5L1145.0,345.0L1149.3,337.1L1155.0,330.0L1159.4,322.5L1165.0,316.0M1155.0,280.0L1156.0,290.0L1157.0,300.0L1158.0,308.1L1160.0,316.0M1355.0,232.0L1354.7,241.0L1356.0,250.0L1354.8,258.3L1354.6,266.7L1354.0,275.0L1351.8,283.3L1349.7,291.6L1348.0,300.0L1343.7,309.9L1340.0,320.0L1334.3,329.6L1330.0,340.0L1327.7,351.1L1325.0,362.0M1340.0,320.0L1346.6,313.3L1353.6,307.0L1360.0,300.0L1366.3,293.0L1372.9,286.2L1380.0,280.0L1387.9,274.5L1395.0,268.0L1410.0,265.0L1425.0,262.0M1300.0,362.0L1304.4,354.2L1310.5,347.7L1315.0,340.0L1320.5,334.1L1324.6,327.0L1330.0,321.0M1330.0,321.0L1334.7,329.2L1340.3,336.8L1345.0,345.0L1347.9,353.4L1350.0,362.0M1280.0,352.0L1290.3,349.2L1300.0,345.0L1310.3,339.0L1320.0,332.0M1084.0,300.0L1092.2,296.4L1100.0,292.0L1109.9,285.9L1120.0,280.0" fill="none" stroke="#f08a80" stroke-width="1.15" stroke-linejoin="round"/>
<path d="M1110.0,232.0L1113.2,239.0L1118.0,245.0L1123.6,249.4L1128.8,254.4L1135.0,258.0L1141.2,264.3L1148.0,270.0L1150.0,276.0M1140.0,262.0L1146.4,258.8L1153.5,257.9L1160.0,255.0L1165.9,256.7L1171.9,257.8L1178.0,258.0L1185.0,262.0M1225.0,232.0L1223.1,237.9L1222.6,244.2L1220.0,250.0L1216.8,257.3L1215.0,265.0L1216.2,271.6L1217.6,278.2L1218.0,285.0L1222.0,290.2L1225.0,296.0L1230.4,300.1L1235.0,305.0L1231.9,312.3L1230.0,320.0L1225.6,325.6L1219.4,329.4L1215.0,335.0L1208.9,340.1L1201.4,343.3L1195.0,348.0L1190.4,355.3L1185.0,362.0M1218.0,285.0L1211.5,290.0L1205.0,295.0L1197.7,298.1L1190.0,300.0L1184.6,302.7L1180.4,307.2L1175.0,310.0L1165.0,315.0M1255.0,232.0L1258.6,238.5L1262.0,245.0L1266.8,250.2L1272.0,255.0L1278.0,262.0M1237.0,272.0L1243.0,271.2L1248.9,270.1L1255.0,270.0L1263.5,268.6L1272.0,268.0M1084.0,320.0L1088.9,326.6L1095.0,332.0L1101.8,332.3L1108.5,333.0L1115.0,335.0L1121.5,334.0L1127.7,332.2L1133.8,330.1L1140.0,328.0L1147.5,324.0L1155.0,320.0M1155.0,330.0L1157.6,335.5L1161.8,339.9L1165.0,345.0L1170.6,348.6L1175.1,353.6L1180.0,358.0L1190.0,362.0M1200.0,362.0L1206.3,359.6L1212.5,357.1L1219.0,355.2L1225.0,352.0L1231.6,350.5L1238.4,351.4L1245.0,350.0L1253.5,351.0L1262.0,352.0L1268.3,356.4L1275.0,360.0M1320.0,232.0L1320.8,238.0L1321.7,244.0L1322.0,250.0L1323.7,256.6L1325.1,263.2L1326.0,270.0L1327.4,276.6L1328.5,283.4L1330.0,290.0L1331.9,297.7L1335.0,305.0L1337.1,311.4L1338.0,318.0M1338.0,232.0L1341.6,238.5L1345.0,245.0L1348.4,250.0L1352.0,255.0M1330.0,290.0L1340.0,295.0L1345.0,305.0L1348.0,310.4L1352.0,315.0L1360.0,318.0M1380.0,298.0L1383.7,304.2L1388.0,310.0L1389.8,316.1L1392.0,322.0L1400.0,328.0M1395.0,285.0L1397.2,290.6L1400.0,296.0L1399.1,302.0L1398.0,308.0L1400.0,318.0M1420.0,292.0L1426.4,287.5L1432.0,282.0L1438.7,281.2L1445.0,279.0L1455.0,285.0L1460.0,290.0M1418.0,335.0L1422.0,345.0L1423.9,353.5L1426.0,362.0M1425.0,335.0L1429.2,342.2L1432.0,350.0L1434.1,356.0L1436.0,362.0M1262.0,318.0L1265.4,324.8L1268.0,332.0L1272.0,338.2L1275.0,345.0L1278.7,350.5L1281.1,356.7L1285.0,362.0M1296.0,300.0L1300.7,304.8L1305.0,310.0L1312.0,318.0M1300.0,340.0L1310.0,345.0L1318.0,350.0M1436.0,362.0L1440.4,355.9L1445.0,350.0L1448.3,344.9L1452.0,340.0" fill="none" stroke="#8cb832" stroke-width="1.15" stroke-linejoin="round"/>
<g font-size="5.5" font-weight="bold" text-anchor="middle" fill="#161616" stroke="#f8eed8" stroke-width="0.7" paint-order="stroke" stroke-linejoin="round">
<text x="1121" y="252.6">Ivaí</text>
<text x="1159.5" y="253.6">Ipiranga</text>
<text x="1218.5" y="240.4">Carambeí</text>
<text x="1269.6" y="245.1">Castro</text>
<text x="1156.4" y="278.0">Imbituva</text>
<text x="1237.4" y="273.9">Ponta Grossa</text>
<text x="1106.3" y="289.6">Prudentópolis</text>
<text x="1131" y="324.3">Irati</text>
<text x="1220" y="319.6">Palmeira</text>
<text x="1152.4" y="342.8">Rebouças</text>
<text x="1134.3" y="356.6">Rio Azul</text>
<text x="1256.4" y="353.0">Lapa</text>
<text x="1336.5" y="247.9">Cerro Azul</text>
<text x="1381" y="248.9">Tunas do Paraná</text>
<text x="1447" y="290.8">Guaraqueçaba</text>
<text x="1403.7" y="298.3">Antonina</text>
<text x="1330.5" y="321.6">Curitiba</text>
<text x="1389.5" y="330.3">Morretes</text>
<text x="1435" y="331.3">Paranaguá</text>
<text x="1398.7" y="356.1">Guaratuba</text>
</g></g>
<g fill="none" stroke="#4a4a4a" stroke-width="1.4"><rect x="1084.4" y="65.8" width="424.3" height="296.9"/><path d="M1084.4,229.9H1508.8" stroke-width="1.5"/></g>
<text x="1092.3" y="400.7" font-size="18.3" font-weight="bold" text-anchor="start" fill="#111" >Convenções Cartográficas</text>
<path d="M1112.5,425.5 H1135 V438.5 H1126.5 V448.5 H1113 V442.5 H1104.5 V431.5 H1112.5 Z" fill="#fff" stroke="#d30707" stroke-width="2" stroke-linejoin="miter"/>
<text x="1149.7" y="439" font-size="11.9" font-weight="normal" text-anchor="start" fill="#111" >Área de Estudo</text>
<text x="1098" y="482.3" font-size="15.5" font-weight="bold" text-anchor="start" fill="#111" >Curvas de Nível (Equidistância de 1 m)</text>
<path d="M1099,501 C1107,497 1113,498 1119,504 S1131,511 1139,506" fill="none" stroke="#ececec" stroke-width="1"/>
<text x="1147" y="508" font-size="11.85" font-weight="normal" text-anchor="start" fill="#111" >Curva Intermediária</text>
<path d="M1099,528 C1107,524 1113,525 1119,531 S1131,538 1139,533" fill="none" stroke="#a9a9a9" stroke-width="0.9"/>
<text x="1147" y="536" font-size="11.85" font-weight="normal" text-anchor="start" fill="#111" >Curva Mestra</text>
<text x="1100" y="560.4" font-size="15.6" font-weight="bold" text-anchor="start" fill="#111" >Altimetria</text>
<rect x="1097.7" y="573.1" width="34" height="16.3" fill="#6b9b5c" stroke="#7d7d7d" stroke-width="1"/>
<text x="1137.5" y="585.3" font-size="11.8" font-weight="normal" text-anchor="start" fill="#111" >918 - 926</text>
<rect x="1097.7" y="596.2" width="34" height="16.3" fill="#aecb7c" stroke="#7d7d7d" stroke-width="1"/>
<text x="1137.5" y="608.4" font-size="11.8" font-weight="normal" text-anchor="start" fill="#111" >926 - 935</text>
<rect x="1097.7" y="619.4" width="34" height="16.3" fill="#f2eea0" stroke="#7d7d7d" stroke-width="1"/>
<text x="1137.5" y="631.6" font-size="11.8" font-weight="normal" text-anchor="start" fill="#111" >935 - 943</text>
<rect x="1097.7" y="642.5" width="34" height="16.3" fill="#f3e29b" stroke="#7d7d7d" stroke-width="1"/>
<text x="1137.5" y="654.7" font-size="11.8" font-weight="normal" text-anchor="start" fill="#111" >943 - 951</text>
<rect x="1097.7" y="665.6" width="34" height="16.3" fill="#f3cf87" stroke="#7d7d7d" stroke-width="1"/>
<text x="1137.5" y="677.8" font-size="11.8" font-weight="normal" text-anchor="start" fill="#111" >951 - 960</text>
<rect x="1097.7" y="688.8" width="34" height="16.3" fill="#dcaa82" stroke="#7d7d7d" stroke-width="1"/>
<text x="1137.5" y="701.0" font-size="11.8" font-weight="normal" text-anchor="start" fill="#111" >960 - 968</text>
<rect x="1097.7" y="711.9" width="34" height="16.3" fill="#c48c7e" stroke="#7d7d7d" stroke-width="1"/>
<text x="1137.5" y="724.1" font-size="11.8" font-weight="normal" text-anchor="start" fill="#111" >968 - 977</text>
<rect x="1097.7" y="735.0" width="34" height="16.3" fill="#e8b5c1" stroke="#7d7d7d" stroke-width="1"/>
<text x="1137.5" y="747.2" font-size="11.8" font-weight="normal" text-anchor="start" fill="#111" >977 - 985</text>
<rect x="1097.7" y="758.1" width="34" height="16.3" fill="#fdf0fc" stroke="#7d7d7d" stroke-width="1"/>
<text x="1137.5" y="770.3" font-size="11.8" font-weight="normal" text-anchor="start" fill="#111" >985 - 994</text>
<rect x="1086.7" y="839.3" width="435.0" height="226.5" fill="#fff" stroke="#111" stroke-width="1.8"/>
<path d="M1086.7,871.4H1521.7M1086.7,903.6H1521.7M1086.7,935H1521.7M1086.7,961.9H1521.7M1289.7,935V1022.2M1407.2,935V961.9M1249.6,961.9V1065.8M1330.5,961.9V1022.2M1249.6,990.4H1330.5M1086.7,1022.2H1330.5" fill="none" stroke="#111" stroke-width="1.6"/>
<text x="1089.5" y="848.3" font-size="6.0" font-weight="normal" text-anchor="start" fill="#555" >TÍTULO:</text>
<text x="1089.5" y="880.3" font-size="6.0" font-weight="normal" text-anchor="start" fill="#555" >PROEJTO:</text>
<text x="1089.5" y="912" font-size="6.0" font-weight="normal" text-anchor="start" fill="#555" >TITULAR</text>
<text x="1088.5" y="942.3" font-size="6.0" font-weight="normal" text-anchor="start" fill="#555" >MUNICÍPIO - UF:</text>
<text x="1292.3" y="942.6" font-size="6.0" font-weight="normal" text-anchor="start" fill="#555" >LOCALIDADE:</text>
<text x="1410" y="943.2" font-size="6.0" font-weight="normal" text-anchor="start" fill="#555" >MATRÍCULA Nº:</text>
<text x="1252" y="969" font-size="6.0" font-weight="normal" text-anchor="start" fill="#555" >DATA:</text>
<text x="1292.5" y="968.2" font-size="6.0" font-weight="normal" text-anchor="start" fill="#555" >ANEXO:</text>
<text x="1252" y="998" font-size="6.0" font-weight="normal" text-anchor="start" fill="#555" >FOLHA:</text>
<text x="1292.5" y="998" font-size="6.0" font-weight="normal" text-anchor="start" fill="#555" >ÁREA (m²):</text>
<text x="1088.5" y="1031" font-size="6.0" font-weight="normal" text-anchor="start" fill="#555" >DESENHO:</text>
<text x="1307.4" y="861" font-size="15.35" font-weight="bold" text-anchor="middle" fill="#111" >MAPA DE MODELO DIGITAL DO TERRENO</text>
<text x="1299.7" y="894.8" font-size="13.25" font-weight="bold" text-anchor="middle" fill="#111" >EMPREENDIMENTO IMOBILIÁRIO</text>
<text x="1301.6" y="925.8" font-size="11.3" font-weight="bold" text-anchor="middle" fill="#111" >CONCEITO RURAL ADMINISTRADORA DE BENS LTDA</text>
<text x="1182.8" y="954.7" font-size="8.3" font-weight="normal" text-anchor="middle" fill="#333" >Campo Largo - PR</text>
<text x="1348.4" y="954.7" font-size="8.3" font-weight="normal" text-anchor="middle" fill="#333" >Itaqui de Cima</text>
<text x="1459" y="954.7" font-size="8.3" font-weight="normal" text-anchor="middle" fill="#333" >26.341</text>
<text x="1268.9" y="982.4" font-size="8.2" font-weight="normal" text-anchor="middle" fill="#333" >abr/2023</text>
<text x="1308.4" y="982.8" font-size="10.5" font-weight="normal" text-anchor="middle" fill="#333" >9</text>
<text x="1267.8" y="1015.5" font-size="6.8" font-weight="normal" text-anchor="middle" fill="#333" >A2</text>
<text x="1310.3" y="1015.5" font-size="6.6" font-weight="normal" text-anchor="middle" fill="#333" >130.075,002</text>
<text x="1170.5" y="1049" font-size="7.37" font-weight="normal" text-anchor="middle" fill="#333" >NATHÁLIA MARQUES GOMES</text>
<text x="1351.7" y="983" font-size="11.5" font-weight="normal" text-anchor="middle" fill="#111" >N</text>
<path d="M1351.7,987.3 L1343.3,1013.8 L1351.7,1003.8 Z" fill="#111"/><path d="M1351.7,987.3 L1359.8,1013.8 L1351.7,1003.8 Z" fill="#fff" stroke="#111" stroke-width="0.7"/>
<text x="1448" y="975.3" font-size="5.95" font-weight="bold" text-anchor="middle" fill="#222" >BASE CARTOGRÁFICA</text>
<text x="1448" y="984.3" font-size="5.5" font-weight="normal" text-anchor="middle" fill="#333" >Projeção: Universal Transverse de Mercator</text>
<text x="1448" y="990.6" font-size="5.5" font-weight="normal" text-anchor="middle" fill="#333" >Sistema de Coordenadas: UTM</text>
<text x="1448" y="996.6" font-size="5.5" font-weight="normal" text-anchor="middle" fill="#333" >Datum: SIRGAS 2000</text>
<text x="1448" y="1003" font-size="5.5" font-weight="normal" text-anchor="middle" fill="#333" >Fuso: 22S</text>
<text x="1448" y="1009.2" font-size="5.5" font-weight="normal" text-anchor="middle" fill="#333" >Escala: 1:1.500</text>
<text x="1448" y="1025.3" font-size="5.5" font-weight="normal" text-anchor="middle" fill="#333" >Fontes:</text>
<text x="1450" y="1032" font-size="5.5" font-weight="normal" text-anchor="middle" fill="#333" >Departamento de Estradas e Rodagem (DER) - 2012</text>
<rect x="1258.7" y="1054.2" width="104.6" height="4.4" fill="#fff" stroke="#111" stroke-width="0.6"/>
<rect x="1258.7" y="1054.2" width="27" height="4.4" fill="#111"/><rect x="1310" y="1054.2" width="53.3" height="4.4" fill="#111"/>
<text x="1258.7" y="1051.8" font-size="4.6" font-weight="normal" text-anchor="middle" fill="#222" >0</text>
<text x="1285.2" y="1051.8" font-size="4.6" font-weight="normal" text-anchor="middle" fill="#222" >15</text>
<text x="1311" y="1051.8" font-size="4.6" font-weight="normal" text-anchor="middle" fill="#222" >30</text>
<text x="1362.6" y="1051.8" font-size="4.6" font-weight="normal" text-anchor="middle" fill="#222" >60</text>
<text x="1364.2" y="1058.6" font-size="5.3" font-weight="normal" text-anchor="start" fill="#222" >Metros</text>
<path d="M1131.63,976.32 A10.4,10.4 0 1 1 1129.20,983.00" fill="none" stroke="#1e9fdc" stroke-width="7.0"/>
<rect x="1130.1" y="980.6" width="9.5" height="4.9" fill="#1e9fdc"/>
<path d="M1130.97,976.32 A10.4,10.4 0 1 0 1133.40,983.00" fill="none" stroke="#1f5b9a" stroke-width="7.0"/>
<rect x="1123.0" y="980.6" width="9.5" height="4.9" fill="#1f5b9a"/>
<rect x="1129.2" y="974.2" width="4.2" height="17.8" rx="1.2" fill="#f07a35"/>
<rect x="1126" y="980.6" width="5" height="4.9" fill="#1f5b9a"/>
<rect x="1131.6" y="980.6" width="5" height="4.9" fill="#1e9fdc"/>
<rect x="1129.6" y="978.5" width="3.4" height="9" fill="#f07a35"/>
<text x="1091.9" y="1010.4" font-size="11.2" fill="#4b79a6" textLength="78.2" lengthAdjust="spacingAndGlyphs">GRAF&amp;GOMES</text>
<text x="1097.8" y="1017" font-size="4.2" fill="#e98a5c" textLength="65.9" lengthAdjust="spacingAndGlyphs">GEOLOGIA E MEIO AMBIENTE</text>
<clipPath id="gearc"><path d="M1227.07,985.49 L1230.16,985.92 L1230.16,990.88 L1227.07,991.31 L1226.06,995.07 L1228.52,996.98 L1226.04,1001.28 L1223.15,1000.11 L1220.41,1002.85 L1221.58,1005.74 L1217.28,1008.22 L1215.37,1005.76 L1211.61,1006.77 L1211.18,1009.86 L1206.22,1009.86 L1205.79,1006.77 L1202.03,1005.76 L1200.12,1008.22 L1195.82,1005.74 L1196.99,1002.85 L1194.25,1000.11 L1191.36,1001.28 L1188.88,996.98 L1191.34,995.07 L1190.33,991.31 L1187.24,990.88 L1187.24,985.92 L1190.33,985.49 L1191.34,981.73 L1188.88,979.82 L1191.36,975.52 L1194.25,976.69 L1196.99,973.95 L1195.82,971.06 L1200.12,968.58 L1202.03,971.04 L1205.79,970.03 L1206.22,966.94 L1211.18,966.94 L1211.61,970.03 L1215.37,971.04 L1217.28,968.58 L1221.58,971.06 L1220.41,973.95 L1223.15,976.69 L1226.04,975.52 L1228.52,979.82 L1226.06,981.73 Z"/></clipPath>
<g clip-path="url(#gearc)">
<rect x="1185.7" y="965.4" width="46" height="46" fill="#8e8e8e"/>
<path d="M1208.7,988.4 L1178.99,992.58 A30,30 0 0 1 1219.94,960.58 Z" fill="#1a4f93"/>
<path d="M1208.7,988.4 L1238.41,992.58 A30,30 0 0 1 1197.46,1016.22 Z" fill="#1a4f93"/>
</g>
<path d="M1185.92,991.60 Q1197.44,994.90 1204.39,993.92" fill="none" stroke="#fff" stroke-width="1.7"/>
<path d="M1217.32,967.07 Q1208.70,975.40 1206.08,981.91" fill="none" stroke="#fff" stroke-width="1.7"/>
<path d="M1231.48,991.60 Q1221.31,985.26 1214.36,984.29" fill="none" stroke="#fff" stroke-width="1.7"/>
<path d="M1200.08,1009.73 Q1208.70,1001.40 1211.32,994.89" fill="none" stroke="#fff" stroke-width="1.7"/>
<ellipse cx="1208.7" cy="988.4" rx="9.3" ry="12.6" transform="rotate(-28 1208.7 988.4)" fill="#fff"/>
<path d="M1207.7,977.4 C1216.7,984.4 1217.7,994.4 1210.7,997.9 C1203.7,999.4 1199.7,992.4 1202.7,986.4 C1204.7,982.4 1206.7,980.4 1207.7,977.4 Z" fill="#1b86c9"/>
<path d="M1207.7,977.4 C1216.7,984.4 1217.7,992.4 1212.7,996.4 C1213.7,990.4 1210.7,984.4 1207.7,977.4 Z" fill="#143f86"/>
<ellipse cx="1208.2" cy="990.9" rx="3.4" ry="4.6" fill="#58a84a"/>
<ellipse cx="1209.3" cy="991.8" rx="1.7" ry="2.6" fill="#cfe9f6"/>
<text x="1172.3" y="1017.4" font-size="5.3" font-weight="bold" fill="#1d1d1d" textLength="73.9" lengthAdjust="spacingAndGlyphs">Floriano Serviços Ambientais</text>
</svg></body></html>
